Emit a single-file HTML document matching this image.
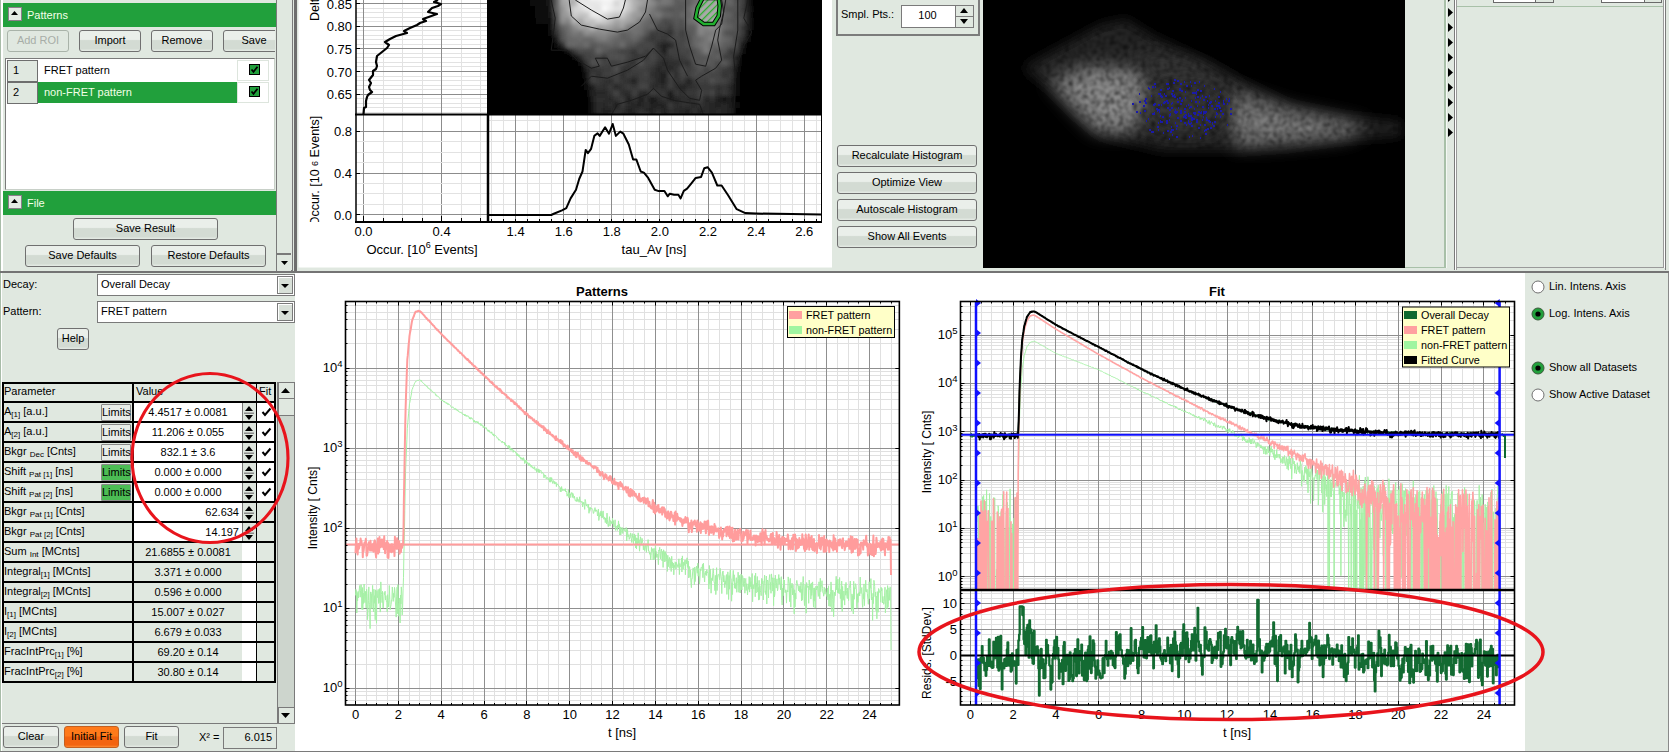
<!DOCTYPE html><html><head><meta charset="utf-8"><style>
*{margin:0;padding:0;box-sizing:content-box}
html,body{width:1669px;height:752px;overflow:hidden;background:#e0e8e0;font-family:"Liberation Sans",sans-serif;font-size:11px;color:#000}
body>div,body>svg{position:absolute}
.t{position:absolute;white-space:nowrap;line-height:13px}
.btn{position:absolute;border:1px solid #707070;border-radius:3px;text-align:center;white-space:nowrap;
 background:linear-gradient(#eaefea 0%,#eaefea 42%,#d3dbd3 48%,#d3dbd3 88%,#e6ece6 100%)}
sub{font-size:8px;vertical-align:0;position:relative;top:2px}
</style></head><body><div style="left:0px;top:0px;width:1px;height:272px;background:#a8bca8"></div><div style="left:1px;top:0px;width:2px;height:272px;background:#fff"></div><div style="left:3px;top:3px;width:274px;height:24px;background:#21a03c"></div><div style="left:8px;top:7px;width:12px;height:12px;background:#e4ebe4;border:1px solid #8a7f8a"></div><svg style="left:11px;top:11px" width="7" height="4"><polygon points="0,4 7,4 3.5,0" fill="#000"/></svg><div class="t" style="left:27px;top:9px;color:#f4ffe8;font-size:11px">Patterns</div><div class="btn" style="left:7px;top:30px;width:60px;height:20px;line-height:19px;color:#a7ada7;border-color:#a9b3a9;background:#e0e8e0">Add ROI</div><div class="btn" style="left:79px;top:30px;width:60px;height:20px;line-height:19px;">Import</div><div class="btn" style="left:151px;top:30px;width:60px;height:20px;line-height:19px;">Remove</div><div style="left:0;top:0;width:275px;height:272px;overflow:hidden"><div class="btn" style="left:223px;top:30px;width:60px;height:20px;line-height:19px">Save</div></div><div style="left:5px;top:58px;width:268px;height:130px;background:#fff;border:1px solid #7a7a7a;border-right-color:#c8d0c8;border-bottom-color:#c8d0c8"></div><div style="left:7px;top:60px;width:29px;height:20px;background:#e0e8e0;border:1px solid #6e6e6e"></div><div class="t" style="left:13px;top:64px;">1</div><div class="t" style="left:44px;top:64px;">FRET pattern</div><div style="left:237px;top:60px;width:32px;height:21px;border:1px solid #dde5dd;box-sizing:border-box"></div><svg style="left:249px;top:64px" width="11" height="11"><rect x="0.5" y="0.5" width="10" height="10" fill="#21a03c" stroke="#000"/><path d="M2.5 5.5 L4.5 7.8 L8.5 2.8" stroke="#000" stroke-width="1.8" fill="none"/></svg><div style="left:7px;top:82px;width:29px;height:20px;background:#e0e8e0;border:1px solid #6e6e6e"></div><div class="t" style="left:13px;top:86px;">2</div><div style="left:38px;top:82px;width:199px;height:21px;background:#21a03c"></div><div class="t" style="left:44px;top:86px;color:#f2ffe6">non-FRET pattern</div><div style="left:237px;top:82px;width:32px;height:21px;border:1px solid #dde5dd;box-sizing:border-box"></div><svg style="left:249px;top:86px" width="11" height="11"><rect x="0.5" y="0.5" width="10" height="10" fill="#21a03c" stroke="#000"/><path d="M2.5 5.5 L4.5 7.8 L8.5 2.8" stroke="#000" stroke-width="1.8" fill="none"/></svg><div style="left:3px;top:191px;width:274px;height:24px;background:#21a03c"></div><div style="left:8px;top:195px;width:12px;height:12px;background:#e4ebe4;border:1px solid #8a7f8a"></div><svg style="left:11px;top:199px" width="7" height="4"><polygon points="0,4 7,4 3.5,0" fill="#000"/></svg><div class="t" style="left:27px;top:197px;color:#f4ffe8">File</div><div class="btn" style="left:73px;top:218px;width:143px;height:20px;line-height:19px;">Save Result</div><div class="btn" style="left:25px;top:245px;width:113px;height:20px;line-height:19px;">Save Defaults</div><div class="btn" style="left:151px;top:245px;width:113px;height:20px;line-height:19px;">Restore Defaults</div><div style="left:276px;top:0px;width:15px;height:270px;background:#e0e8e0;border:1px solid #7a7a7a;border-top:none"></div><div style="left:277px;top:253px;width:14px;height:16px;border-top:2px solid #7a7a7a;background:#e0e8e0"></div><svg style="left:281px;top:261px" width="7" height="4"><polygon points="0,0 7,0 3.5,4" fill="#000"/></svg><div style="left:294px;top:0px;width:3px;height:272px;background:#6e6e6e"></div><div style="left:297px;top:0px;width:2px;height:270px;background:#e0e8e0"></div><svg style="left:297px;top:0px;font-family:Liberation Sans" width="535" height="268" viewBox="0 0 535 268"><rect x="0" y="0" width="535" height="268" fill="#e0e8e0"/><rect x="1.5" y="0" width="533.5" height="267.5" fill="#fff"/><line x1="86.5" y1="0" x2="86.5" y2="114" stroke="#e2e2e2" stroke-width="1"/><line x1="105.5" y1="0" x2="105.5" y2="114" stroke="#e2e2e2" stroke-width="1"/><line x1="125.5" y1="0" x2="125.5" y2="114" stroke="#e2e2e2" stroke-width="1"/><line x1="164.5" y1="0" x2="164.5" y2="114" stroke="#e2e2e2" stroke-width="1"/><line x1="183.5" y1="0" x2="183.5" y2="114" stroke="#e2e2e2" stroke-width="1"/><line x1="59" y1="112.5" x2="190" y2="112.5" stroke="#e2e2e2" stroke-width="1"/><line x1="59" y1="107.5" x2="190" y2="107.5" stroke="#e2e2e2" stroke-width="1"/><line x1="59" y1="103.5" x2="190" y2="103.5" stroke="#e2e2e2" stroke-width="1"/><line x1="59" y1="98.5" x2="190" y2="98.5" stroke="#e2e2e2" stroke-width="1"/><line x1="59" y1="94.5" x2="190" y2="94.5" stroke="#e2e2e2" stroke-width="1"/><line x1="59" y1="89.5" x2="190" y2="89.5" stroke="#e2e2e2" stroke-width="1"/><line x1="59" y1="85.5" x2="190" y2="85.5" stroke="#e2e2e2" stroke-width="1"/><line x1="59" y1="80.5" x2="190" y2="80.5" stroke="#e2e2e2" stroke-width="1"/><line x1="59" y1="76.5" x2="190" y2="76.5" stroke="#e2e2e2" stroke-width="1"/><line x1="59" y1="71.5" x2="190" y2="71.5" stroke="#e2e2e2" stroke-width="1"/><line x1="59" y1="66.5" x2="190" y2="66.5" stroke="#e2e2e2" stroke-width="1"/><line x1="59" y1="62.5" x2="190" y2="62.5" stroke="#e2e2e2" stroke-width="1"/><line x1="59" y1="57.5" x2="190" y2="57.5" stroke="#e2e2e2" stroke-width="1"/><line x1="59" y1="53.5" x2="190" y2="53.5" stroke="#e2e2e2" stroke-width="1"/><line x1="59" y1="48.5" x2="190" y2="48.5" stroke="#e2e2e2" stroke-width="1"/><line x1="59" y1="44.5" x2="190" y2="44.5" stroke="#e2e2e2" stroke-width="1"/><line x1="59" y1="39.5" x2="190" y2="39.5" stroke="#e2e2e2" stroke-width="1"/><line x1="59" y1="35.5" x2="190" y2="35.5" stroke="#e2e2e2" stroke-width="1"/><line x1="59" y1="30.5" x2="190" y2="30.5" stroke="#e2e2e2" stroke-width="1"/><line x1="59" y1="26.5" x2="190" y2="26.5" stroke="#e2e2e2" stroke-width="1"/><line x1="59" y1="21.5" x2="190" y2="21.5" stroke="#e2e2e2" stroke-width="1"/><line x1="59" y1="17.5" x2="190" y2="17.5" stroke="#e2e2e2" stroke-width="1"/><line x1="59" y1="12.5" x2="190" y2="12.5" stroke="#e2e2e2" stroke-width="1"/><line x1="59" y1="8.5" x2="190" y2="8.5" stroke="#e2e2e2" stroke-width="1"/><line x1="59" y1="3.5" x2="190" y2="3.5" stroke="#e2e2e2" stroke-width="1"/><line x1="59" y1="94.5" x2="190" y2="94.5" stroke="#8c8c8c" stroke-width="1"/><text x="55" y="99.19999999999997" text-anchor="end" font-size="13" >0.65</text><line x1="59" y1="94.5" x2="63" y2="94.5" stroke="#000" stroke-width="1"/><line x1="59" y1="71.5" x2="190" y2="71.5" stroke="#8c8c8c" stroke-width="1"/><text x="55" y="76.525" text-anchor="end" font-size="13" >0.70</text><line x1="59" y1="71.5" x2="63" y2="71.5" stroke="#000" stroke-width="1"/><line x1="59" y1="48.5" x2="190" y2="48.5" stroke="#8c8c8c" stroke-width="1"/><text x="55" y="53.84999999999999" text-anchor="end" font-size="13" >0.75</text><line x1="59" y1="48.5" x2="63" y2="48.5" stroke="#000" stroke-width="1"/><line x1="59" y1="26.5" x2="190" y2="26.5" stroke="#8c8c8c" stroke-width="1"/><text x="55" y="31.17499999999997" text-anchor="end" font-size="13" >0.80</text><line x1="59" y1="26.5" x2="63" y2="26.5" stroke="#000" stroke-width="1"/><line x1="59" y1="3.5" x2="190" y2="3.5" stroke="#8c8c8c" stroke-width="1"/><text x="55" y="8.5" text-anchor="end" font-size="13" >0.85</text><line x1="59" y1="3.5" x2="63" y2="3.5" stroke="#000" stroke-width="1"/><line x1="66.5" y1="0" x2="66.5" y2="222" stroke="#8c8c8c" stroke-width="1"/><line x1="144.5" y1="0" x2="144.5" y2="222" stroke="#8c8c8c" stroke-width="1"/><line x1="59" y1="204.5" x2="190" y2="204.5" stroke="#e2e2e2" stroke-width="1"/><line x1="59" y1="193.5" x2="190" y2="193.5" stroke="#e2e2e2" stroke-width="1"/><line x1="59" y1="183.5" x2="190" y2="183.5" stroke="#e2e2e2" stroke-width="1"/><line x1="59" y1="162.5" x2="190" y2="162.5" stroke="#e2e2e2" stroke-width="1"/><line x1="59" y1="152.5" x2="190" y2="152.5" stroke="#e2e2e2" stroke-width="1"/><line x1="59" y1="141.5" x2="190" y2="141.5" stroke="#e2e2e2" stroke-width="1"/><line x1="86.5" y1="115" x2="86.5" y2="222" stroke="#e2e2e2" stroke-width="1"/><line x1="105.5" y1="115" x2="105.5" y2="222" stroke="#e2e2e2" stroke-width="1"/><line x1="125.5" y1="115" x2="125.5" y2="222" stroke="#e2e2e2" stroke-width="1"/><line x1="164.5" y1="115" x2="164.5" y2="222" stroke="#e2e2e2" stroke-width="1"/><line x1="183.5" y1="115" x2="183.5" y2="222" stroke="#e2e2e2" stroke-width="1"/><line x1="59" y1="214.5" x2="190" y2="214.5" stroke="#8c8c8c" stroke-width="1"/><text x="55" y="219.8" text-anchor="end" font-size="13" >0.0</text><line x1="59" y1="214.5" x2="63" y2="214.5" stroke="#000" stroke-width="1"/><line x1="59" y1="173.5" x2="190" y2="173.5" stroke="#8c8c8c" stroke-width="1"/><text x="55" y="178.05" text-anchor="end" font-size="13" >0.4</text><line x1="59" y1="173.5" x2="63" y2="173.5" stroke="#000" stroke-width="1"/><line x1="59" y1="131.5" x2="190" y2="131.5" stroke="#8c8c8c" stroke-width="1"/><text x="55" y="136.3" text-anchor="end" font-size="13" >0.8</text><line x1="59" y1="131.5" x2="63" y2="131.5" stroke="#000" stroke-width="1"/><line x1="194.5" y1="115" x2="194.5" y2="222" stroke="#e2e2e2" stroke-width="1"/><line x1="206.5" y1="115" x2="206.5" y2="222" stroke="#e2e2e2" stroke-width="1"/><line x1="218.5" y1="115" x2="218.5" y2="222" stroke="#e2e2e2" stroke-width="1"/><line x1="230.5" y1="115" x2="230.5" y2="222" stroke="#e2e2e2" stroke-width="1"/><line x1="242.5" y1="115" x2="242.5" y2="222" stroke="#e2e2e2" stroke-width="1"/><line x1="254.5" y1="115" x2="254.5" y2="222" stroke="#e2e2e2" stroke-width="1"/><line x1="266.5" y1="115" x2="266.5" y2="222" stroke="#e2e2e2" stroke-width="1"/><line x1="278.5" y1="115" x2="278.5" y2="222" stroke="#e2e2e2" stroke-width="1"/><line x1="290.5" y1="115" x2="290.5" y2="222" stroke="#e2e2e2" stroke-width="1"/><line x1="302.5" y1="115" x2="302.5" y2="222" stroke="#e2e2e2" stroke-width="1"/><line x1="314.5" y1="115" x2="314.5" y2="222" stroke="#e2e2e2" stroke-width="1"/><line x1="326.5" y1="115" x2="326.5" y2="222" stroke="#e2e2e2" stroke-width="1"/><line x1="338.5" y1="115" x2="338.5" y2="222" stroke="#e2e2e2" stroke-width="1"/><line x1="350.5" y1="115" x2="350.5" y2="222" stroke="#e2e2e2" stroke-width="1"/><line x1="362.5" y1="115" x2="362.5" y2="222" stroke="#e2e2e2" stroke-width="1"/><line x1="374.5" y1="115" x2="374.5" y2="222" stroke="#e2e2e2" stroke-width="1"/><line x1="386.5" y1="115" x2="386.5" y2="222" stroke="#e2e2e2" stroke-width="1"/><line x1="398.5" y1="115" x2="398.5" y2="222" stroke="#e2e2e2" stroke-width="1"/><line x1="411.5" y1="115" x2="411.5" y2="222" stroke="#e2e2e2" stroke-width="1"/><line x1="423.5" y1="115" x2="423.5" y2="222" stroke="#e2e2e2" stroke-width="1"/><line x1="435.5" y1="115" x2="435.5" y2="222" stroke="#e2e2e2" stroke-width="1"/><line x1="447.5" y1="115" x2="447.5" y2="222" stroke="#e2e2e2" stroke-width="1"/><line x1="459.5" y1="115" x2="459.5" y2="222" stroke="#e2e2e2" stroke-width="1"/><line x1="471.5" y1="115" x2="471.5" y2="222" stroke="#e2e2e2" stroke-width="1"/><line x1="483.5" y1="115" x2="483.5" y2="222" stroke="#e2e2e2" stroke-width="1"/><line x1="495.5" y1="115" x2="495.5" y2="222" stroke="#e2e2e2" stroke-width="1"/><line x1="507.5" y1="115" x2="507.5" y2="222" stroke="#e2e2e2" stroke-width="1"/><line x1="519.5" y1="115" x2="519.5" y2="222" stroke="#e2e2e2" stroke-width="1"/><line x1="191" y1="214.5" x2="524" y2="214.5" stroke="#e2e2e2" stroke-width="1"/><line x1="191" y1="204.5" x2="524" y2="204.5" stroke="#e2e2e2" stroke-width="1"/><line x1="191" y1="193.5" x2="524" y2="193.5" stroke="#e2e2e2" stroke-width="1"/><line x1="191" y1="183.5" x2="524" y2="183.5" stroke="#e2e2e2" stroke-width="1"/><line x1="191" y1="173.5" x2="524" y2="173.5" stroke="#e2e2e2" stroke-width="1"/><line x1="191" y1="162.5" x2="524" y2="162.5" stroke="#e2e2e2" stroke-width="1"/><line x1="191" y1="152.5" x2="524" y2="152.5" stroke="#e2e2e2" stroke-width="1"/><line x1="191" y1="141.5" x2="524" y2="141.5" stroke="#e2e2e2" stroke-width="1"/><line x1="191" y1="131.5" x2="524" y2="131.5" stroke="#e2e2e2" stroke-width="1"/><line x1="191" y1="120.5" x2="524" y2="120.5" stroke="#e2e2e2" stroke-width="1"/><line x1="218.5" y1="115" x2="218.5" y2="222" stroke="#8c8c8c" stroke-width="1"/><text x="218.60000000000002" y="236" text-anchor="middle" font-size="13" >1.4</text><line x1="266.5" y1="115" x2="266.5" y2="222" stroke="#8c8c8c" stroke-width="1"/><text x="266.70000000000005" y="236" text-anchor="middle" font-size="13" >1.6</text><line x1="314.5" y1="115" x2="314.5" y2="222" stroke="#8c8c8c" stroke-width="1"/><text x="314.79999999999995" y="236" text-anchor="middle" font-size="13" >1.8</text><line x1="362.5" y1="115" x2="362.5" y2="222" stroke="#8c8c8c" stroke-width="1"/><text x="362.9000000000001" y="236" text-anchor="middle" font-size="13" >2.0</text><line x1="411.5" y1="115" x2="411.5" y2="222" stroke="#8c8c8c" stroke-width="1"/><text x="411.0000000000001" y="236" text-anchor="middle" font-size="13" >2.2</text><line x1="459.5" y1="115" x2="459.5" y2="222" stroke="#8c8c8c" stroke-width="1"/><text x="459.1" y="236" text-anchor="middle" font-size="13" >2.4</text><line x1="507.5" y1="115" x2="507.5" y2="222" stroke="#8c8c8c" stroke-width="1"/><text x="507.20000000000005" y="236" text-anchor="middle" font-size="13" >2.6</text><line x1="191" y1="214.5" x2="524" y2="214.5" stroke="#8c8c8c" stroke-width="1"/><line x1="191" y1="173.5" x2="524" y2="173.5" stroke="#8c8c8c" stroke-width="1"/><line x1="191" y1="131.5" x2="524" y2="131.5" stroke="#8c8c8c" stroke-width="1"/><text x="66.5" y="236" text-anchor="middle" font-size="13" >0.0</text><text x="144.60000000000002" y="236" text-anchor="middle" font-size="13" >0.4</text><line x1="66.5" y1="222" x2="66.5" y2="216" stroke="#000" stroke-width="1"/><line x1="86.5" y1="222" x2="86.5" y2="218" stroke="#000" stroke-width="1"/><line x1="105.5" y1="222" x2="105.5" y2="218" stroke="#000" stroke-width="1"/><line x1="125.5" y1="222" x2="125.5" y2="218" stroke="#000" stroke-width="1"/><line x1="144.5" y1="222" x2="144.5" y2="216" stroke="#000" stroke-width="1"/><line x1="164.5" y1="222" x2="164.5" y2="218" stroke="#000" stroke-width="1"/><line x1="183.5" y1="222" x2="183.5" y2="218" stroke="#000" stroke-width="1"/><line x1="194.5" y1="222" x2="194.5" y2="219" stroke="#000" stroke-width="1"/><line x1="206.5" y1="222" x2="206.5" y2="219" stroke="#000" stroke-width="1"/><line x1="218.5" y1="222" x2="218.5" y2="219" stroke="#000" stroke-width="1"/><line x1="230.5" y1="222" x2="230.5" y2="219" stroke="#000" stroke-width="1"/><line x1="242.5" y1="222" x2="242.5" y2="219" stroke="#000" stroke-width="1"/><line x1="254.5" y1="222" x2="254.5" y2="219" stroke="#000" stroke-width="1"/><line x1="266.5" y1="222" x2="266.5" y2="219" stroke="#000" stroke-width="1"/><line x1="278.5" y1="222" x2="278.5" y2="219" stroke="#000" stroke-width="1"/><line x1="290.5" y1="222" x2="290.5" y2="219" stroke="#000" stroke-width="1"/><line x1="302.5" y1="222" x2="302.5" y2="219" stroke="#000" stroke-width="1"/><line x1="314.5" y1="222" x2="314.5" y2="219" stroke="#000" stroke-width="1"/><line x1="326.5" y1="222" x2="326.5" y2="219" stroke="#000" stroke-width="1"/><line x1="338.5" y1="222" x2="338.5" y2="219" stroke="#000" stroke-width="1"/><line x1="350.5" y1="222" x2="350.5" y2="219" stroke="#000" stroke-width="1"/><line x1="362.5" y1="222" x2="362.5" y2="219" stroke="#000" stroke-width="1"/><line x1="374.5" y1="222" x2="374.5" y2="219" stroke="#000" stroke-width="1"/><line x1="386.5" y1="222" x2="386.5" y2="219" stroke="#000" stroke-width="1"/><line x1="398.5" y1="222" x2="398.5" y2="219" stroke="#000" stroke-width="1"/><line x1="411.5" y1="222" x2="411.5" y2="219" stroke="#000" stroke-width="1"/><line x1="423.5" y1="222" x2="423.5" y2="219" stroke="#000" stroke-width="1"/><line x1="435.5" y1="222" x2="435.5" y2="219" stroke="#000" stroke-width="1"/><line x1="447.5" y1="222" x2="447.5" y2="219" stroke="#000" stroke-width="1"/><line x1="459.5" y1="222" x2="459.5" y2="219" stroke="#000" stroke-width="1"/><line x1="471.5" y1="222" x2="471.5" y2="219" stroke="#000" stroke-width="1"/><line x1="483.5" y1="222" x2="483.5" y2="219" stroke="#000" stroke-width="1"/><line x1="495.5" y1="222" x2="495.5" y2="219" stroke="#000" stroke-width="1"/><line x1="507.5" y1="222" x2="507.5" y2="219" stroke="#000" stroke-width="1"/><line x1="519.5" y1="222" x2="519.5" y2="219" stroke="#000" stroke-width="1"/><defs><clipPath id="c2d"><rect x="190" y="0" width="335" height="114.5"/></clipPath><filter id="bl2" filterUnits="userSpaceOnUse" x="150" y="-30" width="400" height="180"><feGaussianBlur stdDeviation="2.2"/></filter><pattern id="hatch" width="5" height="5" patternUnits="userSpaceOnUse" patternTransform="rotate(45)"><rect width="5" height="5" fill="#a8a8a8"/><rect width="1.3" height="5" fill="#30b030"/></pattern></defs><g clip-path="url(#c2d)"><rect x="190" y="0" width="335" height="114.5" fill="#000"/><g filter="url(#bl2)"><rect x="214.5" y="-12.0" width="6.3" height="6.3" fill="#040404"/><rect x="232.5" y="-12.0" width="6.3" height="6.3" fill="#060606"/><rect x="238.5" y="-12.0" width="6.3" height="6.3" fill="#0c0c0c"/><rect x="244.5" y="-12.0" width="6.3" height="6.3" fill="#141414"/><rect x="250.5" y="-12.0" width="6.3" height="6.3" fill="#1f1f1f"/><rect x="256.5" y="-12.0" width="6.3" height="6.3" fill="#606060"/><rect x="262.5" y="-12.0" width="6.3" height="6.3" fill="#a4a4a4"/><rect x="268.5" y="-12.0" width="6.3" height="6.3" fill="#bababa"/><rect x="274.5" y="-12.0" width="6.3" height="6.3" fill="#c2c2c2"/><rect x="280.5" y="-12.0" width="6.3" height="6.3" fill="#dcdcdc"/><rect x="286.5" y="-12.0" width="6.3" height="6.3" fill="#eeeeee"/><rect x="292.5" y="-12.0" width="6.3" height="6.3" fill="#ffffff"/><rect x="298.5" y="-12.0" width="6.3" height="6.3" fill="#fcfcfc"/><rect x="304.5" y="-12.0" width="6.3" height="6.3" fill="#ffffff"/><rect x="310.5" y="-12.0" width="6.3" height="6.3" fill="#ececec"/><rect x="316.5" y="-12.0" width="6.3" height="6.3" fill="#f5f5f5"/><rect x="322.5" y="-12.0" width="6.3" height="6.3" fill="#dfdfdf"/><rect x="328.5" y="-12.0" width="6.3" height="6.3" fill="#c6c6c6"/><rect x="334.5" y="-12.0" width="6.3" height="6.3" fill="#b8b8b8"/><rect x="340.5" y="-12.0" width="6.3" height="6.3" fill="#aeaeae"/><rect x="346.5" y="-12.0" width="6.3" height="6.3" fill="#909090"/><rect x="352.5" y="-12.0" width="6.3" height="6.3" fill="#8e8e8e"/><rect x="358.5" y="-12.0" width="6.3" height="6.3" fill="#868686"/><rect x="364.5" y="-12.0" width="6.3" height="6.3" fill="#7d7d7d"/><rect x="370.5" y="-12.0" width="6.3" height="6.3" fill="#767676"/><rect x="376.5" y="-12.0" width="6.3" height="6.3" fill="#545454"/><rect x="382.5" y="-12.0" width="6.3" height="6.3" fill="#666666"/><rect x="388.5" y="-12.0" width="6.3" height="6.3" fill="#616161"/><rect x="394.5" y="-12.0" width="6.3" height="6.3" fill="#7c7c7c"/><rect x="400.5" y="-12.0" width="6.3" height="6.3" fill="#7e7e7e"/><rect x="406.5" y="-12.0" width="6.3" height="6.3" fill="#868686"/><rect x="412.5" y="-12.0" width="6.3" height="6.3" fill="#868686"/><rect x="418.5" y="-12.0" width="6.3" height="6.3" fill="#707070"/><rect x="424.5" y="-12.0" width="6.3" height="6.3" fill="#6a6a6a"/><rect x="430.5" y="-12.0" width="6.3" height="6.3" fill="#565656"/><rect x="436.5" y="-12.0" width="6.3" height="6.3" fill="#6e6e6e"/><rect x="442.5" y="-12.0" width="6.3" height="6.3" fill="#404040"/><rect x="448.5" y="-12.0" width="6.3" height="6.3" fill="#191919"/><rect x="232.5" y="-6.0" width="6.3" height="6.3" fill="#060606"/><rect x="238.5" y="-6.0" width="6.3" height="6.3" fill="#0c0c0c"/><rect x="244.5" y="-6.0" width="6.3" height="6.3" fill="#141414"/><rect x="250.5" y="-6.0" width="6.3" height="6.3" fill="#1c1c1c"/><rect x="256.5" y="-6.0" width="6.3" height="6.3" fill="#5f5f5f"/><rect x="262.5" y="-6.0" width="6.3" height="6.3" fill="#a8a8a8"/><rect x="268.5" y="-6.0" width="6.3" height="6.3" fill="#bdbdbd"/><rect x="274.5" y="-6.0" width="6.3" height="6.3" fill="#bcbcbc"/><rect x="280.5" y="-6.0" width="6.3" height="6.3" fill="#efefef"/><rect x="286.5" y="-6.0" width="6.3" height="6.3" fill="#e2e2e2"/><rect x="292.5" y="-6.0" width="6.3" height="6.3" fill="#ffffff"/><rect x="298.5" y="-6.0" width="6.3" height="6.3" fill="#fafafa"/><rect x="304.5" y="-6.0" width="6.3" height="6.3" fill="#ffffff"/><rect x="310.5" y="-6.0" width="6.3" height="6.3" fill="#ffffff"/><rect x="316.5" y="-6.0" width="6.3" height="6.3" fill="#f4f4f4"/><rect x="322.5" y="-6.0" width="6.3" height="6.3" fill="#dfdfdf"/><rect x="328.5" y="-6.0" width="6.3" height="6.3" fill="#c1c1c1"/><rect x="334.5" y="-6.0" width="6.3" height="6.3" fill="#b1b1b1"/><rect x="340.5" y="-6.0" width="6.3" height="6.3" fill="#969696"/><rect x="346.5" y="-6.0" width="6.3" height="6.3" fill="#a8a8a8"/><rect x="352.5" y="-6.0" width="6.3" height="6.3" fill="#737373"/><rect x="358.5" y="-6.0" width="6.3" height="6.3" fill="#5b5b5b"/><rect x="364.5" y="-6.0" width="6.3" height="6.3" fill="#7e7e7e"/><rect x="370.5" y="-6.0" width="6.3" height="6.3" fill="#737373"/><rect x="376.5" y="-6.0" width="6.3" height="6.3" fill="#5e5e5e"/><rect x="382.5" y="-6.0" width="6.3" height="6.3" fill="#6b6b6b"/><rect x="388.5" y="-6.0" width="6.3" height="6.3" fill="#5f5f5f"/><rect x="394.5" y="-6.0" width="6.3" height="6.3" fill="#6c6c6c"/><rect x="400.5" y="-6.0" width="6.3" height="6.3" fill="#838383"/><rect x="406.5" y="-6.0" width="6.3" height="6.3" fill="#888888"/><rect x="412.5" y="-6.0" width="6.3" height="6.3" fill="#7c7c7c"/><rect x="418.5" y="-6.0" width="6.3" height="6.3" fill="#878787"/><rect x="424.5" y="-6.0" width="6.3" height="6.3" fill="#707070"/><rect x="430.5" y="-6.0" width="6.3" height="6.3" fill="#606060"/><rect x="436.5" y="-6.0" width="6.3" height="6.3" fill="#4b4b4b"/><rect x="442.5" y="-6.0" width="6.3" height="6.3" fill="#454545"/><rect x="448.5" y="-6.0" width="6.3" height="6.3" fill="#171717"/><rect x="490.5" y="-6.0" width="6.3" height="6.3" fill="#040404"/><rect x="520.5" y="-6.0" width="6.3" height="6.3" fill="#040404"/><rect x="226.5" y="0.0" width="6.3" height="6.3" fill="#050505"/><rect x="232.5" y="0.0" width="6.3" height="6.3" fill="#080808"/><rect x="238.5" y="0.0" width="6.3" height="6.3" fill="#0a0a0a"/><rect x="244.5" y="0.0" width="6.3" height="6.3" fill="#101010"/><rect x="250.5" y="0.0" width="6.3" height="6.3" fill="#1d1d1d"/><rect x="256.5" y="0.0" width="6.3" height="6.3" fill="#616161"/><rect x="262.5" y="0.0" width="6.3" height="6.3" fill="#a5a5a5"/><rect x="268.5" y="0.0" width="6.3" height="6.3" fill="#aeaeae"/><rect x="274.5" y="0.0" width="6.3" height="6.3" fill="#b2b2b2"/><rect x="280.5" y="0.0" width="6.3" height="6.3" fill="#eaeaea"/><rect x="286.5" y="0.0" width="6.3" height="6.3" fill="#ededed"/><rect x="292.5" y="0.0" width="6.3" height="6.3" fill="#e9e9e9"/><rect x="298.5" y="0.0" width="6.3" height="6.3" fill="#ececec"/><rect x="304.5" y="0.0" width="6.3" height="6.3" fill="#f5f5f5"/><rect x="310.5" y="0.0" width="6.3" height="6.3" fill="#f3f3f3"/><rect x="316.5" y="0.0" width="6.3" height="6.3" fill="#d6d6d6"/><rect x="322.5" y="0.0" width="6.3" height="6.3" fill="#ececec"/><rect x="328.5" y="0.0" width="6.3" height="6.3" fill="#d0d0d0"/><rect x="334.5" y="0.0" width="6.3" height="6.3" fill="#b4b4b4"/><rect x="340.5" y="0.0" width="6.3" height="6.3" fill="#a8a8a8"/><rect x="346.5" y="0.0" width="6.3" height="6.3" fill="#959595"/><rect x="352.5" y="0.0" width="6.3" height="6.3" fill="#8e8e8e"/><rect x="358.5" y="0.0" width="6.3" height="6.3" fill="#777777"/><rect x="364.5" y="0.0" width="6.3" height="6.3" fill="#787878"/><rect x="370.5" y="0.0" width="6.3" height="6.3" fill="#747474"/><rect x="376.5" y="0.0" width="6.3" height="6.3" fill="#5d5d5d"/><rect x="382.5" y="0.0" width="6.3" height="6.3" fill="#5c5c5c"/><rect x="388.5" y="0.0" width="6.3" height="6.3" fill="#5e5e5e"/><rect x="394.5" y="0.0" width="6.3" height="6.3" fill="#717171"/><rect x="400.5" y="0.0" width="6.3" height="6.3" fill="#787878"/><rect x="406.5" y="0.0" width="6.3" height="6.3" fill="#878787"/><rect x="412.5" y="0.0" width="6.3" height="6.3" fill="#868686"/><rect x="418.5" y="0.0" width="6.3" height="6.3" fill="#7d7d7d"/><rect x="424.5" y="0.0" width="6.3" height="6.3" fill="#5d5d5d"/><rect x="430.5" y="0.0" width="6.3" height="6.3" fill="#696969"/><rect x="436.5" y="0.0" width="6.3" height="6.3" fill="#545454"/><rect x="442.5" y="0.0" width="6.3" height="6.3" fill="#424242"/><rect x="448.5" y="0.0" width="6.3" height="6.3" fill="#171717"/><rect x="232.5" y="6.0" width="6.3" height="6.3" fill="#050505"/><rect x="238.5" y="6.0" width="6.3" height="6.3" fill="#0a0a0a"/><rect x="244.5" y="6.0" width="6.3" height="6.3" fill="#0b0b0b"/><rect x="250.5" y="6.0" width="6.3" height="6.3" fill="#181818"/><rect x="256.5" y="6.0" width="6.3" height="6.3" fill="#656565"/><rect x="262.5" y="6.0" width="6.3" height="6.3" fill="#959595"/><rect x="268.5" y="6.0" width="6.3" height="6.3" fill="#b1b1b1"/><rect x="274.5" y="6.0" width="6.3" height="6.3" fill="#d7d7d7"/><rect x="280.5" y="6.0" width="6.3" height="6.3" fill="#dddddd"/><rect x="286.5" y="6.0" width="6.3" height="6.3" fill="#ededed"/><rect x="292.5" y="6.0" width="6.3" height="6.3" fill="#ececec"/><rect x="298.5" y="6.0" width="6.3" height="6.3" fill="#e5e5e5"/><rect x="304.5" y="6.0" width="6.3" height="6.3" fill="#ffffff"/><rect x="310.5" y="6.0" width="6.3" height="6.3" fill="#f1f1f1"/><rect x="316.5" y="6.0" width="6.3" height="6.3" fill="#e6e6e6"/><rect x="322.5" y="6.0" width="6.3" height="6.3" fill="#e7e7e7"/><rect x="328.5" y="6.0" width="6.3" height="6.3" fill="#cdcdcd"/><rect x="334.5" y="6.0" width="6.3" height="6.3" fill="#b2b2b2"/><rect x="340.5" y="6.0" width="6.3" height="6.3" fill="#939393"/><rect x="346.5" y="6.0" width="6.3" height="6.3" fill="#8b8b8b"/><rect x="352.5" y="6.0" width="6.3" height="6.3" fill="#7c7c7c"/><rect x="358.5" y="6.0" width="6.3" height="6.3" fill="#686868"/><rect x="364.5" y="6.0" width="6.3" height="6.3" fill="#5c5c5c"/><rect x="370.5" y="6.0" width="6.3" height="6.3" fill="#545454"/><rect x="376.5" y="6.0" width="6.3" height="6.3" fill="#5b5b5b"/><rect x="382.5" y="6.0" width="6.3" height="6.3" fill="#585858"/><rect x="388.5" y="6.0" width="6.3" height="6.3" fill="#6b6b6b"/><rect x="394.5" y="6.0" width="6.3" height="6.3" fill="#7f7f7f"/><rect x="400.5" y="6.0" width="6.3" height="6.3" fill="#868686"/><rect x="406.5" y="6.0" width="6.3" height="6.3" fill="#8b8b8b"/><rect x="412.5" y="6.0" width="6.3" height="6.3" fill="#989898"/><rect x="418.5" y="6.0" width="6.3" height="6.3" fill="#818181"/><rect x="424.5" y="6.0" width="6.3" height="6.3" fill="#5a5a5a"/><rect x="430.5" y="6.0" width="6.3" height="6.3" fill="#555555"/><rect x="436.5" y="6.0" width="6.3" height="6.3" fill="#575757"/><rect x="442.5" y="6.0" width="6.3" height="6.3" fill="#3b3b3b"/><rect x="448.5" y="6.0" width="6.3" height="6.3" fill="#1d1d1d"/><rect x="190.5" y="12.0" width="6.3" height="6.3" fill="#040404"/><rect x="232.5" y="12.0" width="6.3" height="6.3" fill="#050505"/><rect x="238.5" y="12.0" width="6.3" height="6.3" fill="#0a0a0a"/><rect x="244.5" y="12.0" width="6.3" height="6.3" fill="#0c0c0c"/><rect x="250.5" y="12.0" width="6.3" height="6.3" fill="#141414"/><rect x="256.5" y="12.0" width="6.3" height="6.3" fill="#515151"/><rect x="262.5" y="12.0" width="6.3" height="6.3" fill="#989898"/><rect x="268.5" y="12.0" width="6.3" height="6.3" fill="#a0a0a0"/><rect x="274.5" y="12.0" width="6.3" height="6.3" fill="#d0d0d0"/><rect x="280.5" y="12.0" width="6.3" height="6.3" fill="#c5c5c5"/><rect x="286.5" y="12.0" width="6.3" height="6.3" fill="#c6c6c6"/><rect x="292.5" y="12.0" width="6.3" height="6.3" fill="#f0f0f0"/><rect x="298.5" y="12.0" width="6.3" height="6.3" fill="#f0f0f0"/><rect x="304.5" y="12.0" width="6.3" height="6.3" fill="#dddddd"/><rect x="310.5" y="12.0" width="6.3" height="6.3" fill="#d3d3d3"/><rect x="316.5" y="12.0" width="6.3" height="6.3" fill="#c9c9c9"/><rect x="322.5" y="12.0" width="6.3" height="6.3" fill="#d2d2d2"/><rect x="328.5" y="12.0" width="6.3" height="6.3" fill="#b2b2b2"/><rect x="334.5" y="12.0" width="6.3" height="6.3" fill="#9d9d9d"/><rect x="340.5" y="12.0" width="6.3" height="6.3" fill="#9d9d9d"/><rect x="346.5" y="12.0" width="6.3" height="6.3" fill="#808080"/><rect x="352.5" y="12.0" width="6.3" height="6.3" fill="#737373"/><rect x="358.5" y="12.0" width="6.3" height="6.3" fill="#7c7c7c"/><rect x="364.5" y="12.0" width="6.3" height="6.3" fill="#676767"/><rect x="370.5" y="12.0" width="6.3" height="6.3" fill="#656565"/><rect x="376.5" y="12.0" width="6.3" height="6.3" fill="#5b5b5b"/><rect x="382.5" y="12.0" width="6.3" height="6.3" fill="#696969"/><rect x="388.5" y="12.0" width="6.3" height="6.3" fill="#636363"/><rect x="394.5" y="12.0" width="6.3" height="6.3" fill="#7f7f7f"/><rect x="400.5" y="12.0" width="6.3" height="6.3" fill="#909090"/><rect x="406.5" y="12.0" width="6.3" height="6.3" fill="#8a8a8a"/><rect x="412.5" y="12.0" width="6.3" height="6.3" fill="#7c7c7c"/><rect x="418.5" y="12.0" width="6.3" height="6.3" fill="#818181"/><rect x="424.5" y="12.0" width="6.3" height="6.3" fill="#686868"/><rect x="430.5" y="12.0" width="6.3" height="6.3" fill="#626262"/><rect x="436.5" y="12.0" width="6.3" height="6.3" fill="#4d4d4d"/><rect x="442.5" y="12.0" width="6.3" height="6.3" fill="#474747"/><rect x="448.5" y="12.0" width="6.3" height="6.3" fill="#1f1f1f"/><rect x="454.5" y="12.0" width="6.3" height="6.3" fill="#040404"/><rect x="232.5" y="18.0" width="6.3" height="6.3" fill="#040404"/><rect x="238.5" y="18.0" width="6.3" height="6.3" fill="#070707"/><rect x="244.5" y="18.0" width="6.3" height="6.3" fill="#0c0c0c"/><rect x="250.5" y="18.0" width="6.3" height="6.3" fill="#0e0e0e"/><rect x="256.5" y="18.0" width="6.3" height="6.3" fill="#484848"/><rect x="262.5" y="18.0" width="6.3" height="6.3" fill="#929292"/><rect x="268.5" y="18.0" width="6.3" height="6.3" fill="#868686"/><rect x="274.5" y="18.0" width="6.3" height="6.3" fill="#b9b9b9"/><rect x="280.5" y="18.0" width="6.3" height="6.3" fill="#a7a7a7"/><rect x="286.5" y="18.0" width="6.3" height="6.3" fill="#c9c9c9"/><rect x="292.5" y="18.0" width="6.3" height="6.3" fill="#c3c3c3"/><rect x="298.5" y="18.0" width="6.3" height="6.3" fill="#d9d9d9"/><rect x="304.5" y="18.0" width="6.3" height="6.3" fill="#d0d0d0"/><rect x="310.5" y="18.0" width="6.3" height="6.3" fill="#c0c0c0"/><rect x="316.5" y="18.0" width="6.3" height="6.3" fill="#a7a7a7"/><rect x="322.5" y="18.0" width="6.3" height="6.3" fill="#b0b0b0"/><rect x="328.5" y="18.0" width="6.3" height="6.3" fill="#a5a5a5"/><rect x="334.5" y="18.0" width="6.3" height="6.3" fill="#9a9a9a"/><rect x="340.5" y="18.0" width="6.3" height="6.3" fill="#787878"/><rect x="346.5" y="18.0" width="6.3" height="6.3" fill="#6d6d6d"/><rect x="352.5" y="18.0" width="6.3" height="6.3" fill="#606060"/><rect x="358.5" y="18.0" width="6.3" height="6.3" fill="#5f5f5f"/><rect x="364.5" y="18.0" width="6.3" height="6.3" fill="#4a4a4a"/><rect x="370.5" y="18.0" width="6.3" height="6.3" fill="#4e4e4e"/><rect x="376.5" y="18.0" width="6.3" height="6.3" fill="#5a5a5a"/><rect x="382.5" y="18.0" width="6.3" height="6.3" fill="#515151"/><rect x="388.5" y="18.0" width="6.3" height="6.3" fill="#707070"/><rect x="394.5" y="18.0" width="6.3" height="6.3" fill="#777777"/><rect x="400.5" y="18.0" width="6.3" height="6.3" fill="#828282"/><rect x="406.5" y="18.0" width="6.3" height="6.3" fill="#9a9a9a"/><rect x="412.5" y="18.0" width="6.3" height="6.3" fill="#909090"/><rect x="418.5" y="18.0" width="6.3" height="6.3" fill="#787878"/><rect x="424.5" y="18.0" width="6.3" height="6.3" fill="#626262"/><rect x="430.5" y="18.0" width="6.3" height="6.3" fill="#595959"/><rect x="436.5" y="18.0" width="6.3" height="6.3" fill="#555555"/><rect x="442.5" y="18.0" width="6.3" height="6.3" fill="#4d4d4d"/><rect x="448.5" y="18.0" width="6.3" height="6.3" fill="#1c1c1c"/><rect x="226.5" y="24.0" width="6.3" height="6.3" fill="#040404"/><rect x="232.5" y="24.0" width="6.3" height="6.3" fill="#040404"/><rect x="244.5" y="24.0" width="6.3" height="6.3" fill="#060606"/><rect x="250.5" y="24.0" width="6.3" height="6.3" fill="#090909"/><rect x="256.5" y="24.0" width="6.3" height="6.3" fill="#414141"/><rect x="262.5" y="24.0" width="6.3" height="6.3" fill="#656565"/><rect x="268.5" y="24.0" width="6.3" height="6.3" fill="#717171"/><rect x="274.5" y="24.0" width="6.3" height="6.3" fill="#8d8d8d"/><rect x="280.5" y="24.0" width="6.3" height="6.3" fill="#a4a4a4"/><rect x="286.5" y="24.0" width="6.3" height="6.3" fill="#9f9f9f"/><rect x="292.5" y="24.0" width="6.3" height="6.3" fill="#bebebe"/><rect x="298.5" y="24.0" width="6.3" height="6.3" fill="#9f9f9f"/><rect x="304.5" y="24.0" width="6.3" height="6.3" fill="#a8a8a8"/><rect x="310.5" y="24.0" width="6.3" height="6.3" fill="#a3a3a3"/><rect x="316.5" y="24.0" width="6.3" height="6.3" fill="#969696"/><rect x="322.5" y="24.0" width="6.3" height="6.3" fill="#a2a2a2"/><rect x="328.5" y="24.0" width="6.3" height="6.3" fill="#7f7f7f"/><rect x="334.5" y="24.0" width="6.3" height="6.3" fill="#767676"/><rect x="340.5" y="24.0" width="6.3" height="6.3" fill="#717171"/><rect x="346.5" y="24.0" width="6.3" height="6.3" fill="#636363"/><rect x="352.5" y="24.0" width="6.3" height="6.3" fill="#676767"/><rect x="358.5" y="24.0" width="6.3" height="6.3" fill="#4a4a4a"/><rect x="364.5" y="24.0" width="6.3" height="6.3" fill="#4d4d4d"/><rect x="370.5" y="24.0" width="6.3" height="6.3" fill="#404040"/><rect x="376.5" y="24.0" width="6.3" height="6.3" fill="#565656"/><rect x="382.5" y="24.0" width="6.3" height="6.3" fill="#505050"/><rect x="388.5" y="24.0" width="6.3" height="6.3" fill="#616161"/><rect x="394.5" y="24.0" width="6.3" height="6.3" fill="#5f5f5f"/><rect x="400.5" y="24.0" width="6.3" height="6.3" fill="#8a8a8a"/><rect x="406.5" y="24.0" width="6.3" height="6.3" fill="#868686"/><rect x="412.5" y="24.0" width="6.3" height="6.3" fill="#929292"/><rect x="418.5" y="24.0" width="6.3" height="6.3" fill="#7f7f7f"/><rect x="424.5" y="24.0" width="6.3" height="6.3" fill="#6c6c6c"/><rect x="430.5" y="24.0" width="6.3" height="6.3" fill="#646464"/><rect x="436.5" y="24.0" width="6.3" height="6.3" fill="#535353"/><rect x="442.5" y="24.0" width="6.3" height="6.3" fill="#393939"/><rect x="448.5" y="24.0" width="6.3" height="6.3" fill="#1c1c1c"/><rect x="244.5" y="30.0" width="6.3" height="6.3" fill="#040404"/><rect x="250.5" y="30.0" width="6.3" height="6.3" fill="#090909"/><rect x="256.5" y="30.0" width="6.3" height="6.3" fill="#303030"/><rect x="262.5" y="30.0" width="6.3" height="6.3" fill="#565656"/><rect x="268.5" y="30.0" width="6.3" height="6.3" fill="#6e6e6e"/><rect x="274.5" y="30.0" width="6.3" height="6.3" fill="#7d7d7d"/><rect x="280.5" y="30.0" width="6.3" height="6.3" fill="#737373"/><rect x="286.5" y="30.0" width="6.3" height="6.3" fill="#939393"/><rect x="292.5" y="30.0" width="6.3" height="6.3" fill="#8c8c8c"/><rect x="298.5" y="30.0" width="6.3" height="6.3" fill="#8d8d8d"/><rect x="304.5" y="30.0" width="6.3" height="6.3" fill="#8e8e8e"/><rect x="310.5" y="30.0" width="6.3" height="6.3" fill="#838383"/><rect x="316.5" y="30.0" width="6.3" height="6.3" fill="#7a7a7a"/><rect x="322.5" y="30.0" width="6.3" height="6.3" fill="#5f5f5f"/><rect x="328.5" y="30.0" width="6.3" height="6.3" fill="#686868"/><rect x="334.5" y="30.0" width="6.3" height="6.3" fill="#737373"/><rect x="340.5" y="30.0" width="6.3" height="6.3" fill="#6e6e6e"/><rect x="346.5" y="30.0" width="6.3" height="6.3" fill="#595959"/><rect x="352.5" y="30.0" width="6.3" height="6.3" fill="#3b3b3b"/><rect x="358.5" y="30.0" width="6.3" height="6.3" fill="#414141"/><rect x="364.5" y="30.0" width="6.3" height="6.3" fill="#3e3e3e"/><rect x="370.5" y="30.0" width="6.3" height="6.3" fill="#2f2f2f"/><rect x="376.5" y="30.0" width="6.3" height="6.3" fill="#505050"/><rect x="382.5" y="30.0" width="6.3" height="6.3" fill="#3e3e3e"/><rect x="388.5" y="30.0" width="6.3" height="6.3" fill="#595959"/><rect x="394.5" y="30.0" width="6.3" height="6.3" fill="#606060"/><rect x="400.5" y="30.0" width="6.3" height="6.3" fill="#888888"/><rect x="406.5" y="30.0" width="6.3" height="6.3" fill="#7a7a7a"/><rect x="412.5" y="30.0" width="6.3" height="6.3" fill="#7b7b7b"/><rect x="418.5" y="30.0" width="6.3" height="6.3" fill="#818181"/><rect x="424.5" y="30.0" width="6.3" height="6.3" fill="#565656"/><rect x="430.5" y="30.0" width="6.3" height="6.3" fill="#4f4f4f"/><rect x="436.5" y="30.0" width="6.3" height="6.3" fill="#525252"/><rect x="442.5" y="30.0" width="6.3" height="6.3" fill="#3c3c3c"/><rect x="448.5" y="30.0" width="6.3" height="6.3" fill="#0d0d0d"/><rect x="256.5" y="36.0" width="6.3" height="6.3" fill="#1d1d1d"/><rect x="262.5" y="36.0" width="6.3" height="6.3" fill="#545454"/><rect x="268.5" y="36.0" width="6.3" height="6.3" fill="#676767"/><rect x="274.5" y="36.0" width="6.3" height="6.3" fill="#6b6b6b"/><rect x="280.5" y="36.0" width="6.3" height="6.3" fill="#6e6e6e"/><rect x="286.5" y="36.0" width="6.3" height="6.3" fill="#666666"/><rect x="292.5" y="36.0" width="6.3" height="6.3" fill="#6a6a6a"/><rect x="298.5" y="36.0" width="6.3" height="6.3" fill="#7b7b7b"/><rect x="304.5" y="36.0" width="6.3" height="6.3" fill="#808080"/><rect x="310.5" y="36.0" width="6.3" height="6.3" fill="#727272"/><rect x="316.5" y="36.0" width="6.3" height="6.3" fill="#676767"/><rect x="322.5" y="36.0" width="6.3" height="6.3" fill="#626262"/><rect x="328.5" y="36.0" width="6.3" height="6.3" fill="#616161"/><rect x="334.5" y="36.0" width="6.3" height="6.3" fill="#696969"/><rect x="340.5" y="36.0" width="6.3" height="6.3" fill="#5a5a5a"/><rect x="346.5" y="36.0" width="6.3" height="6.3" fill="#404040"/><rect x="352.5" y="36.0" width="6.3" height="6.3" fill="#393939"/><rect x="358.5" y="36.0" width="6.3" height="6.3" fill="#3f3f3f"/><rect x="364.5" y="36.0" width="6.3" height="6.3" fill="#393939"/><rect x="370.5" y="36.0" width="6.3" height="6.3" fill="#494949"/><rect x="376.5" y="36.0" width="6.3" height="6.3" fill="#4b4b4b"/><rect x="382.5" y="36.0" width="6.3" height="6.3" fill="#474747"/><rect x="388.5" y="36.0" width="6.3" height="6.3" fill="#4d4d4d"/><rect x="394.5" y="36.0" width="6.3" height="6.3" fill="#686868"/><rect x="400.5" y="36.0" width="6.3" height="6.3" fill="#6b6b6b"/><rect x="406.5" y="36.0" width="6.3" height="6.3" fill="#797979"/><rect x="412.5" y="36.0" width="6.3" height="6.3" fill="#888888"/><rect x="418.5" y="36.0" width="6.3" height="6.3" fill="#767676"/><rect x="424.5" y="36.0" width="6.3" height="6.3" fill="#696969"/><rect x="430.5" y="36.0" width="6.3" height="6.3" fill="#626262"/><rect x="436.5" y="36.0" width="6.3" height="6.3" fill="#454545"/><rect x="442.5" y="36.0" width="6.3" height="6.3" fill="#303030"/><rect x="448.5" y="36.0" width="6.3" height="6.3" fill="#070707"/><rect x="256.5" y="42.0" width="6.3" height="6.3" fill="#0a0a0a"/><rect x="262.5" y="42.0" width="6.3" height="6.3" fill="#2a2a2a"/><rect x="268.5" y="42.0" width="6.3" height="6.3" fill="#6a6a6a"/><rect x="274.5" y="42.0" width="6.3" height="6.3" fill="#6b6b6b"/><rect x="280.5" y="42.0" width="6.3" height="6.3" fill="#646464"/><rect x="286.5" y="42.0" width="6.3" height="6.3" fill="#717171"/><rect x="292.5" y="42.0" width="6.3" height="6.3" fill="#595959"/><rect x="298.5" y="42.0" width="6.3" height="6.3" fill="#5f5f5f"/><rect x="304.5" y="42.0" width="6.3" height="6.3" fill="#616161"/><rect x="310.5" y="42.0" width="6.3" height="6.3" fill="#676767"/><rect x="316.5" y="42.0" width="6.3" height="6.3" fill="#5f5f5f"/><rect x="322.5" y="42.0" width="6.3" height="6.3" fill="#707070"/><rect x="328.5" y="42.0" width="6.3" height="6.3" fill="#565656"/><rect x="334.5" y="42.0" width="6.3" height="6.3" fill="#535353"/><rect x="340.5" y="42.0" width="6.3" height="6.3" fill="#424242"/><rect x="346.5" y="42.0" width="6.3" height="6.3" fill="#4c4c4c"/><rect x="352.5" y="42.0" width="6.3" height="6.3" fill="#474747"/><rect x="358.5" y="42.0" width="6.3" height="6.3" fill="#2e2e2e"/><rect x="364.5" y="42.0" width="6.3" height="6.3" fill="#242424"/><rect x="370.5" y="42.0" width="6.3" height="6.3" fill="#242424"/><rect x="376.5" y="42.0" width="6.3" height="6.3" fill="#444444"/><rect x="382.5" y="42.0" width="6.3" height="6.3" fill="#4a4a4a"/><rect x="388.5" y="42.0" width="6.3" height="6.3" fill="#525252"/><rect x="394.5" y="42.0" width="6.3" height="6.3" fill="#686868"/><rect x="400.5" y="42.0" width="6.3" height="6.3" fill="#747474"/><rect x="406.5" y="42.0" width="6.3" height="6.3" fill="#7c7c7c"/><rect x="412.5" y="42.0" width="6.3" height="6.3" fill="#646464"/><rect x="418.5" y="42.0" width="6.3" height="6.3" fill="#6e6e6e"/><rect x="424.5" y="42.0" width="6.3" height="6.3" fill="#616161"/><rect x="430.5" y="42.0" width="6.3" height="6.3" fill="#5a5a5a"/><rect x="436.5" y="42.0" width="6.3" height="6.3" fill="#4b4b4b"/><rect x="442.5" y="42.0" width="6.3" height="6.3" fill="#191919"/><rect x="268.5" y="48.0" width="6.3" height="6.3" fill="#131313"/><rect x="274.5" y="48.0" width="6.3" height="6.3" fill="#3a3a3a"/><rect x="280.5" y="48.0" width="6.3" height="6.3" fill="#505050"/><rect x="286.5" y="48.0" width="6.3" height="6.3" fill="#4a4a4a"/><rect x="292.5" y="48.0" width="6.3" height="6.3" fill="#4c4c4c"/><rect x="298.5" y="48.0" width="6.3" height="6.3" fill="#6b6b6b"/><rect x="304.5" y="48.0" width="6.3" height="6.3" fill="#5a5a5a"/><rect x="310.5" y="48.0" width="6.3" height="6.3" fill="#515151"/><rect x="316.5" y="48.0" width="6.3" height="6.3" fill="#4c4c4c"/><rect x="322.5" y="48.0" width="6.3" height="6.3" fill="#424242"/><rect x="328.5" y="48.0" width="6.3" height="6.3" fill="#434343"/><rect x="334.5" y="48.0" width="6.3" height="6.3" fill="#343434"/><rect x="340.5" y="48.0" width="6.3" height="6.3" fill="#4e4e4e"/><rect x="346.5" y="48.0" width="6.3" height="6.3" fill="#3c3c3c"/><rect x="352.5" y="48.0" width="6.3" height="6.3" fill="#444444"/><rect x="358.5" y="48.0" width="6.3" height="6.3" fill="#343434"/><rect x="364.5" y="48.0" width="6.3" height="6.3" fill="#1b1b1b"/><rect x="370.5" y="48.0" width="6.3" height="6.3" fill="#464646"/><rect x="376.5" y="48.0" width="6.3" height="6.3" fill="#3c3c3c"/><rect x="382.5" y="48.0" width="6.3" height="6.3" fill="#484848"/><rect x="388.5" y="48.0" width="6.3" height="6.3" fill="#454545"/><rect x="394.5" y="48.0" width="6.3" height="6.3" fill="#535353"/><rect x="400.5" y="48.0" width="6.3" height="6.3" fill="#646464"/><rect x="406.5" y="48.0" width="6.3" height="6.3" fill="#818181"/><rect x="412.5" y="48.0" width="6.3" height="6.3" fill="#5e5e5e"/><rect x="418.5" y="48.0" width="6.3" height="6.3" fill="#555555"/><rect x="424.5" y="48.0" width="6.3" height="6.3" fill="#595959"/><rect x="430.5" y="48.0" width="6.3" height="6.3" fill="#353535"/><rect x="436.5" y="48.0" width="6.3" height="6.3" fill="#3f3f3f"/><rect x="442.5" y="48.0" width="6.3" height="6.3" fill="#0b0b0b"/><rect x="274.5" y="54.0" width="6.3" height="6.3" fill="#080808"/><rect x="280.5" y="54.0" width="6.3" height="6.3" fill="#2b2b2b"/><rect x="286.5" y="54.0" width="6.3" height="6.3" fill="#454545"/><rect x="292.5" y="54.0" width="6.3" height="6.3" fill="#464646"/><rect x="298.5" y="54.0" width="6.3" height="6.3" fill="#464646"/><rect x="304.5" y="54.0" width="6.3" height="6.3" fill="#383838"/><rect x="310.5" y="54.0" width="6.3" height="6.3" fill="#525252"/><rect x="316.5" y="54.0" width="6.3" height="6.3" fill="#525252"/><rect x="322.5" y="54.0" width="6.3" height="6.3" fill="#535353"/><rect x="328.5" y="54.0" width="6.3" height="6.3" fill="#444444"/><rect x="334.5" y="54.0" width="6.3" height="6.3" fill="#383838"/><rect x="340.5" y="54.0" width="6.3" height="6.3" fill="#343434"/><rect x="346.5" y="54.0" width="6.3" height="6.3" fill="#3a3a3a"/><rect x="352.5" y="54.0" width="6.3" height="6.3" fill="#4b4b4b"/><rect x="358.5" y="54.0" width="6.3" height="6.3" fill="#3e3e3e"/><rect x="364.5" y="54.0" width="6.3" height="6.3" fill="#323232"/><rect x="370.5" y="54.0" width="6.3" height="6.3" fill="#373737"/><rect x="376.5" y="54.0" width="6.3" height="6.3" fill="#3f3f3f"/><rect x="382.5" y="54.0" width="6.3" height="6.3" fill="#3e3e3e"/><rect x="388.5" y="54.0" width="6.3" height="6.3" fill="#494949"/><rect x="394.5" y="54.0" width="6.3" height="6.3" fill="#545454"/><rect x="400.5" y="54.0" width="6.3" height="6.3" fill="#575757"/><rect x="406.5" y="54.0" width="6.3" height="6.3" fill="#575757"/><rect x="412.5" y="54.0" width="6.3" height="6.3" fill="#5b5b5b"/><rect x="418.5" y="54.0" width="6.3" height="6.3" fill="#656565"/><rect x="424.5" y="54.0" width="6.3" height="6.3" fill="#3d3d3d"/><rect x="430.5" y="54.0" width="6.3" height="6.3" fill="#414141"/><rect x="436.5" y="54.0" width="6.3" height="6.3" fill="#222222"/><rect x="442.5" y="54.0" width="6.3" height="6.3" fill="#040404"/><rect x="280.5" y="60.0" width="6.3" height="6.3" fill="#0d0d0d"/><rect x="286.5" y="60.0" width="6.3" height="6.3" fill="#353535"/><rect x="292.5" y="60.0" width="6.3" height="6.3" fill="#525252"/><rect x="298.5" y="60.0" width="6.3" height="6.3" fill="#525252"/><rect x="304.5" y="60.0" width="6.3" height="6.3" fill="#444444"/><rect x="310.5" y="60.0" width="6.3" height="6.3" fill="#414141"/><rect x="316.5" y="60.0" width="6.3" height="6.3" fill="#414141"/><rect x="322.5" y="60.0" width="6.3" height="6.3" fill="#484848"/><rect x="328.5" y="60.0" width="6.3" height="6.3" fill="#383838"/><rect x="334.5" y="60.0" width="6.3" height="6.3" fill="#353535"/><rect x="340.5" y="60.0" width="6.3" height="6.3" fill="#565656"/><rect x="346.5" y="60.0" width="6.3" height="6.3" fill="#454545"/><rect x="352.5" y="60.0" width="6.3" height="6.3" fill="#434343"/><rect x="358.5" y="60.0" width="6.3" height="6.3" fill="#323232"/><rect x="364.5" y="60.0" width="6.3" height="6.3" fill="#2a2a2a"/><rect x="370.5" y="60.0" width="6.3" height="6.3" fill="#2f2f2f"/><rect x="376.5" y="60.0" width="6.3" height="6.3" fill="#2e2e2e"/><rect x="382.5" y="60.0" width="6.3" height="6.3" fill="#353535"/><rect x="388.5" y="60.0" width="6.3" height="6.3" fill="#323232"/><rect x="394.5" y="60.0" width="6.3" height="6.3" fill="#525252"/><rect x="400.5" y="60.0" width="6.3" height="6.3" fill="#585858"/><rect x="406.5" y="60.0" width="6.3" height="6.3" fill="#616161"/><rect x="412.5" y="60.0" width="6.3" height="6.3" fill="#585858"/><rect x="418.5" y="60.0" width="6.3" height="6.3" fill="#494949"/><rect x="424.5" y="60.0" width="6.3" height="6.3" fill="#5e5e5e"/><rect x="430.5" y="60.0" width="6.3" height="6.3" fill="#484848"/><rect x="436.5" y="60.0" width="6.3" height="6.3" fill="#202020"/><rect x="286.5" y="66.0" width="6.3" height="6.3" fill="#232323"/><rect x="292.5" y="66.0" width="6.3" height="6.3" fill="#333333"/><rect x="298.5" y="66.0" width="6.3" height="6.3" fill="#373737"/><rect x="304.5" y="66.0" width="6.3" height="6.3" fill="#3d3d3d"/><rect x="310.5" y="66.0" width="6.3" height="6.3" fill="#3d3d3d"/><rect x="316.5" y="66.0" width="6.3" height="6.3" fill="#535353"/><rect x="322.5" y="66.0" width="6.3" height="6.3" fill="#343434"/><rect x="328.5" y="66.0" width="6.3" height="6.3" fill="#313131"/><rect x="334.5" y="66.0" width="6.3" height="6.3" fill="#434343"/><rect x="340.5" y="66.0" width="6.3" height="6.3" fill="#414141"/><rect x="346.5" y="66.0" width="6.3" height="6.3" fill="#404040"/><rect x="352.5" y="66.0" width="6.3" height="6.3" fill="#363636"/><rect x="358.5" y="66.0" width="6.3" height="6.3" fill="#252525"/><rect x="364.5" y="66.0" width="6.3" height="6.3" fill="#303030"/><rect x="370.5" y="66.0" width="6.3" height="6.3" fill="#272727"/><rect x="376.5" y="66.0" width="6.3" height="6.3" fill="#363636"/><rect x="382.5" y="66.0" width="6.3" height="6.3" fill="#4c4c4c"/><rect x="388.5" y="66.0" width="6.3" height="6.3" fill="#3c3c3c"/><rect x="394.5" y="66.0" width="6.3" height="6.3" fill="#474747"/><rect x="400.5" y="66.0" width="6.3" height="6.3" fill="#575757"/><rect x="406.5" y="66.0" width="6.3" height="6.3" fill="#414141"/><rect x="412.5" y="66.0" width="6.3" height="6.3" fill="#565656"/><rect x="418.5" y="66.0" width="6.3" height="6.3" fill="#464646"/><rect x="424.5" y="66.0" width="6.3" height="6.3" fill="#3c3c3c"/><rect x="430.5" y="66.0" width="6.3" height="6.3" fill="#353535"/><rect x="436.5" y="66.0" width="6.3" height="6.3" fill="#131313"/><rect x="286.5" y="72.0" width="6.3" height="6.3" fill="#151515"/><rect x="292.5" y="72.0" width="6.3" height="6.3" fill="#414141"/><rect x="298.5" y="72.0" width="6.3" height="6.3" fill="#2f2f2f"/><rect x="304.5" y="72.0" width="6.3" height="6.3" fill="#3f3f3f"/><rect x="310.5" y="72.0" width="6.3" height="6.3" fill="#434343"/><rect x="316.5" y="72.0" width="6.3" height="6.3" fill="#3f3f3f"/><rect x="322.5" y="72.0" width="6.3" height="6.3" fill="#2f2f2f"/><rect x="328.5" y="72.0" width="6.3" height="6.3" fill="#404040"/><rect x="334.5" y="72.0" width="6.3" height="6.3" fill="#3b3b3b"/><rect x="340.5" y="72.0" width="6.3" height="6.3" fill="#3e3e3e"/><rect x="346.5" y="72.0" width="6.3" height="6.3" fill="#444444"/><rect x="352.5" y="72.0" width="6.3" height="6.3" fill="#2f2f2f"/><rect x="358.5" y="72.0" width="6.3" height="6.3" fill="#2c2c2c"/><rect x="364.5" y="72.0" width="6.3" height="6.3" fill="#1e1e1e"/><rect x="370.5" y="72.0" width="6.3" height="6.3" fill="#444444"/><rect x="376.5" y="72.0" width="6.3" height="6.3" fill="#2d2d2d"/><rect x="382.5" y="72.0" width="6.3" height="6.3" fill="#464646"/><rect x="388.5" y="72.0" width="6.3" height="6.3" fill="#3f3f3f"/><rect x="394.5" y="72.0" width="6.3" height="6.3" fill="#4d4d4d"/><rect x="400.5" y="72.0" width="6.3" height="6.3" fill="#474747"/><rect x="406.5" y="72.0" width="6.3" height="6.3" fill="#4c4c4c"/><rect x="412.5" y="72.0" width="6.3" height="6.3" fill="#444444"/><rect x="418.5" y="72.0" width="6.3" height="6.3" fill="#474747"/><rect x="424.5" y="72.0" width="6.3" height="6.3" fill="#333333"/><rect x="430.5" y="72.0" width="6.3" height="6.3" fill="#3d3d3d"/><rect x="436.5" y="72.0" width="6.3" height="6.3" fill="#0d0d0d"/><rect x="286.5" y="78.0" width="6.3" height="6.3" fill="#0d0d0d"/><rect x="292.5" y="78.0" width="6.3" height="6.3" fill="#424242"/><rect x="298.5" y="78.0" width="6.3" height="6.3" fill="#3c3c3c"/><rect x="304.5" y="78.0" width="6.3" height="6.3" fill="#333333"/><rect x="310.5" y="78.0" width="6.3" height="6.3" fill="#2a2a2a"/><rect x="316.5" y="78.0" width="6.3" height="6.3" fill="#454545"/><rect x="322.5" y="78.0" width="6.3" height="6.3" fill="#373737"/><rect x="328.5" y="78.0" width="6.3" height="6.3" fill="#2d2d2d"/><rect x="334.5" y="78.0" width="6.3" height="6.3" fill="#1c1c1c"/><rect x="340.5" y="78.0" width="6.3" height="6.3" fill="#3f3f3f"/><rect x="346.5" y="78.0" width="6.3" height="6.3" fill="#3c3c3c"/><rect x="352.5" y="78.0" width="6.3" height="6.3" fill="#393939"/><rect x="358.5" y="78.0" width="6.3" height="6.3" fill="#282828"/><rect x="364.5" y="78.0" width="6.3" height="6.3" fill="#202020"/><rect x="370.5" y="78.0" width="6.3" height="6.3" fill="#3f3f3f"/><rect x="376.5" y="78.0" width="6.3" height="6.3" fill="#313131"/><rect x="382.5" y="78.0" width="6.3" height="6.3" fill="#3d3d3d"/><rect x="388.5" y="78.0" width="6.3" height="6.3" fill="#1d1d1d"/><rect x="394.5" y="78.0" width="6.3" height="6.3" fill="#383838"/><rect x="400.5" y="78.0" width="6.3" height="6.3" fill="#454545"/><rect x="406.5" y="78.0" width="6.3" height="6.3" fill="#3f3f3f"/><rect x="412.5" y="78.0" width="6.3" height="6.3" fill="#525252"/><rect x="418.5" y="78.0" width="6.3" height="6.3" fill="#464646"/><rect x="424.5" y="78.0" width="6.3" height="6.3" fill="#444444"/><rect x="430.5" y="78.0" width="6.3" height="6.3" fill="#343434"/><rect x="436.5" y="78.0" width="6.3" height="6.3" fill="#111111"/><rect x="502.5" y="78.0" width="6.3" height="6.3" fill="#040404"/><rect x="262.5" y="84.0" width="6.3" height="6.3" fill="#050505"/><rect x="286.5" y="84.0" width="6.3" height="6.3" fill="#0a0a0a"/><rect x="292.5" y="84.0" width="6.3" height="6.3" fill="#1e1e1e"/><rect x="298.5" y="84.0" width="6.3" height="6.3" fill="#353535"/><rect x="304.5" y="84.0" width="6.3" height="6.3" fill="#2e2e2e"/><rect x="310.5" y="84.0" width="6.3" height="6.3" fill="#3c3c3c"/><rect x="316.5" y="84.0" width="6.3" height="6.3" fill="#242424"/><rect x="322.5" y="84.0" width="6.3" height="6.3" fill="#363636"/><rect x="328.5" y="84.0" width="6.3" height="6.3" fill="#414141"/><rect x="334.5" y="84.0" width="6.3" height="6.3" fill="#353535"/><rect x="340.5" y="84.0" width="6.3" height="6.3" fill="#474747"/><rect x="346.5" y="84.0" width="6.3" height="6.3" fill="#474747"/><rect x="352.5" y="84.0" width="6.3" height="6.3" fill="#252525"/><rect x="358.5" y="84.0" width="6.3" height="6.3" fill="#2e2e2e"/><rect x="364.5" y="84.0" width="6.3" height="6.3" fill="#2c2c2c"/><rect x="370.5" y="84.0" width="6.3" height="6.3" fill="#424242"/><rect x="376.5" y="84.0" width="6.3" height="6.3" fill="#2d2d2d"/><rect x="382.5" y="84.0" width="6.3" height="6.3" fill="#1d1d1d"/><rect x="388.5" y="84.0" width="6.3" height="6.3" fill="#2e2e2e"/><rect x="394.5" y="84.0" width="6.3" height="6.3" fill="#333333"/><rect x="400.5" y="84.0" width="6.3" height="6.3" fill="#373737"/><rect x="406.5" y="84.0" width="6.3" height="6.3" fill="#383838"/><rect x="412.5" y="84.0" width="6.3" height="6.3" fill="#3a3a3a"/><rect x="418.5" y="84.0" width="6.3" height="6.3" fill="#2f2f2f"/><rect x="424.5" y="84.0" width="6.3" height="6.3" fill="#353535"/><rect x="430.5" y="84.0" width="6.3" height="6.3" fill="#252525"/><rect x="436.5" y="84.0" width="6.3" height="6.3" fill="#0d0d0d"/><rect x="286.5" y="90.0" width="6.3" height="6.3" fill="#060606"/><rect x="292.5" y="90.0" width="6.3" height="6.3" fill="#212121"/><rect x="298.5" y="90.0" width="6.3" height="6.3" fill="#272727"/><rect x="304.5" y="90.0" width="6.3" height="6.3" fill="#252525"/><rect x="310.5" y="90.0" width="6.3" height="6.3" fill="#353535"/><rect x="316.5" y="90.0" width="6.3" height="6.3" fill="#494949"/><rect x="322.5" y="90.0" width="6.3" height="6.3" fill="#2c2c2c"/><rect x="328.5" y="90.0" width="6.3" height="6.3" fill="#2b2b2b"/><rect x="334.5" y="90.0" width="6.3" height="6.3" fill="#444444"/><rect x="340.5" y="90.0" width="6.3" height="6.3" fill="#292929"/><rect x="346.5" y="90.0" width="6.3" height="6.3" fill="#282828"/><rect x="352.5" y="90.0" width="6.3" height="6.3" fill="#444444"/><rect x="358.5" y="90.0" width="6.3" height="6.3" fill="#373737"/><rect x="364.5" y="90.0" width="6.3" height="6.3" fill="#383838"/><rect x="370.5" y="90.0" width="6.3" height="6.3" fill="#191919"/><rect x="376.5" y="90.0" width="6.3" height="6.3" fill="#3e3e3e"/><rect x="382.5" y="90.0" width="6.3" height="6.3" fill="#2e2e2e"/><rect x="388.5" y="90.0" width="6.3" height="6.3" fill="#3c3c3c"/><rect x="394.5" y="90.0" width="6.3" height="6.3" fill="#393939"/><rect x="400.5" y="90.0" width="6.3" height="6.3" fill="#484848"/><rect x="406.5" y="90.0" width="6.3" height="6.3" fill="#3e3e3e"/><rect x="412.5" y="90.0" width="6.3" height="6.3" fill="#484848"/><rect x="418.5" y="90.0" width="6.3" height="6.3" fill="#2d2d2d"/><rect x="424.5" y="90.0" width="6.3" height="6.3" fill="#3e3e3e"/><rect x="430.5" y="90.0" width="6.3" height="6.3" fill="#2b2b2b"/><rect x="436.5" y="90.0" width="6.3" height="6.3" fill="#0a0a0a"/><rect x="232.5" y="96.0" width="6.3" height="6.3" fill="#040404"/><rect x="292.5" y="96.0" width="6.3" height="6.3" fill="#1d1d1d"/><rect x="298.5" y="96.0" width="6.3" height="6.3" fill="#323232"/><rect x="304.5" y="96.0" width="6.3" height="6.3" fill="#2d2d2d"/><rect x="310.5" y="96.0" width="6.3" height="6.3" fill="#252525"/><rect x="316.5" y="96.0" width="6.3" height="6.3" fill="#363636"/><rect x="322.5" y="96.0" width="6.3" height="6.3" fill="#3e3e3e"/><rect x="328.5" y="96.0" width="6.3" height="6.3" fill="#1f1f1f"/><rect x="334.5" y="96.0" width="6.3" height="6.3" fill="#353535"/><rect x="340.5" y="96.0" width="6.3" height="6.3" fill="#1b1b1b"/><rect x="346.5" y="96.0" width="6.3" height="6.3" fill="#303030"/><rect x="352.5" y="96.0" width="6.3" height="6.3" fill="#111111"/><rect x="358.5" y="96.0" width="6.3" height="6.3" fill="#2c2c2c"/><rect x="364.5" y="96.0" width="6.3" height="6.3" fill="#353535"/><rect x="370.5" y="96.0" width="6.3" height="6.3" fill="#1f1f1f"/><rect x="376.5" y="96.0" width="6.3" height="6.3" fill="#202020"/><rect x="382.5" y="96.0" width="6.3" height="6.3" fill="#303030"/><rect x="388.5" y="96.0" width="6.3" height="6.3" fill="#2c2c2c"/><rect x="394.5" y="96.0" width="6.3" height="6.3" fill="#333333"/><rect x="400.5" y="96.0" width="6.3" height="6.3" fill="#3f3f3f"/><rect x="406.5" y="96.0" width="6.3" height="6.3" fill="#242424"/><rect x="412.5" y="96.0" width="6.3" height="6.3" fill="#333333"/><rect x="418.5" y="96.0" width="6.3" height="6.3" fill="#1b1b1b"/><rect x="424.5" y="96.0" width="6.3" height="6.3" fill="#0f0f0f"/><rect x="430.5" y="96.0" width="6.3" height="6.3" fill="#1a1a1a"/><rect x="292.5" y="102.0" width="6.3" height="6.3" fill="#171717"/><rect x="298.5" y="102.0" width="6.3" height="6.3" fill="#2d2d2d"/><rect x="304.5" y="102.0" width="6.3" height="6.3" fill="#282828"/><rect x="310.5" y="102.0" width="6.3" height="6.3" fill="#303030"/><rect x="316.5" y="102.0" width="6.3" height="6.3" fill="#181818"/><rect x="322.5" y="102.0" width="6.3" height="6.3" fill="#3a3a3a"/><rect x="328.5" y="102.0" width="6.3" height="6.3" fill="#2b2b2b"/><rect x="334.5" y="102.0" width="6.3" height="6.3" fill="#262626"/><rect x="340.5" y="102.0" width="6.3" height="6.3" fill="#242424"/><rect x="346.5" y="102.0" width="6.3" height="6.3" fill="#2e2e2e"/><rect x="352.5" y="102.0" width="6.3" height="6.3" fill="#232323"/><rect x="358.5" y="102.0" width="6.3" height="6.3" fill="#212121"/><rect x="364.5" y="102.0" width="6.3" height="6.3" fill="#222222"/><rect x="370.5" y="102.0" width="6.3" height="6.3" fill="#3f3f3f"/><rect x="376.5" y="102.0" width="6.3" height="6.3" fill="#2b2b2b"/><rect x="382.5" y="102.0" width="6.3" height="6.3" fill="#323232"/><rect x="388.5" y="102.0" width="6.3" height="6.3" fill="#303030"/><rect x="394.5" y="102.0" width="6.3" height="6.3" fill="#262626"/><rect x="400.5" y="102.0" width="6.3" height="6.3" fill="#363636"/><rect x="406.5" y="102.0" width="6.3" height="6.3" fill="#2c2c2c"/><rect x="412.5" y="102.0" width="6.3" height="6.3" fill="#262626"/><rect x="418.5" y="102.0" width="6.3" height="6.3" fill="#222222"/><rect x="424.5" y="102.0" width="6.3" height="6.3" fill="#292929"/><rect x="430.5" y="102.0" width="6.3" height="6.3" fill="#1b1b1b"/><rect x="436.5" y="102.0" width="6.3" height="6.3" fill="#0d0d0d"/><rect x="292.5" y="108.0" width="6.3" height="6.3" fill="#121212"/><rect x="298.5" y="108.0" width="6.3" height="6.3" fill="#2f2f2f"/><rect x="304.5" y="108.0" width="6.3" height="6.3" fill="#202020"/><rect x="310.5" y="108.0" width="6.3" height="6.3" fill="#232323"/><rect x="316.5" y="108.0" width="6.3" height="6.3" fill="#323232"/><rect x="322.5" y="108.0" width="6.3" height="6.3" fill="#323232"/><rect x="328.5" y="108.0" width="6.3" height="6.3" fill="#242424"/><rect x="334.5" y="108.0" width="6.3" height="6.3" fill="#272727"/><rect x="340.5" y="108.0" width="6.3" height="6.3" fill="#343434"/><rect x="346.5" y="108.0" width="6.3" height="6.3" fill="#282828"/><rect x="352.5" y="108.0" width="6.3" height="6.3" fill="#222222"/><rect x="358.5" y="108.0" width="6.3" height="6.3" fill="#2d2d2d"/><rect x="364.5" y="108.0" width="6.3" height="6.3" fill="#242424"/><rect x="370.5" y="108.0" width="6.3" height="6.3" fill="#303030"/><rect x="376.5" y="108.0" width="6.3" height="6.3" fill="#2c2c2c"/><rect x="382.5" y="108.0" width="6.3" height="6.3" fill="#272727"/><rect x="388.5" y="108.0" width="6.3" height="6.3" fill="#212121"/><rect x="394.5" y="108.0" width="6.3" height="6.3" fill="#353535"/><rect x="400.5" y="108.0" width="6.3" height="6.3" fill="#212121"/><rect x="406.5" y="108.0" width="6.3" height="6.3" fill="#2c2c2c"/><rect x="412.5" y="108.0" width="6.3" height="6.3" fill="#272727"/><rect x="418.5" y="108.0" width="6.3" height="6.3" fill="#2b2b2b"/><rect x="424.5" y="108.0" width="6.3" height="6.3" fill="#262626"/><rect x="430.5" y="108.0" width="6.3" height="6.3" fill="#232323"/><rect x="436.5" y="108.0" width="6.3" height="6.3" fill="#060606"/><rect x="292.5" y="114.0" width="6.3" height="6.3" fill="#070707"/><rect x="298.5" y="114.0" width="6.3" height="6.3" fill="#202020"/><rect x="304.5" y="114.0" width="6.3" height="6.3" fill="#252525"/><rect x="310.5" y="114.0" width="6.3" height="6.3" fill="#2c2c2c"/><rect x="316.5" y="114.0" width="6.3" height="6.3" fill="#3a3a3a"/><rect x="322.5" y="114.0" width="6.3" height="6.3" fill="#1f1f1f"/><rect x="328.5" y="114.0" width="6.3" height="6.3" fill="#202020"/><rect x="334.5" y="114.0" width="6.3" height="6.3" fill="#1e1e1e"/><rect x="340.5" y="114.0" width="6.3" height="6.3" fill="#333333"/><rect x="346.5" y="114.0" width="6.3" height="6.3" fill="#404040"/><rect x="352.5" y="114.0" width="6.3" height="6.3" fill="#1f1f1f"/><rect x="358.5" y="114.0" width="6.3" height="6.3" fill="#414141"/><rect x="364.5" y="114.0" width="6.3" height="6.3" fill="#191919"/><rect x="370.5" y="114.0" width="6.3" height="6.3" fill="#292929"/><rect x="376.5" y="114.0" width="6.3" height="6.3" fill="#292929"/><rect x="382.5" y="114.0" width="6.3" height="6.3" fill="#2b2b2b"/><rect x="388.5" y="114.0" width="6.3" height="6.3" fill="#212121"/><rect x="394.5" y="114.0" width="6.3" height="6.3" fill="#1c1c1c"/><rect x="400.5" y="114.0" width="6.3" height="6.3" fill="#262626"/><rect x="406.5" y="114.0" width="6.3" height="6.3" fill="#343434"/><rect x="412.5" y="114.0" width="6.3" height="6.3" fill="#262626"/><rect x="418.5" y="114.0" width="6.3" height="6.3" fill="#2d2d2d"/><rect x="424.5" y="114.0" width="6.3" height="6.3" fill="#2d2d2d"/><rect x="430.5" y="114.0" width="6.3" height="6.3" fill="#242424"/><rect x="292.5" y="120.0" width="6.3" height="6.3" fill="#090909"/><rect x="298.5" y="120.0" width="6.3" height="6.3" fill="#1f1f1f"/><rect x="304.5" y="120.0" width="6.3" height="6.3" fill="#2c2c2c"/><rect x="310.5" y="120.0" width="6.3" height="6.3" fill="#202020"/><rect x="316.5" y="120.0" width="6.3" height="6.3" fill="#1d1d1d"/><rect x="322.5" y="120.0" width="6.3" height="6.3" fill="#161616"/><rect x="328.5" y="120.0" width="6.3" height="6.3" fill="#282828"/><rect x="334.5" y="120.0" width="6.3" height="6.3" fill="#252525"/><rect x="340.5" y="120.0" width="6.3" height="6.3" fill="#272727"/><rect x="346.5" y="120.0" width="6.3" height="6.3" fill="#0d0d0d"/><rect x="352.5" y="120.0" width="6.3" height="6.3" fill="#212121"/><rect x="358.5" y="120.0" width="6.3" height="6.3" fill="#1a1a1a"/><rect x="364.5" y="120.0" width="6.3" height="6.3" fill="#303030"/><rect x="370.5" y="120.0" width="6.3" height="6.3" fill="#2d2d2d"/><rect x="376.5" y="120.0" width="6.3" height="6.3" fill="#2d2d2d"/><rect x="382.5" y="120.0" width="6.3" height="6.3" fill="#2b2b2b"/><rect x="388.5" y="120.0" width="6.3" height="6.3" fill="#323232"/><rect x="394.5" y="120.0" width="6.3" height="6.3" fill="#282828"/><rect x="400.5" y="120.0" width="6.3" height="6.3" fill="#1d1d1d"/><rect x="406.5" y="120.0" width="6.3" height="6.3" fill="#272727"/><rect x="412.5" y="120.0" width="6.3" height="6.3" fill="#262626"/><rect x="418.5" y="120.0" width="6.3" height="6.3" fill="#292929"/><rect x="424.5" y="120.0" width="6.3" height="6.3" fill="#2b2b2b"/><rect x="430.5" y="120.0" width="6.3" height="6.3" fill="#181818"/><rect x="436.5" y="120.0" width="6.3" height="6.3" fill="#050505"/><rect x="292.5" y="126.0" width="6.3" height="6.3" fill="#050505"/><rect x="304.5" y="126.0" width="6.3" height="6.3" fill="#1b1b1b"/><rect x="310.5" y="126.0" width="6.3" height="6.3" fill="#3a3a3a"/><rect x="316.5" y="126.0" width="6.3" height="6.3" fill="#343434"/><rect x="322.5" y="126.0" width="6.3" height="6.3" fill="#2e2e2e"/><rect x="328.5" y="126.0" width="6.3" height="6.3" fill="#212121"/><rect x="334.5" y="126.0" width="6.3" height="6.3" fill="#2e2e2e"/><rect x="340.5" y="126.0" width="6.3" height="6.3" fill="#292929"/><rect x="346.5" y="126.0" width="6.3" height="6.3" fill="#232323"/><rect x="352.5" y="126.0" width="6.3" height="6.3" fill="#232323"/><rect x="358.5" y="126.0" width="6.3" height="6.3" fill="#232323"/><rect x="364.5" y="126.0" width="6.3" height="6.3" fill="#101010"/><rect x="370.5" y="126.0" width="6.3" height="6.3" fill="#2e2e2e"/><rect x="376.5" y="126.0" width="6.3" height="6.3" fill="#2d2d2d"/><rect x="382.5" y="126.0" width="6.3" height="6.3" fill="#262626"/><rect x="388.5" y="126.0" width="6.3" height="6.3" fill="#272727"/><rect x="394.5" y="126.0" width="6.3" height="6.3" fill="#1a1a1a"/><rect x="400.5" y="126.0" width="6.3" height="6.3" fill="#222222"/><rect x="406.5" y="126.0" width="6.3" height="6.3" fill="#1c1c1c"/><rect x="412.5" y="126.0" width="6.3" height="6.3" fill="#181818"/><rect x="418.5" y="126.0" width="6.3" height="6.3" fill="#262626"/><rect x="424.5" y="126.0" width="6.3" height="6.3" fill="#3b3b3b"/><rect x="430.5" y="126.0" width="6.3" height="6.3" fill="#232323"/><rect x="436.5" y="126.0" width="6.3" height="6.3" fill="#040404"/></g><polyline points="272.2,0.0 274.3,16.0 284.3,25.1 302.3,29.1 320.4,32.1 330.4,30.1 342.5,22.1 348.5,12.0 350.5,0.0" fill="none" stroke="#1c1c1c" stroke-width="1"/><polyline points="278.3,0.0 294.3,10.0 310.4,19.1 322.4,17.1 326.4,8.0 328.4,0.0" fill="none" stroke="#1c1c1c" stroke-width="1"/><polyline points="254.2,0.0 258.2,18.1 256.2,36.1 254.2,50.2 270.2,50.2 280.3,60.2 294.3,68.2 302.3,66.2 298.3,58.2 310.4,58.2 314.4,66.2 330.4,62.2 348.5,56.2 356.5,48.1 366.5,58.2 370.5,70.2 382.6,88.3 392.6,98.3 402.6,100.3 404.6,90.3 398.6,80.2 404.6,76.2 418.7,68.2 424.7,60.2 420.7,40.1 422.7,28.1 426.7,12.0 424.7,0.0" fill="none" stroke="#1c1c1c" stroke-width="1"/><polyline points="440.8,0.0 440.8,30.1 436.7,56.2 438.7,80.2 436.7,114.9" fill="none" stroke="#1c1c1c" stroke-width="1"/><polyline points="450.8,0.0 446.8,18.1 454.8,32.1 446.8,46.1 438.7,70.2" fill="none" stroke="#1c1c1c" stroke-width="1"/><polyline points="388.6,0.0 388.6,30.1 392.6,46.1 398.6,64.2 408.7,66.2 414.7,46.1 418.7,30.1 424.7,24.1 428.7,0.0" fill="none" stroke="#1c1c1c" stroke-width="1"/><polyline points="352.5,14.0 360.5,30.1 370.5,34.1 378.6,40.1 382.6,60.2 390.6,76.2" fill="none" stroke="#1c1c1c" stroke-width="1"/><polyline points="284.3,86.3 294.3,76.2 310.4,78.2 330.4,70.2 346.5,60.2 356.5,48.1" fill="none" stroke="#1c1c1c" stroke-width="1"/><polyline points="314.4,114.9 320.4,104.3 334.4,100.3 350.5,94.3 356.5,88.3 364.5,96.3 376.6,100.3 388.6,102.3 402.6,104.3 406.6,114.9" fill="none" stroke="#1c1c1c" stroke-width="1"/><polygon points="405.6,-2.0 400.6,8.0 398.6,18.0 406.7,24.0 416.7,24.0 421.7,16.0 422.7,6.0 421.7,-2.0" fill="url(#hatch)" stroke="#000" stroke-width="4.5"/><polygon points="405.6,-2.0 400.6,8.0 398.6,18.0 406.7,24.0 416.7,24.0 421.7,16.0 422.7,6.0 421.7,-2.0" fill="none" stroke="#22b030" stroke-width="2.5"/></g><polyline points="66.5,114.0 67.0,108.0 69.0,107.0 69.0,101.0 70.0,97.0 71.0,95.0 75.0,92.0 73.0,90.0 72.0,87.0 74.0,83.0 72.0,80.0 76.0,75.0 76.0,71.0 79.0,69.0 80.0,66.0 79.0,62.0 80.0,56.0 85.0,52.0 90.0,48.0 92.0,45.0 88.0,42.0 93.0,39.0 99.0,36.0 110.0,33.0 107.0,31.0 113.0,28.0 120.0,25.0 123.0,23.0 129.0,21.0 126.0,19.0 140.0,14.0 131.0,12.0 135.0,8.0 141.0,6.0 144.0,4.0 137.0,2.0 141.0,0.0" fill="none" stroke="#000" stroke-width="2.2" stroke-linejoin="round"/><polyline points="191.0,215.0 254.2,215.0 257.4,213.5 265.0,210.3 269.3,208.1 273.6,198.4 279.0,189.8 282.2,179.0 285.5,171.5 288.7,149.9 290.9,153.1 294.1,148.8 297.3,135.9 300.6,133.3 302.7,135.9 308.1,127.3 312.0,133.7 315.7,124.0 318.9,135.9 323.2,131.6 326.4,133.7 331.8,144.5 336.1,159.6 339.4,159.6 343.7,171.5 346.9,172.6 351.2,177.9 357.7,189.8 361.0,190.9 367.4,190.9 370.7,196.3 372.8,193.7 377.1,194.8 381.4,194.8 383.6,198.4 386.8,190.9 390.1,188.7 394.4,183.3 398.7,177.9 404.1,176.9 407.3,168.2 410.6,167.2 414.9,172.6 420.3,185.5 424.6,185.5 431.1,195.2 439.7,209.2 448.3,213.1 459.1,213.5 524.5,214.6" fill="none" stroke="#000" stroke-width="2" stroke-linejoin="round"/><line x1="59" y1="0" x2="59" y2="223" stroke="#000" stroke-width="1.5"/><line x1="58" y1="114.5" x2="525" y2="114.5" stroke="#000" stroke-width="2"/><line x1="191" y1="114" x2="191" y2="223" stroke="#000" stroke-width="2.5"/><line x1="58" y1="222" x2="525" y2="222" stroke="#000" stroke-width="2"/><line x1="524.5" y1="115" x2="524.5" y2="222" stroke="#000" stroke-width="1"/><text x="125" y="254" text-anchor="middle" font-size="13" >Occur. [10<tspan font-size="9" dy="-6">6</tspan><tspan dy="6"> Events]</tspan></text><text x="357" y="254" text-anchor="middle" font-size="13" >tau_Av [ns]</text><clipPath id="occl"><rect x="0" y="114" width="60" height="108"/></clipPath><g clip-path="url(#occl)"><text transform="translate(22,171) rotate(-90)" text-anchor="middle" font-size="12.5">Occur. [10 <tspan font-size="9" dy="-1">6</tspan><tspan dy="1"> Events]</tspan></text></g><text transform="translate(22,21) rotate(-90)" text-anchor="start" font-size="12.5">Delta</text></svg><div style="left:832px;top:0px;width:151px;height:268px;background:#e0e8e0"></div><div style="left:836px;top:-2px;width:140px;height:34px;border:2px solid #7c7c7c"></div><div class="t" style="left:841px;top:8px;">Smpl. Pts.:</div><div style="left:901px;top:5px;width:53px;height:21px;background:#fff;border:1px solid #7a7a7a"></div><div class="t" style="left:901px;top:9px;width:53px;text-align:center;font-size:11px">100</div><div style="left:955px;top:5px;width:17px;height:10px;background:#e0e8e0;border:1px solid #7a7a7a"></div><div style="left:955px;top:16px;width:17px;height:10px;background:#e0e8e0;border:1px solid #7a7a7a"></div><svg style="left:960px;top:8px" width="8" height="5"><polygon points="0,5 8,5 4.0,0" fill="#000"/></svg><svg style="left:960px;top:19px" width="8" height="5"><polygon points="0,0 8,0 4.0,5" fill="#000"/></svg><div class="btn" style="left:837px;top:145px;width:138px;height:20px;line-height:19px;">Recalculate Histogram</div><div class="btn" style="left:837px;top:172px;width:138px;height:20px;line-height:19px;">Optimize View</div><div class="btn" style="left:837px;top:199px;width:138px;height:20px;line-height:19px;">Autoscale Histogram</div><div class="btn" style="left:837px;top:226px;width:138px;height:20px;line-height:19px;">Show All Events</div><svg style="left:983px;top:0px" width="422" height="268"><rect width="422" height="268" fill="#000"/><defs><filter id="cb" x="-30%" y="-30%" width="160%" height="160%"><feGaussianBlur stdDeviation="6"/></filter><filter id="cb3" x="-30%" y="-30%" width="160%" height="160%"><feGaussianBlur stdDeviation="9"/></filter><filter id="tex" x="0" y="0" width="100%" height="100%" filterUnits="userSpaceOnUse"><feTurbulence type="fractalNoise" baseFrequency="0.22" numOctaves="2" seed="4" result="n"/><feColorMatrix in="n" type="matrix" values="0 0 0 0 0  0 0 0 0 0  0 0 0 0 0  1.3 0 0 0 -0.52" result="a"/><feGaussianBlur in="SourceGraphic" stdDeviation="2" result="m"/><feComposite in="a" in2="m" operator="in" result="c"/><feGaussianBlur in="c" stdDeviation="1.1"/></filter><filter id="tex2" x="0" y="0" width="100%" height="100%" filterUnits="userSpaceOnUse"><feTurbulence type="fractalNoise" baseFrequency="0.2" numOctaves="2" seed="9" result="n"/><feColorMatrix in="n" type="matrix" values="0 0 0 0 1  0 0 0 0 1  0 0 0 0 1  1.6 0 0 0 -0.75" result="a"/><feGaussianBlur in="SourceGraphic" stdDeviation="6" result="m"/><feComposite in="a" in2="m" operator="in" result="c"/><feGaussianBlur in="c" stdDeviation="1.1"/></filter></defs><polygon filter="url(#cb)" points="40.9,67.7 70.2,51.2 117.7,25.6 143.3,20.1 168.9,36.6 216.5,58.5 253.0,78.6 307.9,106.1 362.8,117.0 417.6,122.5 417.6,135.3 362.8,139.0 307.9,146.3 253.0,150.0 179.9,150.0 117.7,135.3 95.8,117.0 70.2,91.4" fill="#262626"/><polygon filter="url(#cb3)" points="66.5,80.5 106.7,65.8 157.9,69.5 168.9,98.8 150.6,131.7 114.0,131.7 92.1,109.7" fill="#858585"/><polygon filter="url(#cb3)" points="150.6,51.2 216.5,65.8 253.0,87.8 260.4,109.7 231.1,84.1 172.6,76.8" fill="#3c3c3c"/><polygon filter="url(#cb3)" points="253.0,91.4 307.9,109.7 362.8,120.7 384.7,126.2 362.8,137.2 307.9,142.6 253.0,146.3 245.7,117.0" fill="#747474"/><ellipse filter="url(#cb3)" cx="201.82809070958297" cy="109.72933430870519" rx="42" ry="25" fill="#383838"/><g filter="url(#tex)"><polygon points="40.9,67.7 70.2,51.2 117.7,25.6 143.3,20.1 168.9,36.6 216.5,58.5 253.0,78.6 307.9,106.1 362.8,117.0 417.6,122.5 417.6,135.3 362.8,139.0 307.9,146.3 253.0,150.0 179.9,150.0 117.7,135.3 95.8,117.0 70.2,91.4" fill="#fff"/></g><g filter="url(#tex2)" opacity="0.25"><polygon points="66.5,80.5 106.7,65.8 157.9,69.5 168.9,98.8 150.6,131.7 114.0,131.7 92.1,109.7" fill="#fff"/><polygon points="253.0,91.4 307.9,109.7 362.8,120.7 384.7,126.2 362.8,137.2 307.9,142.6 253.0,146.3 245.7,117.0" fill="#fff"/></g><rect x="165" y="87" width="1" height="2" fill="#1a1aa8"/><rect x="246" y="98" width="1" height="2" fill="#1a1aa8"/><rect x="233" y="112" width="1" height="2" fill="#1a1aa8"/><rect x="226" y="121" width="2" height="2" fill="#1a1aa8"/><rect x="162" y="102" width="2" height="2" fill="#1a1aa8"/><rect x="205" y="122" width="1" height="2" fill="#1a1aa8"/><rect x="202" y="97" width="1" height="2" fill="#1a1aa8"/><rect x="227" y="127" width="2" height="2" fill="#1a1aa8"/><rect x="205" y="120" width="1" height="2" fill="#1a1aa8"/><rect x="217" y="97" width="1" height="2" fill="#1a1aa8"/><rect x="156" y="101" width="2" height="2" fill="#1a1aa8"/><rect x="243" y="98" width="1" height="2" fill="#1a1aa8"/><rect x="220" y="99" width="2" height="2" fill="#1a1aa8"/><rect x="208" y="117" width="2" height="2" fill="#1a1aa8"/><rect x="187" y="131" width="2" height="2" fill="#1a1aa8"/><rect x="188" y="93" width="2" height="2" fill="#1a1aa8"/><rect x="214" y="89" width="2" height="2" fill="#1a1aa8"/><rect x="153" y="111" width="2" height="2" fill="#1a1aa8"/><rect x="206" y="107" width="1" height="2" fill="#1a1aa8"/><rect x="203" y="105" width="1" height="2" fill="#1a1aa8"/><rect x="174" y="126" width="2" height="2" fill="#1a1aa8"/><rect x="218" y="111" width="1" height="2" fill="#1a1aa8"/><rect x="217" y="137" width="1" height="2" fill="#1a1aa8"/><rect x="226" y="102" width="2" height="2" fill="#1a1aa8"/><rect x="149" y="103" width="2" height="2" fill="#1a1aa8"/><rect x="205" y="104" width="1" height="2" fill="#1a1aa8"/><rect x="223" y="117" width="1" height="2" fill="#1a1aa8"/><rect x="224" y="100" width="1" height="2" fill="#1a1aa8"/><rect x="175" y="104" width="2" height="2" fill="#1a1aa8"/><rect x="205" y="115" width="2" height="2" fill="#1a1aa8"/><rect x="205" y="113" width="1" height="2" fill="#1a1aa8"/><rect x="170" y="104" width="2" height="2" fill="#1a1aa8"/><rect x="170" y="113" width="2" height="2" fill="#1a1aa8"/><rect x="207" y="106" width="2" height="2" fill="#1a1aa8"/><rect x="208" y="100" width="1" height="2" fill="#1a1aa8"/><rect x="240" y="100" width="1" height="2" fill="#1a1aa8"/><rect x="225" y="120" width="2" height="2" fill="#1a1aa8"/><rect x="214" y="96" width="2" height="2" fill="#1a1aa8"/><rect x="233" y="105" width="2" height="2" fill="#1a1aa8"/><rect x="196" y="88" width="2" height="2" fill="#1a1aa8"/><rect x="186" y="114" width="2" height="2" fill="#1a1aa8"/><rect x="175" y="93" width="2" height="2" fill="#1a1aa8"/><rect x="220" y="116" width="1" height="2" fill="#1a1aa8"/><rect x="219" y="95" width="1" height="2" fill="#1a1aa8"/><rect x="207" y="81" width="1" height="2" fill="#1a1aa8"/><rect x="202" y="91" width="1" height="2" fill="#1a1aa8"/><rect x="193" y="128" width="1" height="2" fill="#1a1aa8"/><rect x="191" y="94" width="1" height="2" fill="#1a1aa8"/><rect x="177" y="89" width="2" height="2" fill="#1a1aa8"/><rect x="178" y="104" width="1" height="2" fill="#1a1aa8"/><rect x="175" y="129" width="1" height="2" fill="#1a1aa8"/><rect x="213" y="93" width="1" height="2" fill="#1a1aa8"/><rect x="231" y="88" width="1" height="2" fill="#1a1aa8"/><rect x="235" y="102" width="2" height="2" fill="#1a1aa8"/><rect x="232" y="100" width="1" height="2" fill="#1a1aa8"/><rect x="191" y="79" width="2" height="2" fill="#1a1aa8"/><rect x="208" y="85" width="1" height="2" fill="#1a1aa8"/><rect x="163" y="120" width="1" height="2" fill="#1a1aa8"/><rect x="169" y="86" width="2" height="2" fill="#1a1aa8"/><rect x="217" y="124" width="1" height="2" fill="#1a1aa8"/><rect x="209" y="135" width="1" height="2" fill="#1a1aa8"/><rect x="233" y="113" width="2" height="2" fill="#1a1aa8"/><rect x="215" y="111" width="2" height="2" fill="#1a1aa8"/><rect x="208" y="119" width="2" height="2" fill="#1a1aa8"/><rect x="171" y="112" width="1" height="2" fill="#1a1aa8"/><rect x="181" y="101" width="1" height="2" fill="#1a1aa8"/><rect x="231" y="108" width="2" height="2" fill="#1a1aa8"/><rect x="187" y="113" width="1" height="2" fill="#1a1aa8"/><rect x="194" y="111" width="1" height="2" fill="#1a1aa8"/><rect x="231" y="121" width="2" height="2" fill="#1a1aa8"/><rect x="213" y="91" width="1" height="2" fill="#1a1aa8"/><rect x="182" y="95" width="2" height="2" fill="#1a1aa8"/><rect x="168" y="95" width="1" height="2" fill="#1a1aa8"/><rect x="240" y="103" width="2" height="2" fill="#1a1aa8"/><rect x="201" y="108" width="2" height="2" fill="#1a1aa8"/><rect x="162" y="98" width="2" height="2" fill="#1a1aa8"/><rect x="177" y="121" width="2" height="2" fill="#1a1aa8"/><rect x="235" y="96" width="2" height="2" fill="#1a1aa8"/><rect x="235" y="105" width="2" height="2" fill="#1a1aa8"/><rect x="175" y="109" width="2" height="2" fill="#1a1aa8"/><rect x="230" y="125" width="2" height="2" fill="#1a1aa8"/><rect x="186" y="138" width="1" height="2" fill="#1a1aa8"/><rect x="237" y="110" width="2" height="2" fill="#1a1aa8"/><rect x="201" y="122" width="2" height="2" fill="#1a1aa8"/><rect x="225" y="107" width="1" height="2" fill="#1a1aa8"/><rect x="157" y="112" width="1" height="2" fill="#1a1aa8"/><rect x="199" y="99" width="1" height="2" fill="#1a1aa8"/><rect x="188" y="129" width="2" height="2" fill="#1a1aa8"/><rect x="189" y="129" width="2" height="2" fill="#1a1aa8"/><rect x="168" y="131" width="2" height="2" fill="#1a1aa8"/><rect x="222" y="111" width="2" height="2" fill="#1a1aa8"/><rect x="195" y="107" width="1" height="2" fill="#1a1aa8"/><rect x="165" y="118" width="1" height="2" fill="#1a1aa8"/><rect x="177" y="93" width="1" height="2" fill="#1a1aa8"/><rect x="177" y="120" width="1" height="2" fill="#1a1aa8"/><rect x="208" y="122" width="1" height="2" fill="#1a1aa8"/><rect x="189" y="90" width="2" height="2" fill="#1a1aa8"/><rect x="221" y="124" width="2" height="2" fill="#1a1aa8"/><rect x="173" y="108" width="2" height="2" fill="#1a1aa8"/><rect x="220" y="113" width="1" height="2" fill="#1a1aa8"/><rect x="211" y="82" width="2" height="2" fill="#1a1aa8"/><rect x="247" y="108" width="2" height="2" fill="#1a1aa8"/><rect x="212" y="97" width="1" height="2" fill="#1a1aa8"/><rect x="245" y="100" width="2" height="2" fill="#1a1aa8"/><rect x="224" y="128" width="2" height="2" fill="#1a1aa8"/><rect x="222" y="129" width="2" height="2" fill="#1a1aa8"/><rect x="223" y="119" width="2" height="2" fill="#1a1aa8"/><rect x="237" y="116" width="1" height="2" fill="#1a1aa8"/><rect x="212" y="101" width="2" height="2" fill="#1a1aa8"/><rect x="184" y="130" width="2" height="2" fill="#1a1aa8"/><rect x="227" y="101" width="2" height="2" fill="#1a1aa8"/><rect x="194" y="98" width="1" height="2" fill="#1a1aa8"/><rect x="161" y="100" width="2" height="2" fill="#1a1aa8"/><rect x="178" y="104" width="1" height="2" fill="#1a1aa8"/><rect x="184" y="107" width="2" height="2" fill="#1a1aa8"/><rect x="166" y="129" width="2" height="2" fill="#1a1aa8"/><rect x="190" y="82" width="2" height="2" fill="#1a1aa8"/><rect x="194" y="101" width="2" height="2" fill="#1a1aa8"/><rect x="182" y="101" width="1" height="2" fill="#1a1aa8"/><rect x="174" y="110" width="1" height="2" fill="#1a1aa8"/><rect x="247" y="113" width="2" height="2" fill="#1a1aa8"/><rect x="191" y="96" width="2" height="2" fill="#1a1aa8"/><rect x="244" y="103" width="1" height="2" fill="#1a1aa8"/><rect x="227" y="127" width="2" height="2" fill="#1a1aa8"/><rect x="203" y="124" width="1" height="2" fill="#1a1aa8"/><rect x="183" y="122" width="2" height="2" fill="#1a1aa8"/><rect x="221" y="85" width="1" height="2" fill="#1a1aa8"/><rect x="160" y="105" width="2" height="2" fill="#1a1aa8"/><rect x="198" y="90" width="2" height="2" fill="#1a1aa8"/><rect x="220" y="111" width="2" height="2" fill="#1a1aa8"/><rect x="226" y="95" width="1" height="2" fill="#1a1aa8"/><rect x="234" y="108" width="1" height="2" fill="#1a1aa8"/><rect x="177" y="95" width="2" height="2" fill="#1a1aa8"/><rect x="214" y="114" width="2" height="2" fill="#1a1aa8"/><rect x="179" y="121" width="1" height="2" fill="#1a1aa8"/><rect x="213" y="119" width="2" height="2" fill="#1a1aa8"/><rect x="213" y="121" width="2" height="2" fill="#1a1aa8"/><rect x="192" y="109" width="1" height="2" fill="#1a1aa8"/><rect x="183" y="83" width="2" height="2" fill="#1a1aa8"/><rect x="214" y="105" width="1" height="2" fill="#1a1aa8"/><rect x="189" y="134" width="1" height="2" fill="#1a1aa8"/><rect x="210" y="118" width="2" height="2" fill="#1a1aa8"/><rect x="201" y="115" width="2" height="2" fill="#1a1aa8"/><rect x="228" y="105" width="2" height="2" fill="#1a1aa8"/><rect x="176" y="111" width="1" height="2" fill="#1a1aa8"/><rect x="196" y="97" width="2" height="2" fill="#1a1aa8"/><rect x="181" y="93" width="1" height="2" fill="#1a1aa8"/><rect x="211" y="108" width="1" height="2" fill="#1a1aa8"/><rect x="192" y="111" width="2" height="2" fill="#1a1aa8"/><rect x="236" y="107" width="2" height="2" fill="#1a1aa8"/><rect x="210" y="112" width="1" height="2" fill="#1a1aa8"/><rect x="221" y="112" width="2" height="2" fill="#1a1aa8"/><rect x="192" y="112" width="2" height="2" fill="#1a1aa8"/><rect x="179" y="116" width="2" height="2" fill="#1a1aa8"/><rect x="215" y="127" width="2" height="2" fill="#1a1aa8"/><rect x="188" y="107" width="2" height="2" fill="#1a1aa8"/><rect x="229" y="122" width="1" height="2" fill="#1a1aa8"/><rect x="201" y="111" width="2" height="2" fill="#1a1aa8"/><rect x="161" y="110" width="2" height="2" fill="#1a1aa8"/><rect x="166" y="88" width="1" height="2" fill="#1a1aa8"/><rect x="188" y="126" width="1" height="2" fill="#1a1aa8"/><rect x="202" y="117" width="2" height="2" fill="#1a1aa8"/><rect x="244" y="124" width="1" height="2" fill="#1a1aa8"/><rect x="194" y="117" width="2" height="2" fill="#1a1aa8"/><rect x="200" y="116" width="2" height="2" fill="#1a1aa8"/><rect x="180" y="102" width="2" height="2" fill="#1a1aa8"/><rect x="197" y="103" width="2" height="2" fill="#1a1aa8"/><rect x="193" y="125" width="2" height="2" fill="#1a1aa8"/><rect x="177" y="115" width="1" height="2" fill="#1a1aa8"/><rect x="171" y="83" width="2" height="2" fill="#1a1aa8"/><rect x="194" y="80" width="2" height="2" fill="#1a1aa8"/><rect x="211" y="92" width="2" height="2" fill="#1a1aa8"/><rect x="217" y="112" width="2" height="2" fill="#1a1aa8"/><rect x="189" y="95" width="2" height="2" fill="#1a1aa8"/><rect x="203" y="85" width="2" height="2" fill="#1a1aa8"/><rect x="215" y="111" width="2" height="2" fill="#1a1aa8"/><rect x="183" y="100" width="2" height="2" fill="#1a1aa8"/><rect x="183" y="120" width="2" height="2" fill="#1a1aa8"/><rect x="198" y="100" width="2" height="2" fill="#1a1aa8"/><rect x="222" y="133" width="2" height="2" fill="#1a1aa8"/><rect x="219" y="119" width="1" height="2" fill="#1a1aa8"/><rect x="169" y="113" width="2" height="2" fill="#1a1aa8"/><rect x="188" y="103" width="1" height="2" fill="#1a1aa8"/><rect x="191" y="111" width="1" height="2" fill="#1a1aa8"/><rect x="239" y="113" width="2" height="2" fill="#1a1aa8"/><rect x="222" y="96" width="2" height="2" fill="#1a1aa8"/><rect x="197" y="120" width="2" height="2" fill="#1a1aa8"/><rect x="169" y="131" width="2" height="2" fill="#1a1aa8"/><rect x="186" y="119" width="1" height="2" fill="#1a1aa8"/><rect x="178" y="96" width="2" height="2" fill="#1a1aa8"/><rect x="217" y="90" width="2" height="2" fill="#1a1aa8"/><rect x="207" y="115" width="1" height="2" fill="#1a1aa8"/><rect x="216" y="101" width="1" height="2" fill="#1a1aa8"/><rect x="180" y="132" width="1" height="2" fill="#1a1aa8"/><rect x="197" y="110" width="2" height="2" fill="#1a1aa8"/><rect x="184" y="102" width="2" height="2" fill="#1a1aa8"/><rect x="197" y="112" width="2" height="2" fill="#1a1aa8"/><rect x="175" y="122" width="1" height="2" fill="#1a1aa8"/><rect x="184" y="83" width="2" height="2" fill="#1a1aa8"/><rect x="209" y="92" width="2" height="2" fill="#1a1aa8"/><rect x="184" y="88" width="2" height="2" fill="#1a1aa8"/><rect x="211" y="112" width="2" height="2" fill="#1a1aa8"/><rect x="156" y="93" width="1" height="2" fill="#1a1aa8"/><rect x="193" y="136" width="2" height="2" fill="#1a1aa8"/><rect x="201" y="81" width="1" height="2" fill="#1a1aa8"/><rect x="237" y="91" width="1" height="2" fill="#1a1aa8"/><rect x="197" y="83" width="2" height="2" fill="#1a1aa8"/><rect x="171" y="103" width="2" height="2" fill="#1a1aa8"/><rect x="186" y="115" width="1" height="2" fill="#1a1aa8"/><rect x="178" y="96" width="2" height="2" fill="#1a1aa8"/><rect x="186" y="87" width="1" height="2" fill="#1a1aa8"/><rect x="206" y="123" width="2" height="2" fill="#1a1aa8"/><rect x="221" y="130" width="1" height="2" fill="#1a1aa8"/><rect x="202" y="114" width="2" height="2" fill="#1a1aa8"/><rect x="196" y="89" width="2" height="2" fill="#1a1aa8"/><rect x="192" y="122" width="1" height="2" fill="#1a1aa8"/><rect x="219" y="106" width="2" height="2" fill="#1a1aa8"/><rect x="229" y="123" width="1" height="2" fill="#1a1aa8"/><rect x="208" y="119" width="2" height="2" fill="#1a1aa8"/><rect x="172" y="86" width="1" height="2" fill="#1a1aa8"/><rect x="232" y="116" width="1" height="2" fill="#1a1aa8"/><rect x="225" y="104" width="1" height="2" fill="#1a1aa8"/><rect x="206" y="136" width="1" height="2" fill="#1a1aa8"/><rect x="186" y="109" width="2" height="2" fill="#1a1aa8"/><rect x="207" y="115" width="2" height="2" fill="#1a1aa8"/><rect x="189" y="102" width="1" height="2" fill="#1a1aa8"/><rect x="216" y="81" width="1" height="2" fill="#1a1aa8"/><rect x="240" y="101" width="1" height="2" fill="#1a1aa8"/><rect x="211" y="113" width="2" height="2" fill="#1a1aa8"/><rect x="208" y="125" width="2" height="2" fill="#1a1aa8"/></svg><div style="left:1405px;top:0px;width:40px;height:268px;background:#e0e8e0"></div><div style="left:1444px;top:0px;width:2px;height:268px;background:#a8c0a8"></div><div style="left:1405px;top:267px;width:40px;height:1px;background:#a8c0a8"></div><div style="left:1446px;top:0px;width:1px;height:268px;background:#f4f8f4"></div><svg style="left:1447.5px;top:-7px" width="5" height="9"><polygon points="0,0 5,4.5 0,9" fill="#000"/></svg><svg style="left:1447.5px;top:8px" width="5" height="9"><polygon points="0,0 5,4.5 0,9" fill="#000"/></svg><svg style="left:1447.5px;top:23px" width="5" height="9"><polygon points="0,0 5,4.5 0,9" fill="#000"/></svg><svg style="left:1447.5px;top:38px" width="5" height="9"><polygon points="0,0 5,4.5 0,9" fill="#000"/></svg><svg style="left:1447.5px;top:53px" width="5" height="9"><polygon points="0,0 5,4.5 0,9" fill="#000"/></svg><svg style="left:1447.5px;top:68px" width="5" height="9"><polygon points="0,0 5,4.5 0,9" fill="#000"/></svg><svg style="left:1447.5px;top:83px" width="5" height="9"><polygon points="0,0 5,4.5 0,9" fill="#000"/></svg><svg style="left:1447.5px;top:98px" width="5" height="9"><polygon points="0,0 5,4.5 0,9" fill="#000"/></svg><svg style="left:1447.5px;top:113px" width="5" height="9"><polygon points="0,0 5,4.5 0,9" fill="#000"/></svg><svg style="left:1447.5px;top:128px" width="5" height="9"><polygon points="0,0 5,4.5 0,9" fill="#000"/></svg><div style="left:1454px;top:0px;width:1px;height:270px;background:#7a7a7a"></div><div style="left:1455px;top:0px;width:1px;height:270px;background:#fff"></div><div style="left:1456px;top:0px;width:1px;height:270px;background:#9a9a9a"></div><div style="left:1457px;top:6px;width:206px;height:1px;background:#a8c0a8"></div><div style="left:1493px;top:-4px;width:41px;height:5px;background:#fff;border:1px solid #6a6a6a"></div><div style="left:1535px;top:-4px;width:17px;height:5px;background:#e0e8e0;border:1px solid #6a6a6a"></div><div style="left:1601px;top:-4px;width:42px;height:5px;background:#fff;border:1px solid #6a6a6a"></div><div style="left:1644px;top:-4px;width:16px;height:5px;background:#e0e8e0;border:1px solid #6a6a6a"></div><div style="left:1663px;top:0px;width:1px;height:268px;background:#9a9a9a"></div><div style="left:1664px;top:0px;width:1px;height:268px;background:#fff"></div><div style="left:1665px;top:0px;width:1px;height:270px;background:#7a7a7a"></div><div style="left:1457px;top:267px;width:206px;height:1px;background:#9a9a9a"></div><div style="left:0px;top:271px;width:1669px;height:2px;background:#747474"></div><div style="left:0px;top:273px;width:1px;height:479px;background:#a8bca8"></div><div style="left:1px;top:273px;width:1px;height:479px;background:#fff"></div><div class="t" style="left:3px;top:278px;">Decay:</div><div class="t" style="left:3px;top:305px;">Pattern:</div><div style="left:97px;top:274px;width:196px;height:20px;background:#fff;border:1px solid #7a7a7a"></div><div class="t" style="left:101px;top:278px;">Overall Decay</div><div style="left:277px;top:276px;width:14px;height:16px;background:#d8e0d8;border:1px solid #7a7a7a;box-shadow:inset 1px 1px 0 #fff"></div><svg style="left:281px;top:284px" width="8" height="4"><polygon points="0,0 8,0 4.0,4" fill="#000"/></svg><div style="left:97px;top:301px;width:196px;height:20px;background:#fff;border:1px solid #7a7a7a"></div><div class="t" style="left:101px;top:305px;">FRET pattern</div><div style="left:277px;top:303px;width:14px;height:16px;background:#d8e0d8;border:1px solid #7a7a7a;box-shadow:inset 1px 1px 0 #fff"></div><svg style="left:281px;top:311px" width="8" height="4"><polygon points="0,0 8,0 4.0,4" fill="#000"/></svg><div class="btn" style="left:57px;top:328px;width:30px;height:20px;line-height:19px;">Help</div><div style="left:2px;top:382px;width:274px;height:300px;background:#e0e8e0"></div><div class="t" style="left:4px;top:385px;">Parameter</div><div class="t" style="left:136px;top:385px;">Value</div><div class="t" style="left:259px;top:385px;">Fit</div><div style="left:134px;top:402px;width:108px;height:20px;background:#fff"></div><div style="left:242px;top:403px;width:13px;height:19px;background:#dde5dd;border-left:1px solid #777"></div><svg style="left:244px;top:405px" width="10" height="16"><polygon points="1,6 9,6 5,1" fill="#000"/><rect x="0" y="7.5" width="10" height="1.5" fill="#8a8a8a"/><polygon points="1,10 9,10 5,15" fill="#000"/></svg><div style="left:257px;top:402px;width:18px;height:20px;background:#fff"></div><svg style="left:261px;top:407px" width="11" height="10"><path d="M1.5 5 L4 8 L9.5 1.5" stroke="#000" stroke-width="2" fill="none"/></svg><div class="t" style="left:4px;top:405px;">A<sub>[1]</sub> [a.u.]</div><div class="btn" style="left:101px;top:404px;width:28px;height:15px;line-height:14px;border-radius:1px;border-color:#8a8a8a;background:#e8ece8;line-height:15px">Limits</div><div class="t" style="left:134px;top:406px;width:108px;text-align:center;">4.4517 ± 0.0081</div><div style="left:134px;top:422px;width:108px;height:20px;background:#fff"></div><div style="left:242px;top:423px;width:13px;height:19px;background:#dde5dd;border-left:1px solid #777"></div><svg style="left:244px;top:425px" width="10" height="16"><polygon points="1,6 9,6 5,1" fill="#000"/><rect x="0" y="7.5" width="10" height="1.5" fill="#8a8a8a"/><polygon points="1,10 9,10 5,15" fill="#000"/></svg><div style="left:257px;top:422px;width:18px;height:20px;background:#fff"></div><svg style="left:261px;top:427px" width="11" height="10"><path d="M1.5 5 L4 8 L9.5 1.5" stroke="#000" stroke-width="2" fill="none"/></svg><div class="t" style="left:4px;top:425px;">A<sub>[2]</sub> [a.u.]</div><div class="btn" style="left:101px;top:424px;width:28px;height:15px;line-height:14px;border-radius:1px;border-color:#8a8a8a;background:#e8ece8;line-height:15px">Limits</div><div class="t" style="left:134px;top:426px;width:108px;text-align:center;">11.206 ± 0.055</div><div style="left:134px;top:442px;width:108px;height:20px;background:#fff"></div><div style="left:242px;top:443px;width:13px;height:19px;background:#dde5dd;border-left:1px solid #777"></div><svg style="left:244px;top:445px" width="10" height="16"><polygon points="1,6 9,6 5,1" fill="#000"/><rect x="0" y="7.5" width="10" height="1.5" fill="#8a8a8a"/><polygon points="1,10 9,10 5,15" fill="#000"/></svg><div style="left:257px;top:442px;width:18px;height:20px;background:#fff"></div><svg style="left:261px;top:447px" width="11" height="10"><path d="M1.5 5 L4 8 L9.5 1.5" stroke="#000" stroke-width="2" fill="none"/></svg><div class="t" style="left:4px;top:445px;">Bkgr <sub>Dec</sub> [Cnts]</div><div class="btn" style="left:101px;top:444px;width:28px;height:15px;line-height:14px;border-radius:1px;border-color:#8a8a8a;background:#e8ece8;line-height:15px">Limits</div><div class="t" style="left:134px;top:446px;width:108px;text-align:center;">832.1 ± 3.6</div><div style="left:134px;top:462px;width:108px;height:20px;background:#fff"></div><div style="left:242px;top:463px;width:13px;height:19px;background:#dde5dd;border-left:1px solid #777"></div><svg style="left:244px;top:465px" width="10" height="16"><polygon points="1,6 9,6 5,1" fill="#000"/><rect x="0" y="7.5" width="10" height="1.5" fill="#8a8a8a"/><polygon points="1,10 9,10 5,15" fill="#000"/></svg><div style="left:257px;top:462px;width:18px;height:20px;background:#fff"></div><svg style="left:261px;top:467px" width="11" height="10"><path d="M1.5 5 L4 8 L9.5 1.5" stroke="#000" stroke-width="2" fill="none"/></svg><div class="t" style="left:4px;top:465px;">Shift <sub>Pat [1]</sub> [ns]</div><div class="btn" style="left:101px;top:464px;width:28px;height:15px;line-height:14px;border-radius:1px;border-color:#8a8a8a;background:#4cbc54;line-height:15px">Limits</div><div class="t" style="left:134px;top:466px;width:108px;text-align:center;">0.000 ± 0.000</div><div style="left:134px;top:482px;width:108px;height:20px;background:#fff"></div><div style="left:242px;top:483px;width:13px;height:19px;background:#dde5dd;border-left:1px solid #777"></div><svg style="left:244px;top:485px" width="10" height="16"><polygon points="1,6 9,6 5,1" fill="#000"/><rect x="0" y="7.5" width="10" height="1.5" fill="#8a8a8a"/><polygon points="1,10 9,10 5,15" fill="#000"/></svg><div style="left:257px;top:482px;width:18px;height:20px;background:#fff"></div><svg style="left:261px;top:487px" width="11" height="10"><path d="M1.5 5 L4 8 L9.5 1.5" stroke="#000" stroke-width="2" fill="none"/></svg><div class="t" style="left:4px;top:485px;">Shift <sub>Pat [2]</sub> [ns]</div><div class="btn" style="left:101px;top:484px;width:28px;height:15px;line-height:14px;border-radius:1px;border-color:#8a8a8a;background:#4cbc54;line-height:15px">Limits</div><div class="t" style="left:134px;top:486px;width:108px;text-align:center;">0.000 ± 0.000</div><div style="left:134px;top:502px;width:108px;height:20px;background:#fff"></div><div style="left:242px;top:503px;width:13px;height:19px;background:#dde5dd;border-left:1px solid #777"></div><svg style="left:244px;top:505px" width="10" height="16"><polygon points="1,6 9,6 5,1" fill="#000"/><rect x="0" y="7.5" width="10" height="1.5" fill="#8a8a8a"/><polygon points="1,10 9,10 5,15" fill="#000"/></svg><div class="t" style="left:4px;top:505px;">Bkgr <sub>Pat [1]</sub> [Cnts]</div><div class="t" style="left:134px;top:506px;width:105px;text-align:right;">62.634</div><div style="left:134px;top:522px;width:108px;height:20px;background:#fff"></div><div style="left:242px;top:523px;width:13px;height:19px;background:#dde5dd;border-left:1px solid #777"></div><svg style="left:244px;top:525px" width="10" height="16"><polygon points="1,6 9,6 5,1" fill="#000"/><rect x="0" y="7.5" width="10" height="1.5" fill="#8a8a8a"/><polygon points="1,10 9,10 5,15" fill="#000"/></svg><div class="t" style="left:4px;top:525px;">Bkgr <sub>Pat [2]</sub> [Cnts]</div><div class="t" style="left:134px;top:526px;width:105px;text-align:right;">14.197</div><div style="left:242px;top:542px;width:14px;height:20px;background:#fff"></div><div class="t" style="left:4px;top:545px;">Sum <sub>Int</sub> [MCnts]</div><div class="t" style="left:134px;top:546px;width:108px;text-align:center;">21.6855 ± 0.0081</div><div style="left:242px;top:562px;width:14px;height:20px;background:#fff"></div><div class="t" style="left:4px;top:565px;">Integral<sub>[1]</sub> [MCnts]</div><div class="t" style="left:134px;top:566px;width:108px;text-align:center;">3.371 ± 0.000</div><div style="left:242px;top:582px;width:14px;height:20px;background:#fff"></div><div class="t" style="left:4px;top:585px;">Integral<sub>[2]</sub> [MCnts]</div><div class="t" style="left:134px;top:586px;width:108px;text-align:center;">0.596 ± 0.000</div><div style="left:242px;top:602px;width:14px;height:20px;background:#fff"></div><div class="t" style="left:4px;top:605px;">I<sub>[1]</sub> [MCnts]</div><div class="t" style="left:134px;top:606px;width:108px;text-align:center;">15.007 ± 0.027</div><div style="left:242px;top:622px;width:14px;height:20px;background:#fff"></div><div class="t" style="left:4px;top:625px;">I<sub>[2]</sub> [MCnts]</div><div class="t" style="left:134px;top:626px;width:108px;text-align:center;">6.679 ± 0.033</div><div style="left:242px;top:642px;width:14px;height:20px;background:#fff"></div><div class="t" style="left:4px;top:645px;">FracIntPrc<sub>[1]</sub> [%]</div><div class="t" style="left:134px;top:646px;width:108px;text-align:center;">69.20 ± 0.14</div><div style="left:242px;top:662px;width:14px;height:20px;background:#fff"></div><div class="t" style="left:4px;top:665px;">FracIntPrc<sub>[2]</sub> [%]</div><div class="t" style="left:134px;top:666px;width:108px;text-align:center;">30.80 ± 0.14</div><div style="left:2px;top:382px;width:274px;height:2px;background:#000"></div><div style="left:2px;top:401px;width:274px;height:2px;background:#000"></div><div style="left:2px;top:421px;width:274px;height:2px;background:#000"></div><div style="left:2px;top:441px;width:274px;height:2px;background:#000"></div><div style="left:2px;top:461px;width:274px;height:2px;background:#000"></div><div style="left:2px;top:481px;width:274px;height:2px;background:#000"></div><div style="left:2px;top:501px;width:274px;height:2px;background:#000"></div><div style="left:2px;top:521px;width:274px;height:2px;background:#000"></div><div style="left:2px;top:541px;width:274px;height:2px;background:#000"></div><div style="left:2px;top:561px;width:274px;height:2px;background:#000"></div><div style="left:2px;top:581px;width:274px;height:2px;background:#000"></div><div style="left:2px;top:601px;width:274px;height:2px;background:#000"></div><div style="left:2px;top:621px;width:274px;height:2px;background:#000"></div><div style="left:2px;top:641px;width:274px;height:2px;background:#000"></div><div style="left:2px;top:661px;width:274px;height:2px;background:#000"></div><div style="left:2px;top:681px;width:274px;height:2px;background:#000"></div><div style="left:2px;top:382px;width:1.5px;height:300px;background:#000"></div><div style="left:132px;top:382px;width:2px;height:300px;background:#000"></div><div style="left:255.5px;top:382px;width:1.5px;height:300px;background:#000"></div><div style="left:274px;top:382px;width:2px;height:300px;background:#000"></div><div style="left:277px;top:382px;width:16px;height:341px;background:#cdd5cd;border:1px solid #7a7a7a;border-top:none;border-bottom:none"></div><div style="left:278px;top:382px;width:15px;height:15px;background:#e0e8e0;border:1px solid #7a7a7a"></div><svg style="left:281px;top:388px" width="9" height="5"><polygon points="0,5 9,5 4.5,0" fill="#000"/></svg><div style="left:278px;top:398px;width:15px;height:16px;background:#e0e8e0;border:1px solid #7a7a7a"></div><div style="left:278px;top:707px;width:15px;height:15px;background:#e0e8e0;border:1px solid #7a7a7a"></div><svg style="left:281px;top:713px" width="9" height="5"><polygon points="0,0 9,0 4.5,5" fill="#000"/></svg><div style="left:2px;top:723px;width:293px;height:1px;background:#7a7a7a"></div><div class="btn" style="left:3px;top:726px;width:54px;height:20px;line-height:19px;">Clear</div><div class="btn" style="left:64px;top:726px;width:53px;height:20px;line-height:19px;background:linear-gradient(#ff7a1a 0%,#ff7a1a 45%,#f36410 50%,#f36410 90%,#ff8a30 100%);border-color:#c46020">Initial Fit</div><div class="btn" style="left:124px;top:726px;width:53px;height:20px;line-height:19px;">Fit</div><div class="t" style="left:199px;top:731px;">X² =</div><div style="left:223px;top:727px;width:52px;height:20px;background:#e0e8e0;border:1px solid #7a7a7a"></div><div class="t" style="left:223px;top:731px;width:49px;text-align:right;">6.015</div><div style="left:0px;top:751px;width:1669px;height:1px;background:#7a7a7a"></div><svg style="left:295px;top:273px;font-family:Liberation Sans" width="615" height="478"><rect width="615" height="478" fill="#fff"/><line x1="71.50" y1="28.50" x2="71.50" y2="432.00" stroke="#e0e0e0" stroke-width="1" /><line x1="81.50" y1="28.50" x2="81.50" y2="432.00" stroke="#e0e0e0" stroke-width="1" /><line x1="92.50" y1="28.50" x2="92.50" y2="432.00" stroke="#e0e0e0" stroke-width="1" /><line x1="114.50" y1="28.50" x2="114.50" y2="432.00" stroke="#e0e0e0" stroke-width="1" /><line x1="124.50" y1="28.50" x2="124.50" y2="432.00" stroke="#e0e0e0" stroke-width="1" /><line x1="135.50" y1="28.50" x2="135.50" y2="432.00" stroke="#e0e0e0" stroke-width="1" /><line x1="156.50" y1="28.50" x2="156.50" y2="432.00" stroke="#e0e0e0" stroke-width="1" /><line x1="167.50" y1="28.50" x2="167.50" y2="432.00" stroke="#e0e0e0" stroke-width="1" /><line x1="178.50" y1="28.50" x2="178.50" y2="432.00" stroke="#e0e0e0" stroke-width="1" /><line x1="199.50" y1="28.50" x2="199.50" y2="432.00" stroke="#e0e0e0" stroke-width="1" /><line x1="210.50" y1="28.50" x2="210.50" y2="432.00" stroke="#e0e0e0" stroke-width="1" /><line x1="221.50" y1="28.50" x2="221.50" y2="432.00" stroke="#e0e0e0" stroke-width="1" /><line x1="242.50" y1="28.50" x2="242.50" y2="432.00" stroke="#e0e0e0" stroke-width="1" /><line x1="253.50" y1="28.50" x2="253.50" y2="432.00" stroke="#e0e0e0" stroke-width="1" /><line x1="263.50" y1="28.50" x2="263.50" y2="432.00" stroke="#e0e0e0" stroke-width="1" /><line x1="285.50" y1="28.50" x2="285.50" y2="432.00" stroke="#e0e0e0" stroke-width="1" /><line x1="296.50" y1="28.50" x2="296.50" y2="432.00" stroke="#e0e0e0" stroke-width="1" /><line x1="306.50" y1="28.50" x2="306.50" y2="432.00" stroke="#e0e0e0" stroke-width="1" /><line x1="328.50" y1="28.50" x2="328.50" y2="432.00" stroke="#e0e0e0" stroke-width="1" /><line x1="338.50" y1="28.50" x2="338.50" y2="432.00" stroke="#e0e0e0" stroke-width="1" /><line x1="349.50" y1="28.50" x2="349.50" y2="432.00" stroke="#e0e0e0" stroke-width="1" /><line x1="371.50" y1="28.50" x2="371.50" y2="432.00" stroke="#e0e0e0" stroke-width="1" /><line x1="381.50" y1="28.50" x2="381.50" y2="432.00" stroke="#e0e0e0" stroke-width="1" /><line x1="392.50" y1="28.50" x2="392.50" y2="432.00" stroke="#e0e0e0" stroke-width="1" /><line x1="413.50" y1="28.50" x2="413.50" y2="432.00" stroke="#e0e0e0" stroke-width="1" /><line x1="424.50" y1="28.50" x2="424.50" y2="432.00" stroke="#e0e0e0" stroke-width="1" /><line x1="435.50" y1="28.50" x2="435.50" y2="432.00" stroke="#e0e0e0" stroke-width="1" /><line x1="456.50" y1="28.50" x2="456.50" y2="432.00" stroke="#e0e0e0" stroke-width="1" /><line x1="467.50" y1="28.50" x2="467.50" y2="432.00" stroke="#e0e0e0" stroke-width="1" /><line x1="478.50" y1="28.50" x2="478.50" y2="432.00" stroke="#e0e0e0" stroke-width="1" /><line x1="499.50" y1="28.50" x2="499.50" y2="432.00" stroke="#e0e0e0" stroke-width="1" /><line x1="510.50" y1="28.50" x2="510.50" y2="432.00" stroke="#e0e0e0" stroke-width="1" /><line x1="521.50" y1="28.50" x2="521.50" y2="432.00" stroke="#e0e0e0" stroke-width="1" /><line x1="542.50" y1="28.50" x2="542.50" y2="432.00" stroke="#e0e0e0" stroke-width="1" /><line x1="553.50" y1="28.50" x2="553.50" y2="432.00" stroke="#e0e0e0" stroke-width="1" /><line x1="563.50" y1="28.50" x2="563.50" y2="432.00" stroke="#e0e0e0" stroke-width="1" /><line x1="585.50" y1="28.50" x2="585.50" y2="432.00" stroke="#e0e0e0" stroke-width="1" /><line x1="596.50" y1="28.50" x2="596.50" y2="432.00" stroke="#e0e0e0" stroke-width="1" /><line x1="50.50" y1="427.50" x2="604.35" y2="427.50" stroke="#e0e0e0" stroke-width="1" /><line x1="50.50" y1="422.50" x2="604.35" y2="422.50" stroke="#e0e0e0" stroke-width="1" /><line x1="50.50" y1="418.50" x2="604.35" y2="418.50" stroke="#e0e0e0" stroke-width="1" /><line x1="50.50" y1="391.50" x2="604.35" y2="391.50" stroke="#e0e0e0" stroke-width="1" /><line x1="50.50" y1="377.50" x2="604.35" y2="377.50" stroke="#e0e0e0" stroke-width="1" /><line x1="50.50" y1="367.50" x2="604.35" y2="367.50" stroke="#e0e0e0" stroke-width="1" /><line x1="50.50" y1="359.50" x2="604.35" y2="359.50" stroke="#e0e0e0" stroke-width="1" /><line x1="50.50" y1="352.50" x2="604.35" y2="352.50" stroke="#e0e0e0" stroke-width="1" /><line x1="50.50" y1="347.50" x2="604.35" y2="347.50" stroke="#e0e0e0" stroke-width="1" /><line x1="50.50" y1="342.50" x2="604.35" y2="342.50" stroke="#e0e0e0" stroke-width="1" /><line x1="50.50" y1="338.50" x2="604.35" y2="338.50" stroke="#e0e0e0" stroke-width="1" /><line x1="50.50" y1="311.50" x2="604.35" y2="311.50" stroke="#e0e0e0" stroke-width="1" /><line x1="50.50" y1="296.50" x2="604.35" y2="296.50" stroke="#e0e0e0" stroke-width="1" /><line x1="50.50" y1="286.50" x2="604.35" y2="286.50" stroke="#e0e0e0" stroke-width="1" /><line x1="50.50" y1="279.50" x2="604.35" y2="279.50" stroke="#e0e0e0" stroke-width="1" /><line x1="50.50" y1="272.50" x2="604.35" y2="272.50" stroke="#e0e0e0" stroke-width="1" /><line x1="50.50" y1="267.50" x2="604.35" y2="267.50" stroke="#e0e0e0" stroke-width="1" /><line x1="50.50" y1="262.50" x2="604.35" y2="262.50" stroke="#e0e0e0" stroke-width="1" /><line x1="50.50" y1="258.50" x2="604.35" y2="258.50" stroke="#e0e0e0" stroke-width="1" /><line x1="50.50" y1="231.50" x2="604.35" y2="231.50" stroke="#e0e0e0" stroke-width="1" /><line x1="50.50" y1="216.50" x2="604.35" y2="216.50" stroke="#e0e0e0" stroke-width="1" /><line x1="50.50" y1="206.50" x2="604.35" y2="206.50" stroke="#e0e0e0" stroke-width="1" /><line x1="50.50" y1="199.50" x2="604.35" y2="199.50" stroke="#e0e0e0" stroke-width="1" /><line x1="50.50" y1="192.50" x2="604.35" y2="192.50" stroke="#e0e0e0" stroke-width="1" /><line x1="50.50" y1="187.50" x2="604.35" y2="187.50" stroke="#e0e0e0" stroke-width="1" /><line x1="50.50" y1="182.50" x2="604.35" y2="182.50" stroke="#e0e0e0" stroke-width="1" /><line x1="50.50" y1="178.50" x2="604.35" y2="178.50" stroke="#e0e0e0" stroke-width="1" /><line x1="50.50" y1="150.50" x2="604.35" y2="150.50" stroke="#e0e0e0" stroke-width="1" /><line x1="50.50" y1="136.50" x2="604.35" y2="136.50" stroke="#e0e0e0" stroke-width="1" /><line x1="50.50" y1="126.50" x2="604.35" y2="126.50" stroke="#e0e0e0" stroke-width="1" /><line x1="50.50" y1="119.50" x2="604.35" y2="119.50" stroke="#e0e0e0" stroke-width="1" /><line x1="50.50" y1="112.50" x2="604.35" y2="112.50" stroke="#e0e0e0" stroke-width="1" /><line x1="50.50" y1="107.50" x2="604.35" y2="107.50" stroke="#e0e0e0" stroke-width="1" /><line x1="50.50" y1="102.50" x2="604.35" y2="102.50" stroke="#e0e0e0" stroke-width="1" /><line x1="50.50" y1="98.50" x2="604.35" y2="98.50" stroke="#e0e0e0" stroke-width="1" /><line x1="50.50" y1="70.50" x2="604.35" y2="70.50" stroke="#e0e0e0" stroke-width="1" /><line x1="50.50" y1="56.50" x2="604.35" y2="56.50" stroke="#e0e0e0" stroke-width="1" /><line x1="50.50" y1="46.50" x2="604.35" y2="46.50" stroke="#e0e0e0" stroke-width="1" /><line x1="50.50" y1="39.50" x2="604.35" y2="39.50" stroke="#e0e0e0" stroke-width="1" /><line x1="50.50" y1="32.50" x2="604.35" y2="32.50" stroke="#e0e0e0" stroke-width="1" /><line x1="60.50" y1="28.50" x2="60.50" y2="432.00" stroke="#8f8f8f" stroke-width="1" /><line x1="103.50" y1="28.50" x2="103.50" y2="432.00" stroke="#8f8f8f" stroke-width="1" /><line x1="146.50" y1="28.50" x2="146.50" y2="432.00" stroke="#8f8f8f" stroke-width="1" /><line x1="189.50" y1="28.50" x2="189.50" y2="432.00" stroke="#8f8f8f" stroke-width="1" /><line x1="231.50" y1="28.50" x2="231.50" y2="432.00" stroke="#8f8f8f" stroke-width="1" /><line x1="274.50" y1="28.50" x2="274.50" y2="432.00" stroke="#8f8f8f" stroke-width="1" /><line x1="317.50" y1="28.50" x2="317.50" y2="432.00" stroke="#8f8f8f" stroke-width="1" /><line x1="360.50" y1="28.50" x2="360.50" y2="432.00" stroke="#8f8f8f" stroke-width="1" /><line x1="403.50" y1="28.50" x2="403.50" y2="432.00" stroke="#8f8f8f" stroke-width="1" /><line x1="446.50" y1="28.50" x2="446.50" y2="432.00" stroke="#8f8f8f" stroke-width="1" /><line x1="488.50" y1="28.50" x2="488.50" y2="432.00" stroke="#8f8f8f" stroke-width="1" /><line x1="531.50" y1="28.50" x2="531.50" y2="432.00" stroke="#8f8f8f" stroke-width="1" /><line x1="574.50" y1="28.50" x2="574.50" y2="432.00" stroke="#8f8f8f" stroke-width="1" /><line x1="50.50" y1="415.50" x2="604.35" y2="415.50" stroke="#8f8f8f" stroke-width="1" /><line x1="50.50" y1="335.50" x2="604.35" y2="335.50" stroke="#8f8f8f" stroke-width="1" /><line x1="50.50" y1="255.50" x2="604.35" y2="255.50" stroke="#8f8f8f" stroke-width="1" /><line x1="50.50" y1="175.50" x2="604.35" y2="175.50" stroke="#8f8f8f" stroke-width="1" /><line x1="50.50" y1="95.50" x2="604.35" y2="95.50" stroke="#8f8f8f" stroke-width="1" /><clipPath id="pc"><rect x="50.5" y="28.5" width="554.0" height="403.5"/></clipPath><g clip-path="url(#pc)"><polyline points="60.5,322.4 60.9,316.4 61.4,317.3 61.8,340.0 62.2,319.6 62.6,327.8 63.1,318.4 63.5,325.0 63.9,319.7 64.4,315.1 64.8,312.4 65.2,324.2 65.6,317.3 66.1,311.6 66.5,318.1 66.9,336.4 67.4,314.5 67.8,336.7 68.2,320.0 68.6,330.5 69.1,311.0 69.5,323.1 69.9,329.6 70.4,318.3 70.8,327.9 71.2,335.0 71.6,316.2 72.1,320.5 72.5,346.6 72.9,340.8 73.4,327.4 73.8,313.9 74.2,330.0 74.6,331.2 75.1,355.7 75.5,319.0 75.9,319.0 76.4,320.4 76.8,335.6 77.2,324.9 77.6,312.4 78.1,333.3 78.5,338.9 78.9,316.2 79.3,330.3 79.8,322.6 80.2,346.8 80.6,316.8 81.1,338.0 81.5,350.2 81.9,317.7 82.3,324.7 82.8,322.6 83.2,316.4 83.6,330.4 84.1,330.0 84.5,315.6 84.9,328.0 85.3,339.1 85.8,308.9 86.2,318.2 86.6,321.6 87.1,329.7 87.5,318.3 87.9,334.4 88.3,335.1 88.8,327.1 89.2,319.5 89.6,321.7 90.1,318.2 90.5,327.0 90.9,322.6 91.3,328.5 91.8,328.1 92.2,338.8 92.6,321.7 93.1,327.9 93.5,334.0 93.9,327.2 94.3,312.5 94.8,326.7 95.2,336.6 95.6,333.9 96.1,331.6 96.5,326.5 96.9,326.2 97.3,314.0 97.8,320.0 98.2,328.4 98.6,320.3 99.1,324.4 99.5,314.4 99.9,317.4 100.3,328.0 100.8,335.0 101.2,344.1 101.6,323.9 102.1,314.2 102.5,340.7 102.9,311.6 103.3,329.6 103.8,343.2 104.2,326.7 104.6,325.2 105.1,350.0 105.5,322.0 105.9,330.9 106.3,313.9 106.8,320.9 107.2,341.9 107.6,335.3 108.1,315.8 108.5,304.3 108.9,280.7 109.3,266.1 109.8,237.8 110.2,216.8 110.6,197.1 111.1,185.7 111.5,175.8 111.9,166.8 112.3,155.6 112.8,149.7 113.2,145.0 113.6,140.2 114.1,135.3 114.5,130.4 114.9,129.2 115.3,126.6 115.8,124.0 116.2,122.2 116.6,119.4 117.0,116.3 117.5,116.0 117.9,114.2 118.3,113.8 118.8,112.5 119.2,111.2 119.6,110.2 120.0,109.6 120.5,108.4 120.9,108.4 121.3,108.2 121.8,107.8 122.2,107.5 122.6,107.4 123.0,107.9 123.5,107.1 123.9,107.3 124.3,106.9 124.8,106.9 125.2,107.1 125.6,107.3 126.0,108.3 126.5,107.5 126.9,108.9 127.3,109.4 127.8,109.7 128.2,110.2 128.6,110.3 129.0,111.0 129.5,111.3 129.9,112.0 130.3,111.8 130.8,112.8 131.2,112.6 131.6,113.6 132.0,113.6 132.5,113.6 132.9,115.2 133.3,115.2 133.8,115.2 134.2,116.2 134.6,115.8 135.0,116.4 135.5,117.2 135.9,116.6 136.3,118.1 136.8,118.2 137.2,118.3 137.6,118.3 138.0,119.4 138.5,119.7 138.9,119.8 139.3,119.4 139.8,120.1 140.2,120.7 140.6,122.3 141.0,122.3 141.5,121.9 141.9,123.4 142.3,123.2 142.8,123.2 143.2,123.7 143.6,123.8 144.0,124.2 144.5,125.0 144.9,125.7 145.3,126.3 145.8,126.4 146.2,126.6 146.6,127.0 147.0,128.0 147.5,127.0 147.9,127.7 148.3,128.3 148.8,129.1 149.2,128.0 149.6,129.3 150.0,128.8 150.5,129.6 150.9,130.0 151.3,130.6 151.7,129.5 152.2,130.2 152.6,131.4 153.0,130.3 153.5,131.7 153.9,131.2 154.3,131.3 154.7,131.7 155.2,132.2 155.6,133.2 156.0,133.7 156.5,134.5 156.9,134.3 157.3,134.4 157.7,133.7 158.2,134.9 158.6,134.7 159.0,135.2 159.5,136.3 159.9,135.5 160.3,135.4 160.7,136.0 161.2,137.2 161.6,135.9 162.0,137.5 162.5,137.5 162.9,137.0 163.3,138.6 163.7,138.5 164.2,138.5 164.6,139.3 165.0,139.0 165.5,139.4 165.9,138.9 166.3,140.0 166.7,140.3 167.2,139.8 167.6,140.4 168.0,141.6 168.5,141.1 168.9,142.0 169.3,141.4 169.7,142.9 170.2,141.4 170.6,142.8 171.0,143.3 171.5,142.4 171.9,143.4 172.3,142.6 172.7,143.3 173.2,143.2 173.6,143.2 174.0,144.6 174.5,145.9 174.9,144.1 175.3,145.0 175.7,146.2 176.2,145.9 176.6,144.6 177.0,145.1 177.5,145.9 177.9,146.6 178.3,147.0 178.7,149.1 179.2,147.1 179.6,149.2 180.0,148.0 180.5,148.7 180.9,149.8 181.3,148.9 181.7,148.2 182.2,149.0 182.6,150.0 183.0,148.6 183.5,150.8 183.9,150.4 184.3,151.4 184.7,150.6 185.2,150.9 185.6,150.2 186.0,152.8 186.4,151.5 186.9,152.3 187.3,152.1 187.7,152.1 188.2,154.9 188.6,154.3 189.0,153.0 189.4,154.1 189.9,154.5 190.3,155.4 190.7,154.7 191.2,154.5 191.6,156.0 192.0,155.9 192.4,157.9 192.9,157.8 193.3,158.4 193.7,156.9 194.2,158.8 194.6,157.7 195.0,159.8 195.4,159.7 195.9,159.7 196.3,160.3 196.7,158.8 197.2,160.3 197.6,161.7 198.0,161.1 198.4,162.7 198.9,160.8 199.3,163.4 199.7,163.2 200.2,162.8 200.6,162.4 201.0,163.0 201.4,163.4 201.9,164.7 202.3,165.3 202.7,164.7 203.2,165.6 203.6,167.2 204.0,166.2 204.4,167.1 204.9,167.4 205.3,167.5 205.7,168.0 206.2,168.3 206.6,169.5 207.0,168.7 207.4,168.0 207.9,169.9 208.3,169.5 208.7,170.0 209.2,169.0 209.6,171.6 210.0,171.6 210.4,170.3 210.9,173.1 211.3,172.2 211.7,172.9 212.2,172.8 212.6,173.3 213.0,174.8 213.4,172.6 213.9,172.2 214.3,175.8 214.7,172.9 215.2,177.3 215.6,175.0 216.0,176.7 216.4,177.3 216.9,175.5 217.3,176.6 217.7,176.2 218.2,179.3 218.6,177.6 219.0,177.6 219.4,178.5 219.9,178.1 220.3,178.9 220.7,179.8 221.1,179.5 221.6,182.6 222.0,180.2 222.4,182.0 222.9,183.0 223.3,181.6 223.7,183.5 224.1,181.8 224.6,183.3 225.0,184.7 225.4,184.1 225.9,186.4 226.3,186.2 226.7,184.7 227.1,186.3 227.6,185.2 228.0,187.4 228.4,184.6 228.9,185.9 229.3,187.1 229.7,190.6 230.1,187.0 230.6,188.7 231.0,189.8 231.4,187.0 231.9,190.8 232.3,189.5 232.7,189.4 233.1,191.4 233.6,192.5 234.0,189.9 234.4,191.6 234.9,192.7 235.3,191.5 235.7,192.6 236.1,194.2 236.6,192.4 237.0,193.7 237.4,195.1 237.9,193.8 238.3,195.7 238.7,195.5 239.1,195.8 239.6,193.7 240.0,197.3 240.4,197.0 240.9,196.8 241.3,195.5 241.7,199.3 242.1,197.7 242.6,197.6 243.0,195.8 243.4,199.3 243.9,196.1 244.3,199.9 244.7,197.2 245.1,198.2 245.6,197.6 246.0,197.4 246.4,199.9 246.9,200.5 247.3,199.3 247.7,199.7 248.1,199.9 248.6,200.5 249.0,204.9 249.4,201.8 249.9,203.2 250.3,203.0 250.7,202.2 251.1,205.5 251.6,206.0 252.0,204.2 252.4,204.9 252.9,205.0 253.3,207.0 253.7,205.7 254.1,205.9 254.6,209.1 255.0,204.4 255.4,209.2 255.9,204.5 256.3,208.4 256.7,204.7 257.1,207.4 257.6,210.4 258.0,210.1 258.4,207.6 258.8,207.9 259.3,211.1 259.7,208.5 260.1,209.4 260.6,210.7 261.0,209.2 261.4,213.6 261.8,210.7 262.3,211.6 262.7,211.2 263.1,211.5 263.6,213.0 264.0,213.0 264.4,213.9 264.8,214.2 265.3,218.8 265.7,214.7 266.1,218.8 266.6,213.5 267.0,216.7 267.4,215.9 267.8,217.9 268.3,217.4 268.7,216.3 269.1,215.9 269.6,216.5 270.0,218.0 270.4,215.7 270.8,219.0 271.3,218.2 271.7,219.5 272.1,223.2 272.6,221.2 273.0,222.6 273.4,216.4 273.8,224.6 274.3,220.1 274.7,219.7 275.1,224.7 275.6,220.9 276.0,221.4 276.4,219.9 276.8,219.4 277.3,224.5 277.7,220.2 278.1,220.9 278.6,223.7 279.0,225.3 279.4,223.2 279.8,225.6 280.3,227.7 280.7,228.2 281.1,226.9 281.6,228.5 282.0,224.3 282.4,225.6 282.8,228.4 283.3,227.0 283.7,226.5 284.1,229.3 284.6,223.8 285.0,226.5 285.4,228.6 285.8,228.0 286.3,229.4 286.7,228.5 287.1,228.5 287.6,233.9 288.0,229.3 288.4,230.7 288.8,229.4 289.3,233.2 289.7,236.4 290.1,226.4 290.6,228.3 291.0,231.7 291.4,233.1 291.8,231.4 292.3,231.4 292.7,232.2 293.1,234.7 293.5,231.2 294.0,240.3 294.4,234.6 294.8,238.4 295.3,234.3 295.7,236.3 296.1,235.3 296.5,235.4 297.0,235.3 297.4,236.4 297.8,236.6 298.3,240.5 298.7,240.2 299.1,238.3 299.5,236.9 300.0,234.6 300.4,238.4 300.8,236.6 301.3,238.3 301.7,237.2 302.1,237.9 302.5,243.0 303.0,241.9 303.4,236.1 303.8,247.5 304.3,244.5 304.7,242.0 305.1,239.5 305.5,243.0 306.0,237.9 306.4,244.5 306.8,238.9 307.3,244.7 307.7,242.9 308.1,237.9 308.5,244.5 309.0,246.3 309.4,244.2 309.8,244.4 310.3,249.6 310.7,245.0 311.1,246.6 311.5,250.8 312.0,240.1 312.4,246.6 312.8,251.0 313.3,253.7 313.7,250.4 314.1,247.8 314.5,243.7 315.0,253.1 315.4,247.6 315.8,248.5 316.3,248.6 316.7,250.6 317.1,251.1 317.5,245.2 318.0,251.0 318.4,247.6 318.8,254.3 319.3,252.5 319.7,251.9 320.1,246.8 320.5,257.4 321.0,253.0 321.4,253.3 321.8,253.3 322.3,257.5 322.7,252.1 323.1,254.7 323.5,247.9 324.0,254.2 324.4,251.3 324.8,262.0 325.3,253.9 325.7,262.0 326.1,260.2 326.5,257.3 327.0,254.3 327.4,255.1 327.8,260.5 328.2,256.2 328.7,256.7 329.1,255.4 329.5,257.5 330.0,257.3 330.4,258.1 330.8,258.6 331.2,254.5 331.7,268.0 332.1,262.8 332.5,256.5 333.0,263.8 333.4,262.7 333.8,261.7 334.2,266.4 334.7,264.7 335.1,263.5 335.5,259.9 336.0,265.2 336.4,265.7 336.8,269.5 337.2,260.5 337.7,264.4 338.1,263.5 338.5,270.6 339.0,261.5 339.4,260.9 339.8,267.9 340.2,261.9 340.7,275.0 341.1,264.7 341.5,275.9 342.0,265.1 342.4,270.8 342.8,268.4 343.2,259.8 343.7,270.4 344.1,266.7 344.5,278.2 345.0,270.8 345.4,263.8 345.8,265.0 346.2,271.3 346.7,268.9 347.1,265.4 347.5,269.4 348.0,270.1 348.4,276.8 348.8,270.8 349.2,273.9 349.7,277.6 350.1,276.0 350.5,272.1 351.0,270.6 351.4,279.3 351.8,274.9 352.2,271.1 352.7,273.1 353.1,266.6 353.5,278.0 354.0,277.7 354.4,280.2 354.8,281.3 355.2,279.6 355.7,286.9 356.1,282.6 356.5,274.5 357.0,278.6 357.4,277.5 357.8,275.7 358.2,286.9 358.7,277.2 359.1,275.4 359.5,285.1 360.0,286.6 360.4,271.0 360.8,277.7 361.2,278.2 361.7,284.4 362.1,280.8 362.5,282.3 363.0,285.4 363.4,291.7 363.8,277.1 364.2,278.0 364.7,274.3 365.1,283.6 365.5,285.8 365.9,278.7 366.4,276.0 366.8,279.7 367.2,288.0 367.7,278.4 368.1,294.4 368.5,276.8 368.9,277.8 369.4,278.7 369.8,289.0 370.2,281.2 370.7,278.6 371.1,288.0 371.5,281.3 371.9,288.4 372.4,298.4 372.8,282.3 373.2,293.8 373.7,286.3 374.1,286.3 374.5,284.4 374.9,295.4 375.4,293.1 375.8,285.7 376.2,298.5 376.7,283.3 377.1,292.7 377.5,289.0 377.9,295.1 378.4,290.2 378.8,301.8 379.2,292.2 379.7,294.5 380.1,288.8 380.5,289.3 380.9,296.3 381.4,289.4 381.8,291.6 382.2,291.4 382.7,293.8 383.1,294.6 383.5,291.9 383.9,285.8 384.4,301.6 384.8,290.5 385.2,292.4 385.7,293.7 386.1,292.9 386.5,285.1 386.9,299.0 387.4,282.9 387.8,293.4 388.2,296.2 388.7,289.2 389.1,292.5 389.5,291.3 389.9,287.1 390.4,301.8 390.8,287.4 391.2,286.9 391.7,290.8 392.1,284.8 392.5,294.3 392.9,288.5 393.4,287.9 393.8,305.0 394.2,293.4 394.7,294.1 395.1,303.9 395.5,297.0 395.9,309.4 396.4,314.7 396.8,305.6 397.2,305.8 397.7,298.1 398.1,294.9 398.5,295.8 398.9,299.0 399.4,311.6 399.8,294.1 400.2,308.6 400.6,302.1 401.1,296.9 401.5,293.1 401.9,295.0 402.4,300.2 402.8,290.2 403.2,303.2 403.6,294.9 404.1,299.2 404.5,310.9 404.9,306.0 405.4,295.9 405.8,297.9 406.2,294.4 406.6,294.9 407.1,295.3 407.5,291.4 407.9,304.7 408.4,290.2 408.8,297.0 409.2,303.9 409.6,309.0 410.1,299.8 410.5,301.5 410.9,298.0 411.4,302.5 411.8,296.7 412.2,299.5 412.6,299.0 413.1,300.5 413.5,305.7 413.9,316.0 414.4,292.5 414.8,310.7 415.2,295.9 415.6,301.8 416.1,320.2 416.5,307.3 416.9,304.9 417.4,307.6 417.8,299.9 418.2,295.5 418.6,300.6 419.1,308.8 419.5,310.3 419.9,317.6 420.4,302.4 420.8,321.6 421.2,313.5 421.6,294.7 422.1,317.5 422.5,304.9 422.9,301.9 423.4,301.2 423.8,301.5 424.2,304.0 424.6,306.7 425.1,295.3 425.5,298.6 425.9,303.2 426.4,307.3 426.8,320.6 427.2,303.6 427.6,299.0 428.1,298.0 428.5,309.0 428.9,302.4 429.4,309.4 429.8,314.7 430.2,307.9 430.6,311.1 431.1,303.0 431.5,301.6 431.9,321.4 432.4,307.0 432.8,298.9 433.2,302.9 433.6,326.5 434.1,302.5 434.5,316.2 434.9,299.6 435.4,296.8 435.8,305.1 436.2,306.0 436.6,328.2 437.1,309.9 437.5,321.5 437.9,303.1 438.3,297.4 438.8,308.3 439.2,301.8 439.6,315.2 440.1,310.3 440.5,315.5 440.9,310.5 441.3,304.7 441.8,319.3 442.2,311.8 442.6,310.5 443.1,299.2 443.5,305.5 443.9,319.3 444.3,302.3 444.8,314.6 445.2,320.0 445.6,305.1 446.1,301.1 446.5,313.1 446.9,317.0 447.3,302.5 447.8,303.7 448.2,313.6 448.6,310.1 449.1,305.0 449.5,310.4 449.9,320.2 450.3,306.5 450.8,305.5 451.2,317.5 451.6,310.7 452.1,314.0 452.5,322.0 452.9,316.6 453.3,310.8 453.8,316.4 454.2,303.6 454.6,319.1 455.1,304.4 455.5,313.5 455.9,308.8 456.3,316.0 456.8,307.5 457.2,300.5 457.6,328.8 458.1,311.9 458.5,315.3 458.9,315.9 459.3,312.2 459.8,302.6 460.2,323.8 460.6,300.1 461.1,320.0 461.5,310.1 461.9,313.4 462.3,303.5 462.8,319.1 463.2,314.3 463.6,327.1 464.1,307.3 464.5,326.5 464.9,312.6 465.3,317.3 465.8,319.4 466.2,322.7 466.6,305.4 467.1,305.9 467.5,310.9 467.9,307.9 468.3,327.0 468.8,311.2 469.2,309.0 469.6,302.1 470.1,319.4 470.5,317.9 470.9,321.6 471.3,303.0 471.8,331.0 472.2,308.0 472.6,307.0 473.0,308.7 473.5,325.0 473.9,309.3 474.3,305.1 474.8,301.5 475.2,316.6 475.6,309.4 476.0,320.3 476.5,300.9 476.9,306.0 477.3,304.8 477.8,318.1 478.2,310.1 478.6,332.7 479.0,304.9 479.5,323.8 479.9,320.6 480.3,302.1 480.8,310.8 481.2,315.1 481.6,309.2 482.0,305.8 482.5,317.8 482.9,316.0 483.3,307.9 483.8,301.5 484.2,311.2 484.6,304.9 485.0,308.6 485.5,316.8 485.9,309.5 486.3,303.7 486.8,327.7 487.2,332.0 487.6,315.2 488.0,322.8 488.5,306.2 488.9,312.3 489.3,307.0 489.8,317.4 490.2,319.7 490.6,317.0 491.0,316.7 491.5,330.1 491.9,318.1 492.3,317.4 492.8,319.0 493.2,303.9 493.6,308.6 494.0,310.2 494.5,328.6 494.9,309.5 495.3,305.4 495.8,334.1 496.2,312.3 496.6,314.9 497.0,310.1 497.5,322.0 497.9,311.7 498.3,314.6 498.8,325.2 499.2,340.9 499.6,316.8 500.0,333.9 500.5,320.2 500.9,326.1 501.3,310.7 501.8,307.4 502.2,309.9 502.6,312.8 503.0,313.4 503.5,317.8 503.9,312.4 504.3,314.0 504.8,319.2 505.2,313.2 505.6,319.4 506.0,309.3 506.5,328.0 506.9,316.3 507.3,327.2 507.7,310.8 508.2,303.5 508.6,309.4 509.0,323.9 509.5,332.6 509.9,313.9 510.3,311.4 510.7,323.9 511.2,340.2 511.6,309.5 512.0,312.2 512.5,312.8 512.9,314.6 513.3,313.1 513.7,330.3 514.2,307.0 514.6,313.1 515.0,316.9 515.5,311.4 515.9,326.1 516.3,309.9 516.7,322.4 517.2,317.2 517.6,308.9 518.0,320.6 518.5,334.1 518.9,315.0 519.3,328.1 519.7,314.8 520.2,335.1 520.6,315.6 521.0,313.1 521.5,316.9 521.9,314.8 522.3,312.8 522.7,315.9 523.2,323.4 523.6,322.9 524.0,308.8 524.5,323.9 524.9,325.9 525.3,305.3 525.7,318.7 526.2,314.1 526.6,311.4 527.0,307.7 527.5,315.4 527.9,319.8 528.3,320.0 528.7,323.2 529.2,314.2 529.6,316.5 530.0,321.3 530.5,315.7 530.9,319.3 531.3,319.6 531.7,320.4 532.2,323.7 532.6,315.0 533.0,326.9 533.5,312.8 533.9,333.1 534.3,321.2 534.7,326.1 535.2,333.7 535.6,318.7 536.0,308.9 536.5,316.9 536.9,338.6 537.3,326.3 537.7,317.1 538.2,318.4 538.6,343.7 539.0,330.8 539.5,319.3 539.9,320.9 540.3,322.7 540.7,312.9 541.2,303.3 541.6,316.8 542.0,307.1 542.5,319.6 542.9,306.1 543.3,319.8 543.7,315.6 544.2,320.9 544.6,304.5 545.0,318.4 545.4,325.6 545.9,316.3 546.3,334.5 546.7,308.1 547.2,338.5 547.6,313.4 548.0,327.4 548.4,326.8 548.9,318.0 549.3,325.2 549.7,332.1 550.2,311.4 550.6,322.2 551.0,309.4 551.4,317.6 551.9,323.2 552.3,325.6 552.7,315.0 553.2,321.0 553.6,327.6 554.0,317.6 554.4,312.9 554.9,313.0 555.3,308.0 555.7,315.4 556.2,332.2 556.6,337.9 557.0,320.9 557.4,336.1 557.9,322.7 558.3,341.0 558.7,308.3 559.2,326.3 559.6,314.6 560.0,315.9 560.4,310.7 560.9,311.9 561.3,315.8 561.7,333.9 562.2,335.3 562.6,320.8 563.0,329.4 563.4,320.1 563.9,323.1 564.3,318.9 564.7,322.8 565.2,304.1 565.6,315.4 566.0,320.6 566.4,315.0 566.9,314.5 567.3,331.0 567.7,334.4 568.2,320.7 568.6,326.1 569.0,310.9 569.4,332.7 569.9,319.2 570.3,318.7 570.7,307.2 571.2,318.3 571.6,319.1 572.0,316.3 572.4,320.8 572.9,326.5 573.3,331.3 573.7,325.8 574.2,308.8 574.6,325.6 575.0,315.8 575.4,315.4 575.9,305.6 576.3,316.3 576.7,327.0 577.2,324.0 577.6,347.4 578.0,320.3 578.4,330.6 578.9,307.3 579.3,309.4 579.7,313.5 580.1,323.6 580.6,319.1 581.0,337.7 581.4,323.0 581.9,345.8 582.3,318.6 582.7,325.2 583.1,339.3 583.6,315.5 584.0,316.6 584.4,318.6 584.9,319.6 585.3,317.8 585.7,329.2 586.1,314.3 586.6,318.0 587.0,315.5 587.4,330.0 587.9,323.4 588.3,328.6 588.7,331.3 589.1,330.6 589.6,322.1 590.0,314.2 590.4,339.8 590.9,328.3 591.3,319.9 591.7,316.7 592.1,335.8 592.6,312.6 593.0,334.2 593.4,328.5 593.9,314.8 594.3,317.2 594.7,327.3 595.1,313.8 595.6,314.4 596.0,377.0" fill="none" stroke="#a6f0a6" stroke-width="1" stroke-linejoin="round" /><line x1="50.5" y1="271.4" x2="604.5" y2="271.4" stroke="#ff9c9c" stroke-width="2"/><polyline points="60.5,280.2 60.9,270.4 61.4,265.4 61.8,277.4 62.2,271.4 62.6,281.5 63.1,273.1 63.5,270.9 63.9,275.7 64.4,273.5 64.8,270.4 65.2,271.8 65.6,265.5 66.1,268.9 66.5,268.0 66.9,272.2 67.4,272.5 67.8,284.2 68.2,272.8 68.6,278.2 69.1,273.3 69.5,269.5 69.9,269.8 70.4,270.6 70.8,265.8 71.2,271.6 71.6,282.8 72.1,282.4 72.5,279.9 72.9,276.8 73.4,273.3 73.8,269.3 74.2,272.4 74.6,272.1 75.1,277.6 75.5,267.8 75.9,275.3 76.4,273.4 76.8,277.6 77.2,271.7 77.6,276.5 78.1,271.0 78.5,278.7 78.9,272.3 79.3,268.3 79.8,267.4 80.2,268.8 80.6,280.2 81.1,284.4 81.5,274.7 81.9,277.0 82.3,272.8 82.8,265.5 83.2,280.6 83.6,266.9 84.1,279.1 84.5,264.0 84.9,274.3 85.3,267.6 85.8,274.2 86.2,269.0 86.6,266.5 87.1,269.4 87.5,267.9 87.9,274.0 88.3,266.2 88.8,276.1 89.2,263.2 89.6,273.0 90.1,280.3 90.5,270.3 90.9,272.1 91.3,275.7 91.8,270.8 92.2,267.9 92.6,284.5 93.1,269.9 93.5,285.0 93.9,273.9 94.3,278.3 94.8,278.8 95.2,272.5 95.6,277.4 96.1,272.9 96.5,279.3 96.9,271.2 97.3,274.3 97.8,278.5 98.2,274.3 98.6,275.9 99.1,273.1 99.5,283.1 99.9,263.7 100.3,274.8 100.8,274.5 101.2,273.3 101.6,275.8 102.1,265.2 102.5,275.7 102.9,272.8 103.3,267.7 103.8,268.9 104.2,268.4 104.6,280.7 105.1,278.0 105.5,277.8 105.9,279.1 106.3,271.1 106.8,273.5 107.2,274.7 107.6,271.4 108.1,271.9 108.5,258.8 108.9,225.9 109.3,204.7 109.8,175.3 110.2,153.5 110.6,135.7 111.1,120.0 111.5,109.1 111.9,97.7 112.3,86.7 112.8,82.2 113.2,77.0 113.6,72.2 114.1,67.6 114.5,62.8 114.9,60.3 115.3,58.2 115.8,55.8 116.2,53.0 116.6,50.5 117.0,48.2 117.5,46.2 117.9,45.5 118.3,44.2 118.8,43.4 119.2,42.0 119.6,40.9 120.0,40.0 120.5,38.9 120.9,38.6 121.3,38.5 121.8,38.6 122.2,38.5 122.6,38.1 123.0,38.1 123.5,37.7 123.9,37.9 124.3,37.9 124.8,38.6 125.2,38.4 125.6,39.2 126.0,39.4 126.5,39.3 126.9,40.2 127.3,40.3 127.8,41.1 128.2,41.5 128.6,41.8 129.0,42.3 129.5,42.9 129.9,43.4 130.3,44.1 130.8,44.7 131.2,44.8 131.6,45.2 132.0,45.9 132.5,46.2 132.9,46.8 133.3,47.5 133.8,47.5 134.2,47.7 134.6,48.0 135.0,49.1 135.5,49.3 135.9,49.7 136.3,50.3 136.8,50.9 137.2,51.4 137.6,51.5 138.0,52.3 138.5,52.7 138.9,52.9 139.3,53.4 139.8,54.4 140.2,54.7 140.6,55.1 141.0,55.5 141.5,55.9 141.9,56.7 142.3,56.5 142.8,56.8 143.2,57.6 143.6,58.2 144.0,58.5 144.5,59.2 144.9,59.4 145.3,59.9 145.8,60.3 146.2,61.0 146.6,61.1 147.0,61.6 147.5,62.6 147.9,62.6 148.3,62.7 148.8,63.6 149.2,64.4 149.6,64.1 150.0,64.8 150.5,65.2 150.9,65.6 151.3,66.0 151.7,66.5 152.2,66.9 152.6,67.7 153.0,67.6 153.5,68.1 153.9,68.6 154.3,68.7 154.7,69.1 155.2,69.9 155.6,70.4 156.0,70.3 156.5,71.5 156.9,71.7 157.3,71.6 157.7,72.3 158.2,72.7 158.6,73.5 159.0,73.2 159.5,74.1 159.9,74.7 160.3,74.7 160.7,75.0 161.2,75.5 161.6,76.0 162.0,76.5 162.5,77.1 162.9,77.0 163.3,78.3 163.7,78.3 164.2,78.4 164.6,78.8 165.0,79.9 165.5,79.8 165.9,80.0 166.3,80.5 166.7,80.6 167.2,81.6 167.6,82.2 168.0,82.5 168.5,82.4 168.9,83.0 169.3,83.5 169.7,84.5 170.2,84.3 170.6,84.8 171.0,85.7 171.5,85.7 171.9,86.4 172.3,86.1 172.7,87.0 173.2,86.5 173.6,87.7 174.0,87.8 174.5,89.1 174.9,88.3 175.3,89.5 175.7,90.0 176.2,89.9 176.6,90.1 177.0,91.4 177.5,91.4 177.9,91.6 178.3,92.0 178.7,93.2 179.2,92.9 179.6,93.3 180.0,93.3 180.5,93.7 180.9,94.9 181.3,95.6 181.7,95.3 182.2,95.5 182.6,96.1 183.0,97.0 183.5,96.8 183.9,97.9 184.3,98.3 184.7,98.2 185.2,98.3 185.6,99.6 186.0,99.6 186.4,100.3 186.9,100.1 187.3,100.8 187.7,101.0 188.2,101.9 188.6,101.3 189.0,102.0 189.4,102.8 189.9,103.5 190.3,103.6 190.7,104.7 191.2,104.0 191.6,104.7 192.0,105.2 192.4,105.2 192.9,106.1 193.3,106.1 193.7,106.6 194.2,107.0 194.6,108.2 195.0,108.7 195.4,108.8 195.9,108.7 196.3,109.6 196.7,110.0 197.2,109.3 197.6,109.6 198.0,111.4 198.4,111.6 198.9,111.7 199.3,111.7 199.7,113.3 200.2,113.2 200.6,113.8 201.0,113.3 201.4,114.4 201.9,113.7 202.3,115.0 202.7,115.7 203.2,115.4 203.6,115.6 204.0,116.5 204.4,115.9 204.9,117.7 205.3,116.2 205.7,117.8 206.2,117.6 206.6,119.4 207.0,120.0 207.4,119.2 207.9,120.1 208.3,120.2 208.7,120.5 209.2,120.7 209.6,121.2 210.0,121.6 210.4,121.9 210.9,121.5 211.3,122.0 211.7,122.9 212.2,124.7 212.6,124.0 213.0,124.0 213.4,124.7 213.9,124.9 214.3,125.3 214.7,125.9 215.2,126.4 215.6,126.6 216.0,128.1 216.4,126.4 216.9,127.6 217.3,128.3 217.7,127.9 218.2,128.1 218.6,129.5 219.0,129.3 219.4,130.9 219.9,129.4 220.3,131.1 220.7,130.6 221.1,131.5 221.6,130.8 222.0,132.3 222.4,132.6 222.9,132.7 223.3,134.1 223.7,134.0 224.1,133.4 224.6,135.4 225.0,135.6 225.4,134.9 225.9,135.2 226.3,136.8 226.7,136.6 227.1,137.2 227.6,137.8 228.0,137.6 228.4,138.6 228.9,139.0 229.3,139.2 229.7,140.9 230.1,139.2 230.6,141.2 231.0,139.4 231.4,141.2 231.9,140.6 232.3,141.8 232.7,141.2 233.1,142.6 233.6,142.7 234.0,144.5 234.4,143.3 234.9,143.8 235.3,144.4 235.7,144.1 236.1,145.4 236.6,144.7 237.0,145.1 237.4,145.7 237.9,147.1 238.3,146.8 238.7,147.5 239.1,146.5 239.6,148.7 240.0,148.7 240.4,148.9 240.9,149.4 241.3,147.9 241.7,149.7 242.1,150.8 242.6,150.4 243.0,149.3 243.4,150.5 243.9,152.1 244.3,151.1 244.7,152.8 245.1,152.2 245.6,152.7 246.0,152.6 246.4,154.1 246.9,152.9 247.3,154.5 247.7,153.9 248.1,154.5 248.6,153.3 249.0,157.2 249.4,155.5 249.9,155.1 250.3,155.6 250.7,156.3 251.1,158.3 251.6,157.0 252.0,160.0 252.4,159.6 252.9,160.0 253.3,157.2 253.7,160.2 254.1,159.4 254.6,160.9 255.0,159.3 255.4,160.9 255.9,161.6 256.3,161.5 256.7,162.1 257.1,161.9 257.6,163.4 258.0,162.4 258.4,163.1 258.8,163.4 259.3,164.6 259.7,165.2 260.1,164.8 260.6,166.9 261.0,163.2 261.4,167.0 261.8,165.5 262.3,165.9 262.7,165.9 263.1,166.6 263.6,168.5 264.0,167.7 264.4,167.4 264.8,168.0 265.3,169.5 265.7,166.9 266.1,170.0 266.6,169.0 267.0,170.8 267.4,168.2 267.8,171.4 268.3,171.1 268.7,173.5 269.1,172.7 269.6,171.5 270.0,172.1 270.4,172.6 270.8,173.9 271.3,173.2 271.7,175.4 272.1,175.3 272.6,172.4 273.0,173.2 273.4,176.5 273.8,175.7 274.3,175.8 274.7,177.0 275.1,176.2 275.6,178.0 276.0,176.5 276.4,178.1 276.8,179.2 277.3,179.2 277.7,177.2 278.1,180.4 278.6,180.1 279.0,182.1 279.4,179.8 279.8,181.3 280.3,179.0 280.7,183.7 281.1,179.7 281.6,184.2 282.0,180.4 282.4,180.7 282.8,179.7 283.3,182.4 283.7,182.4 284.1,183.4 284.6,186.1 285.0,182.6 285.4,182.6 285.8,187.6 286.3,187.7 286.7,184.8 287.1,187.5 287.6,184.6 288.0,185.4 288.4,187.9 288.8,186.5 289.3,186.7 289.7,187.7 290.1,187.7 290.6,188.3 291.0,190.3 291.4,189.9 291.8,188.0 292.3,190.7 292.7,189.7 293.1,190.2 293.5,191.3 294.0,189.7 294.4,190.3 294.8,190.4 295.3,190.7 295.7,192.1 296.1,192.2 296.5,193.1 297.0,193.4 297.4,194.0 297.8,193.2 298.3,194.2 298.7,195.5 299.1,194.5 299.5,193.4 300.0,193.7 300.4,194.6 300.8,193.8 301.3,194.5 301.7,195.4 302.1,198.9 302.5,194.7 303.0,199.1 303.4,197.3 303.8,197.5 304.3,199.1 304.7,201.8 305.1,199.0 305.5,202.6 306.0,200.4 306.4,200.4 306.8,201.1 307.3,198.9 307.7,200.3 308.1,203.0 308.5,203.0 309.0,206.2 309.4,202.8 309.8,202.9 310.3,201.1 310.7,201.6 311.1,204.5 311.5,202.3 312.0,205.7 312.4,205.3 312.8,205.7 313.3,205.2 313.7,207.5 314.1,203.9 314.5,207.0 315.0,203.0 315.4,205.9 315.8,203.5 316.3,207.8 316.7,208.1 317.1,209.9 317.5,210.4 318.0,208.4 318.4,210.8 318.8,208.7 319.3,205.8 319.7,210.1 320.1,211.6 320.5,210.4 321.0,209.3 321.4,209.5 321.8,209.6 322.3,211.5 322.7,213.1 323.1,210.1 323.5,216.1 324.0,211.3 324.4,210.3 324.8,211.7 325.3,209.0 325.7,211.4 326.1,213.6 326.5,210.5 327.0,211.3 327.4,212.3 327.8,213.4 328.2,216.3 328.7,216.6 329.1,214.7 329.5,214.5 330.0,216.3 330.4,216.4 330.8,213.8 331.2,217.7 331.7,219.6 332.1,218.9 332.5,214.6 333.0,214.2 333.4,220.7 333.8,222.7 334.2,217.0 334.7,222.2 335.1,223.6 335.5,215.9 336.0,219.0 336.4,222.3 336.8,216.7 337.2,222.7 337.7,218.2 338.1,218.0 338.5,221.7 339.0,218.7 339.4,220.5 339.8,222.7 340.2,222.3 340.7,220.8 341.1,222.5 341.5,224.6 342.0,223.4 342.4,225.1 342.8,226.5 343.2,224.5 343.7,227.6 344.1,220.7 344.5,224.8 345.0,225.3 345.4,228.6 345.8,225.7 346.2,228.2 346.7,226.5 347.1,226.7 347.5,224.9 348.0,225.1 348.4,227.5 348.8,229.7 349.2,224.6 349.7,227.7 350.1,229.3 350.5,225.4 351.0,230.6 351.4,228.3 351.8,226.3 352.2,229.2 352.7,225.3 353.1,229.5 353.5,233.2 354.0,233.2 354.4,228.8 354.8,232.3 355.2,234.1 355.7,233.5 356.1,235.2 356.5,235.1 357.0,235.7 357.4,230.8 357.8,226.9 358.2,230.3 358.7,239.1 359.1,229.7 359.5,234.2 360.0,240.5 360.4,232.5 360.8,237.7 361.2,233.9 361.7,238.4 362.1,234.6 362.5,233.2 363.0,232.4 363.4,232.0 363.8,237.7 364.2,239.4 364.7,235.9 365.1,239.6 365.5,237.2 365.9,238.2 366.4,235.7 366.8,234.6 367.2,241.6 367.7,234.2 368.1,234.8 368.5,236.2 368.9,234.5 369.4,239.6 369.8,236.1 370.2,243.7 370.7,238.4 371.1,240.1 371.5,242.5 371.9,245.6 372.4,244.7 372.8,239.6 373.2,238.4 373.7,240.4 374.1,245.4 374.5,247.4 374.9,241.6 375.4,245.5 375.8,238.7 376.2,238.9 376.7,241.0 377.1,242.4 377.5,244.2 377.9,243.2 378.4,247.9 378.8,242.6 379.2,245.8 379.7,239.7 380.1,251.6 380.5,238.4 380.9,243.6 381.4,245.1 381.8,247.7 382.2,240.7 382.7,245.8 383.1,244.0 383.5,246.3 383.9,245.3 384.4,246.3 384.8,244.9 385.2,248.0 385.7,248.7 386.1,245.6 386.5,246.0 386.9,248.3 387.4,252.9 387.8,248.9 388.2,250.6 388.7,246.4 389.1,249.3 389.5,249.8 389.9,247.4 390.4,244.1 390.8,247.2 391.2,249.5 391.7,246.7 392.1,249.0 392.5,244.7 392.9,246.2 393.4,255.0 393.8,259.2 394.2,251.3 394.7,250.5 395.1,250.1 395.5,255.6 395.9,254.5 396.4,247.4 396.8,259.1 397.2,256.7 397.7,249.8 398.1,252.0 398.5,250.8 398.9,248.4 399.4,251.1 399.8,247.6 400.2,251.2 400.6,252.9 401.1,252.0 401.5,249.2 401.9,258.7 402.4,247.5 402.8,248.8 403.2,255.0 403.6,255.3 404.1,257.8 404.5,251.0 404.9,255.6 405.4,249.2 405.8,259.9 406.2,254.5 406.6,250.6 407.1,250.9 407.5,251.4 407.9,256.0 408.4,253.8 408.8,255.4 409.2,251.6 409.6,248.5 410.1,255.4 410.5,256.4 410.9,260.3 411.4,248.6 411.8,255.9 412.2,256.3 412.6,248.9 413.1,247.6 413.5,254.8 413.9,262.0 414.4,255.3 414.8,257.6 415.2,253.6 415.6,259.4 416.1,255.8 416.5,259.8 416.9,253.2 417.4,257.6 417.8,255.1 418.2,254.4 418.6,261.4 419.1,258.7 419.5,251.0 419.9,254.8 420.4,253.2 420.8,257.7 421.2,258.5 421.6,256.0 422.1,255.8 422.5,258.2 422.9,256.8 423.4,255.4 423.8,259.5 424.2,264.9 424.6,262.1 425.1,262.7 425.5,257.9 425.9,254.5 426.4,258.9 426.8,258.3 427.2,266.5 427.6,260.6 428.1,263.5 428.5,258.8 428.9,256.5 429.4,258.8 429.8,255.7 430.2,258.0 430.6,256.4 431.1,254.3 431.5,263.2 431.9,260.1 432.4,253.7 432.8,256.3 433.2,261.2 433.6,257.2 434.1,263.1 434.5,253.5 434.9,264.9 435.4,257.5 435.8,254.8 436.2,263.8 436.6,262.4 437.1,265.6 437.5,254.8 437.9,268.5 438.3,262.2 438.8,263.7 439.2,268.0 439.6,261.6 440.1,256.7 440.5,266.5 440.9,258.8 441.3,261.7 441.8,266.4 442.2,261.6 442.6,256.8 443.1,260.3 443.5,266.4 443.9,258.2 444.3,259.9 444.8,256.6 445.2,255.9 445.6,257.9 446.1,262.6 446.5,268.7 446.9,263.2 447.3,266.8 447.8,267.8 448.2,258.7 448.6,266.0 449.1,261.9 449.5,260.2 449.9,262.5 450.3,259.1 450.8,260.0 451.2,256.9 451.6,261.1 452.1,263.5 452.5,270.7 452.9,257.2 453.3,266.4 453.8,262.9 454.2,265.7 454.6,264.7 455.1,261.3 455.5,257.4 455.9,266.9 456.3,266.3 456.8,264.6 457.2,267.0 457.6,264.2 458.1,266.3 458.5,263.1 458.9,262.5 459.3,266.5 459.8,262.8 460.2,263.0 460.6,272.4 461.1,262.6 461.5,266.1 461.9,268.1 462.3,263.3 462.8,269.1 463.2,268.1 463.6,263.6 464.1,266.5 464.5,267.7 464.9,268.4 465.3,260.2 465.8,267.2 466.2,265.9 466.6,271.9 467.1,260.6 467.5,256.3 467.9,265.4 468.3,267.4 468.8,259.5 469.2,260.3 469.6,271.3 470.1,261.9 470.5,257.1 470.9,265.5 471.3,262.4 471.8,264.1 472.2,266.9 472.6,267.1 473.0,265.8 473.5,265.9 473.9,268.5 474.3,268.1 474.8,266.6 475.2,266.7 475.6,262.3 476.0,261.0 476.5,268.9 476.9,270.7 477.3,263.9 477.8,260.0 478.2,265.8 478.6,270.2 479.0,264.9 479.5,266.5 479.9,268.7 480.3,271.2 480.8,268.1 481.2,269.6 481.6,259.0 482.0,262.8 482.5,264.5 482.9,274.8 483.3,268.0 483.8,265.0 484.2,261.9 484.6,268.5 485.0,265.8 485.5,276.8 485.9,268.7 486.3,265.4 486.8,266.8 487.2,264.1 487.6,270.3 488.0,264.0 488.5,265.0 488.9,270.2 489.3,265.0 489.8,270.6 490.2,265.7 490.6,268.0 491.0,267.9 491.5,265.7 491.9,268.1 492.3,268.0 492.8,261.5 493.2,264.3 493.6,276.2 494.0,267.3 494.5,267.6 494.9,269.2 495.3,270.1 495.8,276.3 496.2,267.6 496.6,268.5 497.0,265.2 497.5,267.0 497.9,276.3 498.3,261.7 498.8,265.6 499.2,263.5 499.6,267.6 500.0,261.5 500.5,264.7 500.9,278.0 501.3,265.7 501.8,266.5 502.2,266.8 502.6,275.6 503.0,274.9 503.5,272.9 503.9,274.5 504.3,265.1 504.8,269.5 505.2,267.0 505.6,272.0 506.0,269.4 506.5,269.9 506.9,270.3 507.3,261.3 507.7,265.7 508.2,265.6 508.6,267.2 509.0,275.7 509.5,276.1 509.9,278.1 510.3,268.3 510.7,261.5 511.2,267.7 511.6,276.2 512.0,274.3 512.5,270.4 512.9,271.0 513.3,264.9 513.7,261.4 514.2,276.8 514.6,267.1 515.0,269.8 515.5,264.6 515.9,273.7 516.3,274.2 516.7,263.1 517.2,276.2 517.6,268.4 518.0,277.2 518.5,269.1 518.9,266.1 519.3,273.5 519.7,278.0 520.2,270.9 520.6,276.0 521.0,276.3 521.5,270.1 521.9,280.0 522.3,270.4 522.7,272.2 523.2,272.4 523.6,272.5 524.0,262.0 524.5,275.0 524.9,264.7 525.3,266.1 525.7,276.4 526.2,271.3 526.6,269.2 527.0,264.5 527.5,266.6 527.9,267.5 528.3,267.8 528.7,278.8 529.2,263.0 529.6,278.7 530.0,274.2 530.5,266.9 530.9,278.6 531.3,277.7 531.7,266.4 532.2,269.1 532.6,268.1 533.0,268.2 533.5,272.9 533.9,270.9 534.3,279.1 534.7,267.4 535.2,268.4 535.6,268.8 536.0,272.0 536.5,274.1 536.9,273.1 537.3,275.4 537.7,269.1 538.2,277.5 538.6,262.2 539.0,276.5 539.5,265.0 539.9,267.1 540.3,265.9 540.7,276.2 541.2,272.0 541.6,274.7 542.0,278.7 542.5,269.2 542.9,271.8 543.3,267.0 543.7,267.1 544.2,272.5 544.6,268.7 545.0,266.2 545.4,270.5 545.9,270.7 546.3,267.7 546.7,273.6 547.2,275.1 547.6,265.7 548.0,265.4 548.4,272.9 548.9,271.9 549.3,271.6 549.7,277.2 550.2,274.2 550.6,269.4 551.0,268.5 551.4,273.3 551.9,268.7 552.3,270.9 552.7,272.4 553.2,273.0 553.6,265.9 554.0,272.3 554.4,275.8 554.9,270.9 555.3,275.7 555.7,263.2 556.2,274.4 556.6,279.7 557.0,277.4 557.4,263.9 557.9,279.0 558.3,274.0 558.7,269.7 559.2,272.4 559.6,266.0 560.0,276.0 560.4,271.2 560.9,269.6 561.3,266.1 561.7,267.4 562.2,275.4 562.6,266.8 563.0,282.5 563.4,275.8 563.9,278.2 564.3,281.8 564.7,280.9 565.2,272.4 565.6,280.2 566.0,269.6 566.4,271.5 566.9,269.9 567.3,271.0 567.7,270.4 568.2,276.6 568.6,267.3 569.0,269.9 569.4,268.6 569.9,268.5 570.3,271.0 570.7,267.9 571.2,262.7 571.6,271.6 572.0,273.7 572.4,270.2 572.9,282.4 573.3,278.3 573.7,273.5 574.2,274.7 574.6,276.8 575.0,270.8 575.4,281.2 575.9,279.8 576.3,272.2 576.7,275.3 577.2,282.1 577.6,273.2 578.0,271.7 578.4,262.6 578.9,283.2 579.3,276.0 579.7,275.1 580.1,273.0 580.6,281.0 581.0,277.4 581.4,264.7 581.9,269.2 582.3,270.8 582.7,274.1 583.1,270.1 583.6,270.7 584.0,271.0 584.4,273.3 584.9,274.5 585.3,268.7 585.7,276.8 586.1,277.5 586.6,266.8 587.0,268.9 587.4,265.6 587.9,276.5 588.3,266.1 588.7,271.5 589.1,274.5 589.6,275.8 590.0,282.2 590.4,270.3 590.9,270.6 591.3,271.2 591.7,272.7 592.1,274.6 592.6,268.4 593.0,276.8 593.4,264.0 593.9,276.5 594.3,273.4 594.7,264.2 595.1,270.5 595.6,266.7 596.0,302.0" fill="none" stroke="#ff9c9c" stroke-width="2" stroke-linejoin="round" /></g><line x1="60.50" y1="28.50" x2="60.50" y2="32.50" stroke="#000" stroke-width="1" /><line x1="60.50" y1="432.00" x2="60.50" y2="428.00" stroke="#000" stroke-width="1" /><line x1="71.50" y1="28.50" x2="71.50" y2="30.50" stroke="#000" stroke-width="1" /><line x1="71.50" y1="432.00" x2="71.50" y2="430.00" stroke="#000" stroke-width="1" /><line x1="81.50" y1="28.50" x2="81.50" y2="30.50" stroke="#000" stroke-width="1" /><line x1="81.50" y1="432.00" x2="81.50" y2="430.00" stroke="#000" stroke-width="1" /><line x1="92.50" y1="28.50" x2="92.50" y2="30.50" stroke="#000" stroke-width="1" /><line x1="92.50" y1="432.00" x2="92.50" y2="430.00" stroke="#000" stroke-width="1" /><line x1="103.50" y1="28.50" x2="103.50" y2="32.50" stroke="#000" stroke-width="1" /><line x1="103.50" y1="432.00" x2="103.50" y2="428.00" stroke="#000" stroke-width="1" /><line x1="114.50" y1="28.50" x2="114.50" y2="30.50" stroke="#000" stroke-width="1" /><line x1="114.50" y1="432.00" x2="114.50" y2="430.00" stroke="#000" stroke-width="1" /><line x1="124.50" y1="28.50" x2="124.50" y2="30.50" stroke="#000" stroke-width="1" /><line x1="124.50" y1="432.00" x2="124.50" y2="430.00" stroke="#000" stroke-width="1" /><line x1="135.50" y1="28.50" x2="135.50" y2="30.50" stroke="#000" stroke-width="1" /><line x1="135.50" y1="432.00" x2="135.50" y2="430.00" stroke="#000" stroke-width="1" /><line x1="146.50" y1="28.50" x2="146.50" y2="32.50" stroke="#000" stroke-width="1" /><line x1="146.50" y1="432.00" x2="146.50" y2="428.00" stroke="#000" stroke-width="1" /><line x1="156.50" y1="28.50" x2="156.50" y2="30.50" stroke="#000" stroke-width="1" /><line x1="156.50" y1="432.00" x2="156.50" y2="430.00" stroke="#000" stroke-width="1" /><line x1="167.50" y1="28.50" x2="167.50" y2="30.50" stroke="#000" stroke-width="1" /><line x1="167.50" y1="432.00" x2="167.50" y2="430.00" stroke="#000" stroke-width="1" /><line x1="178.50" y1="28.50" x2="178.50" y2="30.50" stroke="#000" stroke-width="1" /><line x1="178.50" y1="432.00" x2="178.50" y2="430.00" stroke="#000" stroke-width="1" /><line x1="189.50" y1="28.50" x2="189.50" y2="32.50" stroke="#000" stroke-width="1" /><line x1="189.50" y1="432.00" x2="189.50" y2="428.00" stroke="#000" stroke-width="1" /><line x1="199.50" y1="28.50" x2="199.50" y2="30.50" stroke="#000" stroke-width="1" /><line x1="199.50" y1="432.00" x2="199.50" y2="430.00" stroke="#000" stroke-width="1" /><line x1="210.50" y1="28.50" x2="210.50" y2="30.50" stroke="#000" stroke-width="1" /><line x1="210.50" y1="432.00" x2="210.50" y2="430.00" stroke="#000" stroke-width="1" /><line x1="221.50" y1="28.50" x2="221.50" y2="30.50" stroke="#000" stroke-width="1" /><line x1="221.50" y1="432.00" x2="221.50" y2="430.00" stroke="#000" stroke-width="1" /><line x1="231.50" y1="28.50" x2="231.50" y2="32.50" stroke="#000" stroke-width="1" /><line x1="231.50" y1="432.00" x2="231.50" y2="428.00" stroke="#000" stroke-width="1" /><line x1="242.50" y1="28.50" x2="242.50" y2="30.50" stroke="#000" stroke-width="1" /><line x1="242.50" y1="432.00" x2="242.50" y2="430.00" stroke="#000" stroke-width="1" /><line x1="253.50" y1="28.50" x2="253.50" y2="30.50" stroke="#000" stroke-width="1" /><line x1="253.50" y1="432.00" x2="253.50" y2="430.00" stroke="#000" stroke-width="1" /><line x1="263.50" y1="28.50" x2="263.50" y2="30.50" stroke="#000" stroke-width="1" /><line x1="263.50" y1="432.00" x2="263.50" y2="430.00" stroke="#000" stroke-width="1" /><line x1="274.50" y1="28.50" x2="274.50" y2="32.50" stroke="#000" stroke-width="1" /><line x1="274.50" y1="432.00" x2="274.50" y2="428.00" stroke="#000" stroke-width="1" /><line x1="285.50" y1="28.50" x2="285.50" y2="30.50" stroke="#000" stroke-width="1" /><line x1="285.50" y1="432.00" x2="285.50" y2="430.00" stroke="#000" stroke-width="1" /><line x1="296.50" y1="28.50" x2="296.50" y2="30.50" stroke="#000" stroke-width="1" /><line x1="296.50" y1="432.00" x2="296.50" y2="430.00" stroke="#000" stroke-width="1" /><line x1="306.50" y1="28.50" x2="306.50" y2="30.50" stroke="#000" stroke-width="1" /><line x1="306.50" y1="432.00" x2="306.50" y2="430.00" stroke="#000" stroke-width="1" /><line x1="317.50" y1="28.50" x2="317.50" y2="32.50" stroke="#000" stroke-width="1" /><line x1="317.50" y1="432.00" x2="317.50" y2="428.00" stroke="#000" stroke-width="1" /><line x1="328.50" y1="28.50" x2="328.50" y2="30.50" stroke="#000" stroke-width="1" /><line x1="328.50" y1="432.00" x2="328.50" y2="430.00" stroke="#000" stroke-width="1" /><line x1="338.50" y1="28.50" x2="338.50" y2="30.50" stroke="#000" stroke-width="1" /><line x1="338.50" y1="432.00" x2="338.50" y2="430.00" stroke="#000" stroke-width="1" /><line x1="349.50" y1="28.50" x2="349.50" y2="30.50" stroke="#000" stroke-width="1" /><line x1="349.50" y1="432.00" x2="349.50" y2="430.00" stroke="#000" stroke-width="1" /><line x1="360.50" y1="28.50" x2="360.50" y2="32.50" stroke="#000" stroke-width="1" /><line x1="360.50" y1="432.00" x2="360.50" y2="428.00" stroke="#000" stroke-width="1" /><line x1="371.50" y1="28.50" x2="371.50" y2="30.50" stroke="#000" stroke-width="1" /><line x1="371.50" y1="432.00" x2="371.50" y2="430.00" stroke="#000" stroke-width="1" /><line x1="381.50" y1="28.50" x2="381.50" y2="30.50" stroke="#000" stroke-width="1" /><line x1="381.50" y1="432.00" x2="381.50" y2="430.00" stroke="#000" stroke-width="1" /><line x1="392.50" y1="28.50" x2="392.50" y2="30.50" stroke="#000" stroke-width="1" /><line x1="392.50" y1="432.00" x2="392.50" y2="430.00" stroke="#000" stroke-width="1" /><line x1="403.50" y1="28.50" x2="403.50" y2="32.50" stroke="#000" stroke-width="1" /><line x1="403.50" y1="432.00" x2="403.50" y2="428.00" stroke="#000" stroke-width="1" /><line x1="413.50" y1="28.50" x2="413.50" y2="30.50" stroke="#000" stroke-width="1" /><line x1="413.50" y1="432.00" x2="413.50" y2="430.00" stroke="#000" stroke-width="1" /><line x1="424.50" y1="28.50" x2="424.50" y2="30.50" stroke="#000" stroke-width="1" /><line x1="424.50" y1="432.00" x2="424.50" y2="430.00" stroke="#000" stroke-width="1" /><line x1="435.50" y1="28.50" x2="435.50" y2="30.50" stroke="#000" stroke-width="1" /><line x1="435.50" y1="432.00" x2="435.50" y2="430.00" stroke="#000" stroke-width="1" /><line x1="446.50" y1="28.50" x2="446.50" y2="32.50" stroke="#000" stroke-width="1" /><line x1="446.50" y1="432.00" x2="446.50" y2="428.00" stroke="#000" stroke-width="1" /><line x1="456.50" y1="28.50" x2="456.50" y2="30.50" stroke="#000" stroke-width="1" /><line x1="456.50" y1="432.00" x2="456.50" y2="430.00" stroke="#000" stroke-width="1" /><line x1="467.50" y1="28.50" x2="467.50" y2="30.50" stroke="#000" stroke-width="1" /><line x1="467.50" y1="432.00" x2="467.50" y2="430.00" stroke="#000" stroke-width="1" /><line x1="478.50" y1="28.50" x2="478.50" y2="30.50" stroke="#000" stroke-width="1" /><line x1="478.50" y1="432.00" x2="478.50" y2="430.00" stroke="#000" stroke-width="1" /><line x1="488.50" y1="28.50" x2="488.50" y2="32.50" stroke="#000" stroke-width="1" /><line x1="488.50" y1="432.00" x2="488.50" y2="428.00" stroke="#000" stroke-width="1" /><line x1="499.50" y1="28.50" x2="499.50" y2="30.50" stroke="#000" stroke-width="1" /><line x1="499.50" y1="432.00" x2="499.50" y2="430.00" stroke="#000" stroke-width="1" /><line x1="510.50" y1="28.50" x2="510.50" y2="30.50" stroke="#000" stroke-width="1" /><line x1="510.50" y1="432.00" x2="510.50" y2="430.00" stroke="#000" stroke-width="1" /><line x1="521.50" y1="28.50" x2="521.50" y2="30.50" stroke="#000" stroke-width="1" /><line x1="521.50" y1="432.00" x2="521.50" y2="430.00" stroke="#000" stroke-width="1" /><line x1="531.50" y1="28.50" x2="531.50" y2="32.50" stroke="#000" stroke-width="1" /><line x1="531.50" y1="432.00" x2="531.50" y2="428.00" stroke="#000" stroke-width="1" /><line x1="542.50" y1="28.50" x2="542.50" y2="30.50" stroke="#000" stroke-width="1" /><line x1="542.50" y1="432.00" x2="542.50" y2="430.00" stroke="#000" stroke-width="1" /><line x1="553.50" y1="28.50" x2="553.50" y2="30.50" stroke="#000" stroke-width="1" /><line x1="553.50" y1="432.00" x2="553.50" y2="430.00" stroke="#000" stroke-width="1" /><line x1="563.50" y1="28.50" x2="563.50" y2="30.50" stroke="#000" stroke-width="1" /><line x1="563.50" y1="432.00" x2="563.50" y2="430.00" stroke="#000" stroke-width="1" /><line x1="574.50" y1="28.50" x2="574.50" y2="32.50" stroke="#000" stroke-width="1" /><line x1="574.50" y1="432.00" x2="574.50" y2="428.00" stroke="#000" stroke-width="1" /><line x1="585.50" y1="28.50" x2="585.50" y2="30.50" stroke="#000" stroke-width="1" /><line x1="585.50" y1="432.00" x2="585.50" y2="430.00" stroke="#000" stroke-width="1" /><line x1="596.50" y1="28.50" x2="596.50" y2="30.50" stroke="#000" stroke-width="1" /><line x1="596.50" y1="432.00" x2="596.50" y2="430.00" stroke="#000" stroke-width="1" /><line x1="50.50" y1="427.50" x2="52.50" y2="427.50" stroke="#000" stroke-width="1" /><line x1="50.50" y1="422.50" x2="52.50" y2="422.50" stroke="#000" stroke-width="1" /><line x1="50.50" y1="418.50" x2="52.50" y2="418.50" stroke="#000" stroke-width="1" /><line x1="50.50" y1="415.50" x2="54.50" y2="415.50" stroke="#000" stroke-width="1" /><line x1="604.35" y1="415.50" x2="600.35" y2="415.50" stroke="#000" stroke-width="1" /><line x1="50.50" y1="391.50" x2="52.50" y2="391.50" stroke="#000" stroke-width="1" /><line x1="50.50" y1="377.50" x2="52.50" y2="377.50" stroke="#000" stroke-width="1" /><line x1="50.50" y1="367.50" x2="52.50" y2="367.50" stroke="#000" stroke-width="1" /><line x1="50.50" y1="359.50" x2="52.50" y2="359.50" stroke="#000" stroke-width="1" /><line x1="50.50" y1="352.50" x2="52.50" y2="352.50" stroke="#000" stroke-width="1" /><line x1="50.50" y1="347.50" x2="52.50" y2="347.50" stroke="#000" stroke-width="1" /><line x1="50.50" y1="342.50" x2="52.50" y2="342.50" stroke="#000" stroke-width="1" /><line x1="50.50" y1="338.50" x2="52.50" y2="338.50" stroke="#000" stroke-width="1" /><line x1="50.50" y1="335.50" x2="54.50" y2="335.50" stroke="#000" stroke-width="1" /><line x1="604.35" y1="335.50" x2="600.35" y2="335.50" stroke="#000" stroke-width="1" /><line x1="50.50" y1="311.50" x2="52.50" y2="311.50" stroke="#000" stroke-width="1" /><line x1="50.50" y1="296.50" x2="52.50" y2="296.50" stroke="#000" stroke-width="1" /><line x1="50.50" y1="286.50" x2="52.50" y2="286.50" stroke="#000" stroke-width="1" /><line x1="50.50" y1="279.50" x2="52.50" y2="279.50" stroke="#000" stroke-width="1" /><line x1="50.50" y1="272.50" x2="52.50" y2="272.50" stroke="#000" stroke-width="1" /><line x1="50.50" y1="267.50" x2="52.50" y2="267.50" stroke="#000" stroke-width="1" /><line x1="50.50" y1="262.50" x2="52.50" y2="262.50" stroke="#000" stroke-width="1" /><line x1="50.50" y1="258.50" x2="52.50" y2="258.50" stroke="#000" stroke-width="1" /><line x1="50.50" y1="255.50" x2="54.50" y2="255.50" stroke="#000" stroke-width="1" /><line x1="604.35" y1="255.50" x2="600.35" y2="255.50" stroke="#000" stroke-width="1" /><line x1="50.50" y1="231.50" x2="52.50" y2="231.50" stroke="#000" stroke-width="1" /><line x1="50.50" y1="216.50" x2="52.50" y2="216.50" stroke="#000" stroke-width="1" /><line x1="50.50" y1="206.50" x2="52.50" y2="206.50" stroke="#000" stroke-width="1" /><line x1="50.50" y1="199.50" x2="52.50" y2="199.50" stroke="#000" stroke-width="1" /><line x1="50.50" y1="192.50" x2="52.50" y2="192.50" stroke="#000" stroke-width="1" /><line x1="50.50" y1="187.50" x2="52.50" y2="187.50" stroke="#000" stroke-width="1" /><line x1="50.50" y1="182.50" x2="52.50" y2="182.50" stroke="#000" stroke-width="1" /><line x1="50.50" y1="178.50" x2="52.50" y2="178.50" stroke="#000" stroke-width="1" /><line x1="50.50" y1="175.50" x2="54.50" y2="175.50" stroke="#000" stroke-width="1" /><line x1="604.35" y1="175.50" x2="600.35" y2="175.50" stroke="#000" stroke-width="1" /><line x1="50.50" y1="150.50" x2="52.50" y2="150.50" stroke="#000" stroke-width="1" /><line x1="50.50" y1="136.50" x2="52.50" y2="136.50" stroke="#000" stroke-width="1" /><line x1="50.50" y1="126.50" x2="52.50" y2="126.50" stroke="#000" stroke-width="1" /><line x1="50.50" y1="119.50" x2="52.50" y2="119.50" stroke="#000" stroke-width="1" /><line x1="50.50" y1="112.50" x2="52.50" y2="112.50" stroke="#000" stroke-width="1" /><line x1="50.50" y1="107.50" x2="52.50" y2="107.50" stroke="#000" stroke-width="1" /><line x1="50.50" y1="102.50" x2="52.50" y2="102.50" stroke="#000" stroke-width="1" /><line x1="50.50" y1="98.50" x2="52.50" y2="98.50" stroke="#000" stroke-width="1" /><line x1="50.50" y1="95.50" x2="54.50" y2="95.50" stroke="#000" stroke-width="1" /><line x1="604.35" y1="95.50" x2="600.35" y2="95.50" stroke="#000" stroke-width="1" /><line x1="50.50" y1="70.50" x2="52.50" y2="70.50" stroke="#000" stroke-width="1" /><line x1="50.50" y1="56.50" x2="52.50" y2="56.50" stroke="#000" stroke-width="1" /><line x1="50.50" y1="46.50" x2="52.50" y2="46.50" stroke="#000" stroke-width="1" /><line x1="50.50" y1="39.50" x2="52.50" y2="39.50" stroke="#000" stroke-width="1" /><line x1="50.50" y1="32.50" x2="52.50" y2="32.50" stroke="#000" stroke-width="1" /><rect x="50.50" y="28.50" width="553.86" height="403.50" fill="none" stroke="#000" stroke-width="1.6"/><text x="307.0" y="23.0" text-anchor="middle" font-size="13" font-weight="bold">Patterns</text><text x="60.5" y="445.5" text-anchor="middle" font-size="13" >0</text><text x="103.3" y="445.5" text-anchor="middle" font-size="13" >2</text><text x="146.2" y="445.5" text-anchor="middle" font-size="13" >4</text><text x="189.0" y="445.5" text-anchor="middle" font-size="13" >6</text><text x="231.9" y="445.5" text-anchor="middle" font-size="13" >8</text><text x="274.7" y="445.5" text-anchor="middle" font-size="13" >10</text><text x="317.5" y="445.5" text-anchor="middle" font-size="13" >12</text><text x="360.4" y="445.5" text-anchor="middle" font-size="13" >14</text><text x="403.2" y="445.5" text-anchor="middle" font-size="13" >16</text><text x="446.1" y="445.5" text-anchor="middle" font-size="13" >18</text><text x="488.9" y="445.5" text-anchor="middle" font-size="13" >20</text><text x="531.7" y="445.5" text-anchor="middle" font-size="13" >22</text><text x="574.6" y="445.5" text-anchor="middle" font-size="13" >24</text><text x="47.5" y="419.2" text-anchor="end" font-size="13">10<tspan font-size="9.5" dy="-5">0</tspan></text><text x="47.5" y="339.2" text-anchor="end" font-size="13">10<tspan font-size="9.5" dy="-5">1</tspan></text><text x="47.5" y="259.1" text-anchor="end" font-size="13">10<tspan font-size="9.5" dy="-5">2</tspan></text><text x="47.5" y="179.1" text-anchor="end" font-size="13">10<tspan font-size="9.5" dy="-5">3</tspan></text><text x="47.5" y="99.0" text-anchor="end" font-size="13">10<tspan font-size="9.5" dy="-5">4</tspan></text><rect x="492.5" y="33.5" width="107" height="31" fill="#ffffc8" stroke="#000" stroke-width="1"/><rect x="494" y="38" width="13" height="8" fill="#ffa0a0"/><rect x="494" y="53" width="13" height="8" fill="#a0f5a0"/><text x="511" y="45.5" font-size="10.8">FRET pattern</text><text x="511" y="60.5" font-size="10.8">non-FRET pattern</text><text x="327" y="464" text-anchor="middle" font-size="13">t [ns]</text><text transform="translate(22,235) rotate(-90)" text-anchor="middle" font-size="12">Intensity [ Cnts]</text></svg><svg style="left:910px;top:273px;font-family:Liberation Sans" width="615" height="478"><rect width="615" height="478" fill="#fff"/><line x1="71.50" y1="28.50" x2="71.50" y2="317.00" stroke="#e0e0e0" stroke-width="1" /><line x1="81.50" y1="28.50" x2="81.50" y2="317.00" stroke="#e0e0e0" stroke-width="1" /><line x1="92.50" y1="28.50" x2="92.50" y2="317.00" stroke="#e0e0e0" stroke-width="1" /><line x1="113.50" y1="28.50" x2="113.50" y2="317.00" stroke="#e0e0e0" stroke-width="1" /><line x1="124.50" y1="28.50" x2="124.50" y2="317.00" stroke="#e0e0e0" stroke-width="1" /><line x1="135.50" y1="28.50" x2="135.50" y2="317.00" stroke="#e0e0e0" stroke-width="1" /><line x1="156.50" y1="28.50" x2="156.50" y2="317.00" stroke="#e0e0e0" stroke-width="1" /><line x1="167.50" y1="28.50" x2="167.50" y2="317.00" stroke="#e0e0e0" stroke-width="1" /><line x1="178.50" y1="28.50" x2="178.50" y2="317.00" stroke="#e0e0e0" stroke-width="1" /><line x1="199.50" y1="28.50" x2="199.50" y2="317.00" stroke="#e0e0e0" stroke-width="1" /><line x1="210.50" y1="28.50" x2="210.50" y2="317.00" stroke="#e0e0e0" stroke-width="1" /><line x1="220.50" y1="28.50" x2="220.50" y2="317.00" stroke="#e0e0e0" stroke-width="1" /><line x1="242.50" y1="28.50" x2="242.50" y2="317.00" stroke="#e0e0e0" stroke-width="1" /><line x1="252.50" y1="28.50" x2="252.50" y2="317.00" stroke="#e0e0e0" stroke-width="1" /><line x1="263.50" y1="28.50" x2="263.50" y2="317.00" stroke="#e0e0e0" stroke-width="1" /><line x1="285.50" y1="28.50" x2="285.50" y2="317.00" stroke="#e0e0e0" stroke-width="1" /><line x1="295.50" y1="28.50" x2="295.50" y2="317.00" stroke="#e0e0e0" stroke-width="1" /><line x1="306.50" y1="28.50" x2="306.50" y2="317.00" stroke="#e0e0e0" stroke-width="1" /><line x1="327.50" y1="28.50" x2="327.50" y2="317.00" stroke="#e0e0e0" stroke-width="1" /><line x1="338.50" y1="28.50" x2="338.50" y2="317.00" stroke="#e0e0e0" stroke-width="1" /><line x1="349.50" y1="28.50" x2="349.50" y2="317.00" stroke="#e0e0e0" stroke-width="1" /><line x1="370.50" y1="28.50" x2="370.50" y2="317.00" stroke="#e0e0e0" stroke-width="1" /><line x1="381.50" y1="28.50" x2="381.50" y2="317.00" stroke="#e0e0e0" stroke-width="1" /><line x1="392.50" y1="28.50" x2="392.50" y2="317.00" stroke="#e0e0e0" stroke-width="1" /><line x1="413.50" y1="28.50" x2="413.50" y2="317.00" stroke="#e0e0e0" stroke-width="1" /><line x1="424.50" y1="28.50" x2="424.50" y2="317.00" stroke="#e0e0e0" stroke-width="1" /><line x1="434.50" y1="28.50" x2="434.50" y2="317.00" stroke="#e0e0e0" stroke-width="1" /><line x1="456.50" y1="28.50" x2="456.50" y2="317.00" stroke="#e0e0e0" stroke-width="1" /><line x1="466.50" y1="28.50" x2="466.50" y2="317.00" stroke="#e0e0e0" stroke-width="1" /><line x1="477.50" y1="28.50" x2="477.50" y2="317.00" stroke="#e0e0e0" stroke-width="1" /><line x1="499.50" y1="28.50" x2="499.50" y2="317.00" stroke="#e0e0e0" stroke-width="1" /><line x1="509.50" y1="28.50" x2="509.50" y2="317.00" stroke="#e0e0e0" stroke-width="1" /><line x1="520.50" y1="28.50" x2="520.50" y2="317.00" stroke="#e0e0e0" stroke-width="1" /><line x1="541.50" y1="28.50" x2="541.50" y2="317.00" stroke="#e0e0e0" stroke-width="1" /><line x1="552.50" y1="28.50" x2="552.50" y2="317.00" stroke="#e0e0e0" stroke-width="1" /><line x1="563.50" y1="28.50" x2="563.50" y2="317.00" stroke="#e0e0e0" stroke-width="1" /><line x1="584.50" y1="28.50" x2="584.50" y2="317.00" stroke="#e0e0e0" stroke-width="1" /><line x1="595.50" y1="28.50" x2="595.50" y2="317.00" stroke="#e0e0e0" stroke-width="1" /><line x1="50.50" y1="314.50" x2="604.50" y2="314.50" stroke="#e0e0e0" stroke-width="1" /><line x1="50.50" y1="311.50" x2="604.50" y2="311.50" stroke="#e0e0e0" stroke-width="1" /><line x1="50.50" y1="308.50" x2="604.50" y2="308.50" stroke="#e0e0e0" stroke-width="1" /><line x1="50.50" y1="305.50" x2="604.50" y2="305.50" stroke="#e0e0e0" stroke-width="1" /><line x1="50.50" y1="289.50" x2="604.50" y2="289.50" stroke="#e0e0e0" stroke-width="1" /><line x1="50.50" y1="280.50" x2="604.50" y2="280.50" stroke="#e0e0e0" stroke-width="1" /><line x1="50.50" y1="274.50" x2="604.50" y2="274.50" stroke="#e0e0e0" stroke-width="1" /><line x1="50.50" y1="269.50" x2="604.50" y2="269.50" stroke="#e0e0e0" stroke-width="1" /><line x1="50.50" y1="266.50" x2="604.50" y2="266.50" stroke="#e0e0e0" stroke-width="1" /><line x1="50.50" y1="262.50" x2="604.50" y2="262.50" stroke="#e0e0e0" stroke-width="1" /><line x1="50.50" y1="259.50" x2="604.50" y2="259.50" stroke="#e0e0e0" stroke-width="1" /><line x1="50.50" y1="257.50" x2="604.50" y2="257.50" stroke="#e0e0e0" stroke-width="1" /><line x1="50.50" y1="240.50" x2="604.50" y2="240.50" stroke="#e0e0e0" stroke-width="1" /><line x1="50.50" y1="232.50" x2="604.50" y2="232.50" stroke="#e0e0e0" stroke-width="1" /><line x1="50.50" y1="226.50" x2="604.50" y2="226.50" stroke="#e0e0e0" stroke-width="1" /><line x1="50.50" y1="221.50" x2="604.50" y2="221.50" stroke="#e0e0e0" stroke-width="1" /><line x1="50.50" y1="217.50" x2="604.50" y2="217.50" stroke="#e0e0e0" stroke-width="1" /><line x1="50.50" y1="214.50" x2="604.50" y2="214.50" stroke="#e0e0e0" stroke-width="1" /><line x1="50.50" y1="211.50" x2="604.50" y2="211.50" stroke="#e0e0e0" stroke-width="1" /><line x1="50.50" y1="209.50" x2="604.50" y2="209.50" stroke="#e0e0e0" stroke-width="1" /><line x1="50.50" y1="192.50" x2="604.50" y2="192.50" stroke="#e0e0e0" stroke-width="1" /><line x1="50.50" y1="183.50" x2="604.50" y2="183.50" stroke="#e0e0e0" stroke-width="1" /><line x1="50.50" y1="177.50" x2="604.50" y2="177.50" stroke="#e0e0e0" stroke-width="1" /><line x1="50.50" y1="173.50" x2="604.50" y2="173.50" stroke="#e0e0e0" stroke-width="1" /><line x1="50.50" y1="169.50" x2="604.50" y2="169.50" stroke="#e0e0e0" stroke-width="1" /><line x1="50.50" y1="166.50" x2="604.50" y2="166.50" stroke="#e0e0e0" stroke-width="1" /><line x1="50.50" y1="163.50" x2="604.50" y2="163.50" stroke="#e0e0e0" stroke-width="1" /><line x1="50.50" y1="160.50" x2="604.50" y2="160.50" stroke="#e0e0e0" stroke-width="1" /><line x1="50.50" y1="144.50" x2="604.50" y2="144.50" stroke="#e0e0e0" stroke-width="1" /><line x1="50.50" y1="135.50" x2="604.50" y2="135.50" stroke="#e0e0e0" stroke-width="1" /><line x1="50.50" y1="129.50" x2="604.50" y2="129.50" stroke="#e0e0e0" stroke-width="1" /><line x1="50.50" y1="124.50" x2="604.50" y2="124.50" stroke="#e0e0e0" stroke-width="1" /><line x1="50.50" y1="121.50" x2="604.50" y2="121.50" stroke="#e0e0e0" stroke-width="1" /><line x1="50.50" y1="117.50" x2="604.50" y2="117.50" stroke="#e0e0e0" stroke-width="1" /><line x1="50.50" y1="115.50" x2="604.50" y2="115.50" stroke="#e0e0e0" stroke-width="1" /><line x1="50.50" y1="112.50" x2="604.50" y2="112.50" stroke="#e0e0e0" stroke-width="1" /><line x1="50.50" y1="95.50" x2="604.50" y2="95.50" stroke="#e0e0e0" stroke-width="1" /><line x1="50.50" y1="87.50" x2="604.50" y2="87.50" stroke="#e0e0e0" stroke-width="1" /><line x1="50.50" y1="81.50" x2="604.50" y2="81.50" stroke="#e0e0e0" stroke-width="1" /><line x1="50.50" y1="76.50" x2="604.50" y2="76.50" stroke="#e0e0e0" stroke-width="1" /><line x1="50.50" y1="72.50" x2="604.50" y2="72.50" stroke="#e0e0e0" stroke-width="1" /><line x1="50.50" y1="69.50" x2="604.50" y2="69.50" stroke="#e0e0e0" stroke-width="1" /><line x1="50.50" y1="66.50" x2="604.50" y2="66.50" stroke="#e0e0e0" stroke-width="1" /><line x1="50.50" y1="64.50" x2="604.50" y2="64.50" stroke="#e0e0e0" stroke-width="1" /><line x1="50.50" y1="47.50" x2="604.50" y2="47.50" stroke="#e0e0e0" stroke-width="1" /><line x1="50.50" y1="39.50" x2="604.50" y2="39.50" stroke="#e0e0e0" stroke-width="1" /><line x1="50.50" y1="33.50" x2="604.50" y2="33.50" stroke="#e0e0e0" stroke-width="1" /><line x1="50.50" y1="428.50" x2="604.50" y2="428.50" stroke="#e0e0e0" stroke-width="1" /><line x1="50.50" y1="423.50" x2="604.50" y2="423.50" stroke="#e0e0e0" stroke-width="1" /><line x1="50.50" y1="418.50" x2="604.50" y2="418.50" stroke="#e0e0e0" stroke-width="1" /><line x1="50.50" y1="413.50" x2="604.50" y2="413.50" stroke="#e0e0e0" stroke-width="1" /><line x1="50.50" y1="403.50" x2="604.50" y2="403.50" stroke="#e0e0e0" stroke-width="1" /><line x1="50.50" y1="397.50" x2="604.50" y2="397.50" stroke="#e0e0e0" stroke-width="1" /><line x1="50.50" y1="392.50" x2="604.50" y2="392.50" stroke="#e0e0e0" stroke-width="1" /><line x1="50.50" y1="387.50" x2="604.50" y2="387.50" stroke="#e0e0e0" stroke-width="1" /><line x1="50.50" y1="377.50" x2="604.50" y2="377.50" stroke="#e0e0e0" stroke-width="1" /><line x1="50.50" y1="372.50" x2="604.50" y2="372.50" stroke="#e0e0e0" stroke-width="1" /><line x1="50.50" y1="367.50" x2="604.50" y2="367.50" stroke="#e0e0e0" stroke-width="1" /><line x1="50.50" y1="361.50" x2="604.50" y2="361.50" stroke="#e0e0e0" stroke-width="1" /><line x1="50.50" y1="351.50" x2="604.50" y2="351.50" stroke="#e0e0e0" stroke-width="1" /><line x1="50.50" y1="346.50" x2="604.50" y2="346.50" stroke="#e0e0e0" stroke-width="1" /><line x1="50.50" y1="341.50" x2="604.50" y2="341.50" stroke="#e0e0e0" stroke-width="1" /><line x1="50.50" y1="336.50" x2="604.50" y2="336.50" stroke="#e0e0e0" stroke-width="1" /><line x1="50.50" y1="325.50" x2="604.50" y2="325.50" stroke="#e0e0e0" stroke-width="1" /><line x1="50.50" y1="320.50" x2="604.50" y2="320.50" stroke="#e0e0e0" stroke-width="1" /><line x1="71.50" y1="317.00" x2="71.50" y2="432.00" stroke="#e0e0e0" stroke-width="1" /><line x1="81.50" y1="317.00" x2="81.50" y2="432.00" stroke="#e0e0e0" stroke-width="1" /><line x1="92.50" y1="317.00" x2="92.50" y2="432.00" stroke="#e0e0e0" stroke-width="1" /><line x1="113.50" y1="317.00" x2="113.50" y2="432.00" stroke="#e0e0e0" stroke-width="1" /><line x1="124.50" y1="317.00" x2="124.50" y2="432.00" stroke="#e0e0e0" stroke-width="1" /><line x1="135.50" y1="317.00" x2="135.50" y2="432.00" stroke="#e0e0e0" stroke-width="1" /><line x1="156.50" y1="317.00" x2="156.50" y2="432.00" stroke="#e0e0e0" stroke-width="1" /><line x1="167.50" y1="317.00" x2="167.50" y2="432.00" stroke="#e0e0e0" stroke-width="1" /><line x1="178.50" y1="317.00" x2="178.50" y2="432.00" stroke="#e0e0e0" stroke-width="1" /><line x1="199.50" y1="317.00" x2="199.50" y2="432.00" stroke="#e0e0e0" stroke-width="1" /><line x1="210.50" y1="317.00" x2="210.50" y2="432.00" stroke="#e0e0e0" stroke-width="1" /><line x1="220.50" y1="317.00" x2="220.50" y2="432.00" stroke="#e0e0e0" stroke-width="1" /><line x1="242.50" y1="317.00" x2="242.50" y2="432.00" stroke="#e0e0e0" stroke-width="1" /><line x1="252.50" y1="317.00" x2="252.50" y2="432.00" stroke="#e0e0e0" stroke-width="1" /><line x1="263.50" y1="317.00" x2="263.50" y2="432.00" stroke="#e0e0e0" stroke-width="1" /><line x1="285.50" y1="317.00" x2="285.50" y2="432.00" stroke="#e0e0e0" stroke-width="1" /><line x1="295.50" y1="317.00" x2="295.50" y2="432.00" stroke="#e0e0e0" stroke-width="1" /><line x1="306.50" y1="317.00" x2="306.50" y2="432.00" stroke="#e0e0e0" stroke-width="1" /><line x1="327.50" y1="317.00" x2="327.50" y2="432.00" stroke="#e0e0e0" stroke-width="1" /><line x1="338.50" y1="317.00" x2="338.50" y2="432.00" stroke="#e0e0e0" stroke-width="1" /><line x1="349.50" y1="317.00" x2="349.50" y2="432.00" stroke="#e0e0e0" stroke-width="1" /><line x1="370.50" y1="317.00" x2="370.50" y2="432.00" stroke="#e0e0e0" stroke-width="1" /><line x1="381.50" y1="317.00" x2="381.50" y2="432.00" stroke="#e0e0e0" stroke-width="1" /><line x1="392.50" y1="317.00" x2="392.50" y2="432.00" stroke="#e0e0e0" stroke-width="1" /><line x1="413.50" y1="317.00" x2="413.50" y2="432.00" stroke="#e0e0e0" stroke-width="1" /><line x1="424.50" y1="317.00" x2="424.50" y2="432.00" stroke="#e0e0e0" stroke-width="1" /><line x1="434.50" y1="317.00" x2="434.50" y2="432.00" stroke="#e0e0e0" stroke-width="1" /><line x1="456.50" y1="317.00" x2="456.50" y2="432.00" stroke="#e0e0e0" stroke-width="1" /><line x1="466.50" y1="317.00" x2="466.50" y2="432.00" stroke="#e0e0e0" stroke-width="1" /><line x1="477.50" y1="317.00" x2="477.50" y2="432.00" stroke="#e0e0e0" stroke-width="1" /><line x1="499.50" y1="317.00" x2="499.50" y2="432.00" stroke="#e0e0e0" stroke-width="1" /><line x1="509.50" y1="317.00" x2="509.50" y2="432.00" stroke="#e0e0e0" stroke-width="1" /><line x1="520.50" y1="317.00" x2="520.50" y2="432.00" stroke="#e0e0e0" stroke-width="1" /><line x1="541.50" y1="317.00" x2="541.50" y2="432.00" stroke="#e0e0e0" stroke-width="1" /><line x1="552.50" y1="317.00" x2="552.50" y2="432.00" stroke="#e0e0e0" stroke-width="1" /><line x1="563.50" y1="317.00" x2="563.50" y2="432.00" stroke="#e0e0e0" stroke-width="1" /><line x1="584.50" y1="317.00" x2="584.50" y2="432.00" stroke="#e0e0e0" stroke-width="1" /><line x1="595.50" y1="317.00" x2="595.50" y2="432.00" stroke="#e0e0e0" stroke-width="1" /><line x1="60.50" y1="28.50" x2="60.50" y2="317.00" stroke="#8f8f8f" stroke-width="1" /><line x1="60.50" y1="317.00" x2="60.50" y2="432.00" stroke="#8f8f8f" stroke-width="1" /><line x1="103.50" y1="28.50" x2="103.50" y2="317.00" stroke="#8f8f8f" stroke-width="1" /><line x1="103.50" y1="317.00" x2="103.50" y2="432.00" stroke="#8f8f8f" stroke-width="1" /><line x1="145.50" y1="28.50" x2="145.50" y2="317.00" stroke="#8f8f8f" stroke-width="1" /><line x1="145.50" y1="317.00" x2="145.50" y2="432.00" stroke="#8f8f8f" stroke-width="1" /><line x1="188.50" y1="28.50" x2="188.50" y2="317.00" stroke="#8f8f8f" stroke-width="1" /><line x1="188.50" y1="317.00" x2="188.50" y2="432.00" stroke="#8f8f8f" stroke-width="1" /><line x1="231.50" y1="28.50" x2="231.50" y2="317.00" stroke="#8f8f8f" stroke-width="1" /><line x1="231.50" y1="317.00" x2="231.50" y2="432.00" stroke="#8f8f8f" stroke-width="1" /><line x1="274.50" y1="28.50" x2="274.50" y2="317.00" stroke="#8f8f8f" stroke-width="1" /><line x1="274.50" y1="317.00" x2="274.50" y2="432.00" stroke="#8f8f8f" stroke-width="1" /><line x1="317.50" y1="28.50" x2="317.50" y2="317.00" stroke="#8f8f8f" stroke-width="1" /><line x1="317.50" y1="317.00" x2="317.50" y2="432.00" stroke="#8f8f8f" stroke-width="1" /><line x1="359.50" y1="28.50" x2="359.50" y2="317.00" stroke="#8f8f8f" stroke-width="1" /><line x1="359.50" y1="317.00" x2="359.50" y2="432.00" stroke="#8f8f8f" stroke-width="1" /><line x1="402.50" y1="28.50" x2="402.50" y2="317.00" stroke="#8f8f8f" stroke-width="1" /><line x1="402.50" y1="317.00" x2="402.50" y2="432.00" stroke="#8f8f8f" stroke-width="1" /><line x1="445.50" y1="28.50" x2="445.50" y2="317.00" stroke="#8f8f8f" stroke-width="1" /><line x1="445.50" y1="317.00" x2="445.50" y2="432.00" stroke="#8f8f8f" stroke-width="1" /><line x1="488.50" y1="28.50" x2="488.50" y2="317.00" stroke="#8f8f8f" stroke-width="1" /><line x1="488.50" y1="317.00" x2="488.50" y2="432.00" stroke="#8f8f8f" stroke-width="1" /><line x1="531.50" y1="28.50" x2="531.50" y2="317.00" stroke="#8f8f8f" stroke-width="1" /><line x1="531.50" y1="317.00" x2="531.50" y2="432.00" stroke="#8f8f8f" stroke-width="1" /><line x1="573.50" y1="28.50" x2="573.50" y2="317.00" stroke="#8f8f8f" stroke-width="1" /><line x1="573.50" y1="317.00" x2="573.50" y2="432.00" stroke="#8f8f8f" stroke-width="1" /><line x1="50.50" y1="303.50" x2="604.50" y2="303.50" stroke="#8f8f8f" stroke-width="1" /><line x1="50.50" y1="255.50" x2="604.50" y2="255.50" stroke="#8f8f8f" stroke-width="1" /><line x1="50.50" y1="207.50" x2="604.50" y2="207.50" stroke="#8f8f8f" stroke-width="1" /><line x1="50.50" y1="158.50" x2="604.50" y2="158.50" stroke="#8f8f8f" stroke-width="1" /><line x1="50.50" y1="110.50" x2="604.50" y2="110.50" stroke="#8f8f8f" stroke-width="1" /><line x1="50.50" y1="62.50" x2="604.50" y2="62.50" stroke="#8f8f8f" stroke-width="1" /><line x1="50.50" y1="408.50" x2="604.50" y2="408.50" stroke="#8f8f8f" stroke-width="1" /><line x1="50.50" y1="356.50" x2="604.50" y2="356.50" stroke="#8f8f8f" stroke-width="1" /><line x1="50.50" y1="330.50" x2="604.50" y2="330.50" stroke="#8f8f8f" stroke-width="1" /><clipPath id="fc"><rect x="50.5" y="28.5" width="554.2" height="288.5"/></clipPath><clipPath id="rc"><rect x="50.5" y="317" width="554.2" height="115"/></clipPath><g clip-path="url(#fc)"><polyline points="66.3,216.4 66.7,249.1 67.1,233.3 67.6,241.8 68.0,232.9 68.4,238.5 68.9,327.0 69.3,327.0 69.7,280.8 70.1,327.0 70.6,327.0 71.0,263.3 71.4,327.0 71.9,327.0 72.3,231.8 72.7,223.7 73.1,327.0 73.6,222.4 74.0,327.0 74.4,264.5 74.9,327.0 75.3,235.3 75.7,228.2 76.1,258.0 76.6,216.7 77.0,327.0 77.4,285.8 77.8,258.4 78.3,327.0 78.7,327.0 79.1,327.0 79.6,220.5 80.0,327.0 80.4,327.0 80.8,243.4 81.3,327.0 81.7,327.0 82.1,263.3 82.6,327.0 83.0,247.5 83.4,327.0 83.8,224.4 84.3,327.0 84.7,224.9 85.1,327.0 85.6,327.0 86.0,327.0 86.4,296.3 86.8,327.0 87.3,327.0 87.7,327.0 88.1,232.7 88.5,235.5 89.0,327.0 89.4,327.0 89.8,282.9 90.3,327.0 90.7,265.5 91.1,238.5 91.5,327.0 92.0,327.0 92.4,327.0 92.8,221.2 93.3,327.0 93.7,327.0 94.1,327.0 94.5,327.0 95.0,255.9 95.4,327.0 95.8,260.9 96.3,238.2 96.7,327.0 97.1,268.9 97.5,229.4 98.0,327.0 98.4,327.0 98.8,254.0 99.2,327.0 99.7,243.5 100.1,215.8 100.5,278.1 101.0,327.0 101.4,327.0 101.8,327.0 102.2,327.0 102.7,250.9 103.1,327.0 103.5,327.0 104.0,245.1 104.4,327.0 104.8,226.0 105.2,225.2 105.7,327.0 106.1,246.7 106.5,223.7 107.0,327.0 107.4,230.2 107.8,228.7 108.2,259.5 108.7,189.1 109.1,167.9 109.5,147.8 109.9,135.6 110.4,124.9 110.8,115.9 111.2,110.1 111.7,103.6 112.1,97.2 112.5,94.2 112.9,91.3 113.4,88.8 113.8,85.5 114.2,82.6 114.7,81.1 115.1,79.9 115.5,78.6 115.9,77.2 116.4,75.7 116.8,74.2 117.2,73.3 117.7,72.8 118.1,72.2 118.5,71.5 118.9,71.0 119.4,70.4 119.8,70.0 120.2,69.3 120.6,69.3 121.1,68.9 121.5,68.9 121.9,68.7 122.4,68.7 122.8,68.5 123.2,68.5 123.6,68.3 124.1,68.6 124.5,68.5 124.9,68.6 125.4,68.8 125.8,68.7 126.2,69.0 126.6,69.4 127.1,69.7 127.5,69.8 127.9,70.2 128.4,70.4 128.8,70.7 129.2,70.9 129.6,71.2 130.1,71.5 130.5,71.6 130.9,72.1 131.3,72.1 131.8,72.3 132.2,72.6 132.6,72.7 133.1,73.0 133.5,73.2 133.9,73.5 134.3,73.7 134.8,73.8 135.2,74.3 135.6,74.3 136.1,74.9 136.5,75.0 136.9,75.4 137.3,75.5 137.8,75.6 138.2,76.1 138.6,76.3 139.1,76.5 139.5,76.7 139.9,77.1 140.3,77.2 140.8,77.4 141.2,77.6 141.6,78.1 142.0,78.2 142.5,78.5 142.9,78.7 143.3,78.8 143.8,79.4 144.2,79.4 144.6,79.6 145.0,79.8 145.5,80.1 145.9,80.3 146.3,80.6 146.8,80.8 147.2,80.8 147.6,80.9 148.0,81.3 148.5,81.4 148.9,81.6 149.3,81.9 149.8,81.7 150.2,82.0 150.6,82.1 151.0,82.6 151.5,82.5 151.9,82.7 152.3,82.9 152.7,83.3 153.2,83.1 153.6,83.3 154.0,83.5 154.5,83.8 154.9,83.8 155.3,83.9 155.7,84.0 156.2,84.2 156.6,84.4 157.0,84.7 157.5,84.8 157.9,85.0 158.3,85.2 158.7,85.1 159.2,85.5 159.6,85.6 160.0,85.7 160.5,85.8 160.9,85.9 161.3,86.4 161.7,86.3 162.2,86.8 162.6,86.9 163.0,87.0 163.4,86.9 163.9,87.2 164.3,87.5 164.7,87.8 165.2,87.8 165.6,88.0 166.0,88.2 166.4,88.2 166.9,88.4 167.3,88.8 167.7,88.5 168.2,88.8 168.6,89.2 169.0,89.5 169.4,89.3 169.9,89.6 170.3,89.9 170.7,90.0 171.2,90.1 171.6,90.2 172.0,90.5 172.4,90.7 172.9,90.6 173.3,91.0 173.7,91.2 174.1,91.4 174.6,91.6 175.0,91.7 175.4,91.9 175.9,91.9 176.3,92.2 176.7,92.2 177.1,92.4 177.6,92.6 178.0,92.7 178.4,92.8 178.9,92.8 179.3,93.5 179.7,93.2 180.1,93.6 180.6,93.7 181.0,93.6 181.4,94.0 181.9,94.5 182.3,94.1 182.7,94.2 183.1,94.9 183.6,94.9 184.0,94.9 184.4,95.4 184.8,95.5 185.3,95.2 185.7,95.8 186.1,95.7 186.6,95.8 187.0,96.0 187.4,96.5 187.8,96.3 188.3,96.6 188.7,96.6 189.1,97.0 189.6,97.0 190.0,97.6 190.4,98.1 190.8,98.2 191.3,98.3 191.7,98.0 192.1,98.3 192.6,98.8 193.0,99.2 193.4,99.4 193.8,99.5 194.3,99.6 194.7,99.9 195.1,100.4 195.5,100.2 196.0,100.2 196.4,101.0 196.8,101.1 197.3,101.1 197.7,101.3 198.1,101.4 198.5,101.9 199.0,102.2 199.4,101.9 199.8,102.9 200.3,102.4 200.7,102.7 201.1,103.2 201.5,103.4 202.0,103.3 202.4,103.5 202.8,104.1 203.3,104.2 203.7,104.3 204.1,104.5 204.5,104.4 205.0,105.0 205.4,105.0 205.8,105.3 206.2,105.7 206.7,105.7 207.1,105.8 207.5,105.8 208.0,106.6 208.4,106.8 208.8,106.6 209.2,107.4 209.7,107.5 210.1,107.4 210.5,108.0 211.0,108.2 211.4,108.1 211.8,108.2 212.2,108.5 212.7,108.6 213.1,109.1 213.5,109.1 214.0,109.1 214.4,109.5 214.8,110.3 215.2,110.3 215.7,110.2 216.1,111.0 216.5,110.9 216.9,111.2 217.4,111.3 217.8,111.5 218.2,111.7 218.7,112.2 219.1,112.1 219.5,112.1 219.9,112.4 220.4,112.7 220.8,112.9 221.2,113.3 221.7,113.6 222.1,113.3 222.5,113.6 222.9,114.1 223.4,114.3 223.8,114.1 224.2,114.7 224.7,114.7 225.1,115.0 225.5,114.6 225.9,115.7 226.4,115.4 226.8,116.1 227.2,116.1 227.6,117.0 228.1,115.8 228.5,116.8 228.9,116.6 229.4,117.5 229.8,117.4 230.2,117.8 230.6,118.3 231.1,117.5 231.5,117.6 231.9,118.4 232.4,119.0 232.8,118.9 233.2,119.1 233.6,119.6 234.1,119.1 234.5,120.3 234.9,119.8 235.4,119.8 235.8,120.5 236.2,120.6 236.6,120.0 237.1,120.7 237.5,120.6 237.9,121.0 238.3,120.9 238.8,121.1 239.2,122.2 239.6,121.9 240.1,121.9 240.5,121.7 240.9,123.4 241.3,123.4 241.8,123.1 242.2,123.8 242.6,123.7 243.1,123.9 243.5,123.7 243.9,123.7 244.3,124.0 244.8,124.4 245.2,124.8 245.6,125.3 246.1,124.8 246.5,124.7 246.9,125.1 247.3,126.0 247.8,125.2 248.2,126.2 248.6,126.1 249.0,126.8 249.5,126.9 249.9,127.1 250.3,127.5 250.8,127.5 251.2,128.1 251.6,127.7 252.0,127.2 252.5,128.6 252.9,128.1 253.3,128.9 253.8,128.3 254.2,129.4 254.6,128.9 255.0,128.9 255.5,130.1 255.9,129.3 256.3,129.6 256.8,129.7 257.2,130.3 257.6,130.8 258.0,131.1 258.5,131.6 258.9,131.7 259.3,131.2 259.7,132.1 260.2,131.8 260.6,131.8 261.0,133.0 261.5,132.2 261.9,133.1 262.3,132.4 262.7,133.0 263.2,133.0 263.6,133.7 264.0,132.8 264.5,133.2 264.9,133.3 265.3,134.6 265.7,133.1 266.2,134.6 266.6,133.9 267.0,135.0 267.5,135.0 267.9,135.4 268.3,136.6 268.7,136.3 269.2,135.7 269.6,136.8 270.0,135.8 270.4,136.5 270.9,137.0 271.3,137.3 271.7,137.8 272.2,136.5 272.6,137.1 273.0,137.8 273.4,138.5 273.9,138.2 274.3,139.2 274.7,138.4 275.2,137.7 275.6,139.0 276.0,138.8 276.4,139.1 276.9,139.1 277.3,140.0 277.7,139.1 278.2,140.1 278.6,140.5 279.0,139.9 279.4,139.5 279.9,140.5 280.3,141.4 280.7,140.2 281.1,141.2 281.6,141.7 282.0,141.6 282.4,141.6 282.9,142.9 283.3,141.8 283.7,141.5 284.1,143.3 284.6,142.5 285.0,144.1 285.4,143.5 285.9,144.3 286.3,143.3 286.7,143.9 287.1,143.8 287.6,145.1 288.0,144.0 288.4,144.6 288.9,143.2 289.3,145.0 289.7,145.5 290.1,146.7 290.6,144.9 291.0,145.2 291.4,146.3 291.8,145.0 292.3,145.9 292.7,145.5 293.1,145.6 293.6,148.0 294.0,147.2 294.4,145.1 294.8,146.2 295.3,145.9 295.7,146.9 296.1,148.5 296.6,147.1 297.0,148.7 297.4,149.5 297.8,150.4 298.3,148.9 298.7,150.3 299.1,147.4 299.6,149.1 300.0,151.6 300.4,149.9 300.8,149.4 301.3,148.5 301.7,149.6 302.1,149.6 302.5,150.6 303.0,151.0 303.4,150.4 303.8,153.0 304.3,149.9 304.7,149.7 305.1,151.9 305.5,154.3 306.0,152.4 306.4,151.8 306.8,152.3 307.3,154.1 307.7,154.2 308.1,153.1 308.5,152.1 309.0,154.4 309.4,155.0 309.8,153.8 310.3,154.6 310.7,152.9 311.1,152.9 311.5,153.1 312.0,153.8 312.4,156.4 312.8,155.1 313.2,152.9 313.7,154.6 314.1,153.9 314.5,153.5 315.0,156.1 315.4,155.1 315.8,156.6 316.2,158.6 316.7,156.8 317.1,156.2 317.5,156.8 318.0,157.2 318.4,159.9 318.8,155.9 319.2,158.9 319.7,155.6 320.1,157.3 320.5,159.1 321.0,159.2 321.4,158.9 321.8,160.0 322.2,159.8 322.7,157.2 323.1,157.8 323.5,158.7 323.9,159.6 324.4,159.5 324.8,163.3 325.2,161.9 325.7,161.2 326.1,163.8 326.5,162.1 326.9,160.9 327.4,161.7 327.8,162.0 328.2,164.4 328.7,164.5 329.1,161.5 329.5,163.6 329.9,162.7 330.4,161.2 330.8,161.0 331.2,160.6 331.7,163.7 332.1,162.1 332.5,168.0 332.9,165.9 333.4,163.3 333.8,167.0 334.2,164.0 334.6,167.6 335.1,165.9 335.5,167.6 335.9,169.1 336.4,168.0 336.8,169.8 337.2,166.9 337.6,169.8 338.1,169.1 338.5,169.5 338.9,166.7 339.4,164.7 339.8,169.5 340.2,166.4 340.6,170.9 341.1,166.0 341.5,171.0 341.9,168.1 342.4,166.2 342.8,165.6 343.2,170.6 343.6,169.2 344.1,168.9 344.5,167.5 344.9,170.4 345.3,170.0 345.8,170.9 346.2,174.7 346.6,172.9 347.1,169.3 347.5,169.8 347.9,173.4 348.3,170.4 348.8,170.8 349.2,172.0 349.6,173.3 350.1,173.2 350.5,174.9 350.9,171.8 351.3,175.2 351.8,173.1 352.2,174.8 352.6,176.3 353.1,173.7 353.5,177.5 353.9,181.0 354.3,174.0 354.8,177.3 355.2,173.6 355.6,181.4 356.0,178.1 356.5,176.0 356.9,181.3 357.3,175.7 357.8,174.1 358.2,173.4 358.6,179.8 359.0,178.9 359.5,178.6 359.9,182.6 360.3,175.3 360.8,179.3 361.2,173.2 361.6,179.2 362.0,177.6 362.5,176.1 362.9,181.2 363.3,180.3 363.8,184.5 364.2,176.7 364.6,186.2 365.0,186.9 365.5,182.0 365.9,181.4 366.3,184.9 366.7,176.5 367.2,184.4 367.6,184.2 368.0,181.0 368.5,182.7 368.9,183.3 369.3,185.3 369.7,181.1 370.2,182.2 370.6,189.8 371.0,185.5 371.5,188.7 371.9,188.4 372.3,190.5 372.7,183.8 373.2,185.3 373.6,184.2 374.0,190.3 374.5,182.5 374.9,185.2 375.3,192.6 375.7,190.4 376.2,188.0 376.6,184.3 377.0,195.8 377.4,194.3 377.9,185.9 378.3,197.2 378.7,188.5 379.2,182.9 379.6,190.8 380.0,191.5 380.4,185.3 380.9,195.7 381.3,191.2 381.7,206.0 382.2,193.2 382.6,184.7 383.0,185.0 383.4,191.2 383.9,190.6 384.3,188.2 384.7,200.2 385.2,191.4 385.6,196.3 386.0,196.6 386.4,201.0 386.9,196.8 387.3,189.7 387.7,196.5 388.1,196.8 388.6,193.7 389.0,199.2 389.4,193.2 389.9,200.5 390.3,187.5 390.7,191.1 391.1,190.8 391.6,213.3 392.0,197.5 392.4,197.5 392.9,201.8 393.3,207.6 393.7,202.6 394.1,208.6 394.6,194.1 395.0,199.9 395.4,199.2 395.9,192.7 396.3,201.2 396.7,194.8 397.1,211.1 397.6,196.0 398.0,219.8 398.4,204.2 398.8,195.0 399.3,202.8 399.7,204.0 400.1,198.6 400.6,230.5 401.0,193.3 401.4,195.4 401.8,200.0 402.3,204.2 402.7,205.5 403.1,207.5 403.6,227.7 404.0,204.5 404.4,206.5 404.8,205.1 405.3,202.1 405.7,203.1 406.1,195.4 406.6,199.2 407.0,206.5 407.4,197.1 407.8,204.9 408.3,232.1 408.7,223.7 409.1,197.6 409.5,206.7 410.0,195.0 410.4,201.6 410.8,194.0 411.3,197.1 411.7,220.1 412.1,203.4 412.5,238.7 413.0,239.3 413.4,200.7 413.8,196.7 414.3,196.3 414.7,231.6 415.1,216.5 415.5,203.7 416.0,216.5 416.4,211.9 416.8,223.7 417.3,207.2 417.7,200.1 418.1,327.0 418.5,204.2 419.0,211.5 419.4,327.0 419.8,214.4 420.2,206.5 420.7,223.7 421.1,209.9 421.5,224.0 422.0,209.5 422.4,198.7 422.8,215.4 423.2,217.4 423.7,218.8 424.1,327.0 424.5,211.5 425.0,213.7 425.4,210.1 425.8,210.0 426.2,209.5 426.7,200.9 427.1,212.1 427.5,211.0 428.0,206.0 428.4,213.6 428.8,204.0 429.2,221.2 429.7,215.3 430.1,241.2 430.5,211.0 430.9,302.7 431.4,202.3 431.8,218.5 432.2,210.1 432.7,223.8 433.1,219.2 433.5,232.1 433.9,253.8 434.4,219.7 434.8,245.4 435.2,236.7 435.7,245.7 436.1,248.6 436.5,214.8 436.9,242.6 437.4,215.2 437.8,209.0 438.2,230.8 438.7,327.0 439.1,230.1 439.5,209.6 439.9,231.7 440.4,231.0 440.8,249.0 441.2,327.0 441.6,214.8 442.1,222.4 442.5,213.1 442.9,207.8 443.4,327.0 443.8,212.9 444.2,327.0 444.6,226.4 445.1,216.3 445.5,234.0 445.9,327.0 446.4,236.9 446.8,327.0 447.2,227.2 447.6,233.5 448.1,235.6 448.5,212.6 448.9,229.7 449.4,202.3 449.8,327.0 450.2,246.4 450.6,327.0 451.1,214.9 451.5,327.0 451.9,239.8 452.3,327.0 452.8,235.7 453.2,213.0 453.6,327.0 454.1,282.8 454.5,208.0 454.9,302.4 455.3,204.1 455.8,327.0 456.2,327.0 456.6,327.0 457.1,327.0 457.5,242.9 457.9,203.7 458.3,207.6 458.8,327.0 459.2,230.5 459.6,220.9 460.1,224.5 460.5,327.0 460.9,254.9 461.3,267.9 461.8,327.0 462.2,272.1 462.6,218.9 463.0,217.6 463.5,276.9 463.9,234.6 464.3,212.7 464.8,327.0 465.2,234.4 465.6,247.2 466.0,327.0 466.5,289.5 466.9,218.5 467.3,215.3 467.8,249.2 468.2,212.1 468.6,253.9 469.0,221.2 469.5,217.9 469.9,265.2 470.3,227.2 470.8,232.8 471.2,247.7 471.6,241.3 472.0,240.9 472.5,231.1 472.9,242.1 473.3,282.8 473.7,221.8 474.2,209.7 474.6,219.1 475.0,214.0 475.5,220.9 475.9,327.0 476.3,223.1 476.7,228.2 477.2,263.2 477.6,247.8 478.0,225.7 478.5,288.7 478.9,205.7 479.3,232.7 479.7,225.5 480.2,231.8 480.6,259.8 481.0,217.8 481.5,257.7 481.9,232.9 482.3,254.1 482.7,261.0 483.2,253.7 483.6,215.2 484.0,216.3 484.4,230.5 484.9,327.0 485.3,216.5 485.7,209.3 486.2,236.1 486.6,227.9 487.0,327.0 487.4,327.0 487.9,327.0 488.3,216.7 488.7,249.4 489.2,327.0 489.6,251.8 490.0,212.8 490.4,230.0 490.9,227.7 491.3,304.6 491.7,258.8 492.2,210.7 492.6,299.5 493.0,227.0 493.4,249.4 493.9,217.8 494.3,327.0 494.7,218.0 495.1,223.6 495.6,215.5 496.0,229.1 496.4,263.0 496.9,233.5 497.3,221.8 497.7,230.8 498.1,224.6 498.6,226.6 499.0,218.0 499.4,246.6 499.9,219.3 500.3,327.0 500.7,327.0 501.1,232.1 501.6,268.0 502.0,327.0 502.4,227.7 502.9,230.6 503.3,207.7 503.7,244.2 504.1,224.4 504.6,243.0 505.0,327.0 505.4,239.6 505.8,221.7 506.3,235.7 506.7,327.0 507.1,226.3 507.6,327.0 508.0,327.0 508.4,327.0 508.8,218.7 509.3,327.0 509.7,217.8 510.1,247.3 510.6,242.5 511.0,327.0 511.4,224.3 511.8,327.0 512.3,227.1 512.7,327.0 513.1,327.0 513.6,231.6 514.0,227.5 514.4,221.6 514.8,327.0 515.3,238.4 515.7,266.0 516.1,217.4 516.5,244.5 517.0,220.7 517.4,218.9 517.8,216.7 518.3,252.7 518.7,327.0 519.1,231.2 519.5,327.0 520.0,327.0 520.4,327.0 520.8,239.2 521.3,226.6 521.7,314.1 522.1,217.5 522.5,318.3 523.0,246.5 523.4,231.6 523.8,212.5 524.3,327.0 524.7,327.0 525.1,233.8 525.5,250.3 526.0,218.5 526.4,327.0 526.8,327.0 527.2,225.6 527.7,327.0 528.1,276.0 528.5,327.0 529.0,327.0 529.4,327.0 529.8,248.3 530.2,327.0 530.7,231.6 531.1,327.0 531.5,327.0 532.0,327.0 532.4,226.3 532.8,218.5 533.2,327.0 533.7,327.0 534.1,241.7 534.5,327.0 535.0,221.2 535.4,231.7 535.8,327.0 536.2,212.4 536.7,327.0 537.1,327.0 537.5,327.0 537.9,220.5 538.4,327.0 538.8,213.5 539.2,327.0 539.7,271.0 540.1,257.2 540.5,226.1 540.9,230.7 541.4,219.6 541.8,224.6 542.2,218.1 542.7,270.5 543.1,327.0 543.5,244.4 543.9,327.0 544.4,241.4 544.8,327.0 545.2,327.0 545.7,287.5 546.1,241.6 546.5,327.0 546.9,248.1 547.4,327.0 547.8,220.4 548.2,219.9 548.6,327.0 549.1,327.0 549.5,327.0 549.9,327.0 550.4,231.8 550.8,327.0 551.2,327.0 551.6,327.0 552.1,262.3 552.5,260.7 552.9,327.0 553.4,327.0 553.8,223.9 554.2,246.1 554.6,214.4 555.1,327.0 555.5,251.6 555.9,299.1 556.4,237.4 556.8,252.9 557.2,220.8 557.6,327.0 558.1,327.0 558.5,327.0 558.9,285.3 559.3,327.0 559.8,327.0 560.2,327.0 560.6,327.0 561.1,327.0 561.5,233.5 561.9,231.2 562.3,225.6 562.8,230.6 563.2,327.0 563.6,327.0 564.1,245.3 564.5,227.4 564.9,233.4 565.3,327.0 565.8,327.0 566.2,327.0 566.6,243.1 567.1,227.4 567.5,327.0 567.9,327.0 568.3,240.7 568.8,327.0 569.2,212.3 569.6,327.0 570.0,254.1 570.5,224.3 570.9,232.3 571.3,327.0 571.8,327.0 572.2,221.4 572.6,272.5 573.0,327.0 573.5,327.0 573.9,249.8 574.3,294.0 574.8,241.0 575.2,231.3 575.6,286.6 576.0,234.2 576.5,257.9 576.9,233.9 577.3,327.0 577.8,228.9 578.2,259.8 578.6,248.7 579.0,254.4 579.5,327.0 579.9,327.0 580.3,327.0 580.7,219.3 581.2,327.0 581.6,327.0 582.0,216.2 582.5,327.0 582.9,262.4 583.3,238.7 583.7,246.9 584.2,327.0 584.6,257.2 585.0,327.0 585.5,327.0 585.9,235.2 586.3,243.5 586.7,327.0 587.2,222.0 587.6,221.4 588.0,213.0 588.5,220.0 588.9,226.4 589.3,327.0" fill="none" stroke="#a6f0a6" stroke-width="1" stroke-linejoin="round" /><polyline points="66.3,327.0 66.7,327.0 67.1,327.0 67.6,265.5 68.0,327.0 68.4,266.8 68.9,327.0 69.3,327.0 69.7,240.3 70.1,327.0 70.6,327.0 71.0,228.1 71.4,247.0 71.9,327.0 72.3,238.0 72.7,327.0 73.1,327.0 73.6,239.0 74.0,327.0 74.4,227.8 74.9,241.2 75.3,327.0 75.7,237.8 76.1,327.0 76.6,327.0 77.0,268.7 77.4,248.3 77.8,269.4 78.3,237.7 78.7,289.2 79.1,327.0 79.6,327.0 80.0,327.0 80.4,327.0 80.8,327.0 81.3,327.0 81.7,248.3 82.1,327.0 82.6,252.6 83.0,327.0 83.4,225.9 83.8,237.3 84.3,327.0 84.7,327.0 85.1,327.0 85.6,327.0 86.0,327.0 86.4,327.0 86.8,327.0 87.3,239.1 87.7,241.9 88.1,327.0 88.5,327.0 89.0,254.1 89.4,249.1 89.8,243.8 90.3,327.0 90.7,267.3 91.1,262.7 91.5,236.7 92.0,327.0 92.4,235.3 92.8,327.0 93.3,327.0 93.7,218.7 94.1,327.0 94.5,327.0 95.0,327.0 95.4,327.0 95.8,327.0 96.3,235.0 96.7,219.0 97.1,327.0 97.5,245.8 98.0,235.6 98.4,327.0 98.8,327.0 99.2,327.0 99.7,327.0 100.1,327.0 100.5,327.0 101.0,248.9 101.4,327.0 101.8,260.5 102.2,327.0 102.7,327.0 103.1,327.0 103.5,327.0 104.0,327.0 104.4,327.0 104.8,327.0 105.2,224.5 105.7,327.0 106.1,241.5 106.5,327.0 107.0,220.0 107.4,327.0 107.8,327.0 108.2,200.1 108.7,162.8 109.1,143.3 109.5,124.8 109.9,113.1 110.4,102.1 110.8,92.7 111.2,85.5 111.7,78.6 112.1,71.9 112.5,68.9 112.9,65.9 113.4,63.2 113.8,60.2 114.2,57.3 114.7,55.8 115.1,54.3 115.5,52.9 115.9,51.3 116.4,49.9 116.8,48.4 117.2,47.3 117.7,46.6 118.1,46.0 118.5,45.4 118.9,44.8 119.4,44.1 119.8,43.5 120.2,42.9 120.6,42.7 121.1,42.7 121.5,42.6 121.9,42.4 122.4,42.3 122.8,42.3 123.2,42.1 123.6,42.2 124.1,42.3 124.5,42.4 124.9,42.6 125.4,42.8 125.8,43.0 126.2,43.2 126.6,43.6 127.1,43.7 127.5,44.1 127.9,44.4 128.4,44.7 128.8,44.9 129.2,45.2 129.6,45.5 130.1,45.7 130.5,46.1 130.9,46.4 131.3,46.6 131.8,46.8 132.2,47.2 132.6,47.5 133.1,47.7 133.5,48.0 133.9,48.3 134.3,48.6 134.8,48.9 135.2,49.2 135.6,49.4 136.1,49.6 136.5,50.0 136.9,50.2 137.3,50.6 137.8,50.8 138.2,51.1 138.6,51.4 139.1,51.7 139.5,52.0 139.9,52.2 140.3,52.5 140.8,52.9 141.2,53.1 141.6,53.4 142.0,53.7 142.5,54.0 142.9,54.2 143.3,54.4 143.8,54.7 144.2,55.0 144.6,55.4 145.0,55.6 145.5,56.0 145.9,56.2 146.3,56.4 146.8,56.6 147.2,56.9 147.6,57.2 148.0,57.4 148.5,57.7 148.9,57.9 149.3,58.2 149.8,58.3 150.2,58.7 150.6,59.0 151.0,59.2 151.5,59.5 151.9,59.7 152.3,59.9 152.7,60.3 153.2,60.5 153.6,60.7 154.0,60.9 154.5,61.2 154.9,61.4 155.3,61.7 155.7,62.0 156.2,62.3 156.6,62.5 157.0,62.7 157.5,62.9 157.9,63.1 158.3,63.6 158.7,63.8 159.2,63.9 159.6,64.3 160.0,64.5 160.5,64.6 160.9,64.9 161.3,65.2 161.7,65.5 162.2,65.8 162.6,66.0 163.0,66.2 163.4,66.6 163.9,66.6 164.3,67.0 164.7,67.2 165.2,67.6 165.6,67.8 166.0,68.0 166.4,68.2 166.9,68.5 167.3,68.7 167.7,69.1 168.2,69.3 168.6,69.4 169.0,69.8 169.4,69.9 169.9,70.3 170.3,70.6 170.7,70.7 171.2,71.0 171.6,71.3 172.0,71.5 172.4,71.6 172.9,72.0 173.3,72.2 173.7,72.6 174.1,72.7 174.6,73.1 175.0,73.4 175.4,73.7 175.9,73.9 176.3,73.9 176.7,74.4 177.1,74.7 177.6,74.9 178.0,75.2 178.4,75.4 178.9,75.6 179.3,75.7 179.7,76.0 180.1,76.3 180.6,76.7 181.0,76.8 181.4,77.1 181.9,77.2 182.3,77.7 182.7,77.9 183.1,78.1 183.6,78.3 184.0,78.6 184.4,79.0 184.8,79.1 185.3,79.5 185.7,79.6 186.1,79.9 186.6,80.2 187.0,80.3 187.4,80.7 187.8,80.8 188.3,81.0 188.7,81.4 189.1,81.7 189.6,81.8 190.0,82.0 190.4,82.1 190.8,82.6 191.3,82.9 191.7,83.0 192.1,83.5 192.6,83.4 193.0,83.7 193.4,83.9 193.8,84.1 194.3,84.4 194.7,84.6 195.1,84.8 195.5,85.1 196.0,85.2 196.4,85.6 196.8,86.1 197.3,86.1 197.7,86.4 198.1,86.5 198.5,86.6 199.0,87.3 199.4,87.1 199.8,87.6 200.3,87.6 200.7,87.9 201.1,88.2 201.5,88.5 202.0,88.5 202.4,89.1 202.8,89.2 203.3,89.5 203.7,89.7 204.1,89.9 204.5,90.2 205.0,90.5 205.4,90.5 205.8,90.7 206.2,91.2 206.7,91.4 207.1,91.7 207.5,91.7 208.0,92.0 208.4,92.3 208.8,92.5 209.2,92.7 209.7,93.1 210.1,93.2 210.5,93.1 211.0,93.8 211.4,93.9 211.8,94.1 212.2,94.6 212.7,94.7 213.1,95.0 213.5,95.0 214.0,95.3 214.4,95.5 214.8,95.7 215.2,95.8 215.7,96.2 216.1,96.4 216.5,96.7 216.9,96.6 217.4,97.1 217.8,97.3 218.2,97.6 218.7,97.8 219.1,98.2 219.5,98.5 219.9,98.8 220.4,98.9 220.8,98.8 221.2,99.3 221.7,99.5 222.1,99.6 222.5,100.0 222.9,100.3 223.4,100.6 223.8,100.9 224.2,100.8 224.7,101.0 225.1,101.5 225.5,101.7 225.9,101.9 226.4,102.0 226.8,102.7 227.2,102.8 227.6,102.6 228.1,103.0 228.5,103.1 228.9,103.6 229.4,104.0 229.8,104.0 230.2,104.5 230.6,105.0 231.1,104.8 231.5,105.0 231.9,105.4 232.4,105.4 232.8,105.5 233.2,105.7 233.6,106.2 234.1,106.2 234.5,106.5 234.9,106.7 235.4,107.2 235.8,107.0 236.2,107.4 236.6,107.6 237.1,107.7 237.5,108.5 237.9,108.5 238.3,108.6 238.8,109.1 239.2,109.0 239.6,109.5 240.1,109.1 240.5,109.7 240.9,109.6 241.3,110.1 241.8,110.1 242.2,110.2 242.6,110.9 243.1,111.1 243.5,111.0 243.9,111.4 244.3,111.5 244.8,111.7 245.2,112.1 245.6,112.3 246.1,112.9 246.5,112.6 246.9,113.4 247.3,113.2 247.8,113.3 248.2,113.9 248.6,114.1 249.0,113.8 249.5,113.9 249.9,114.4 250.3,114.9 250.8,115.2 251.2,115.1 251.6,115.3 252.0,115.4 252.5,116.1 252.9,115.8 253.3,116.0 253.8,116.3 254.2,116.5 254.6,117.1 255.0,117.3 255.5,117.1 255.9,117.7 256.3,117.7 256.8,118.1 257.2,118.1 257.6,118.5 258.0,118.2 258.5,118.6 258.9,119.2 259.3,119.2 259.7,120.1 260.2,120.0 260.6,119.8 261.0,120.2 261.5,120.3 261.9,120.4 262.3,120.8 262.7,121.4 263.2,121.4 263.6,121.2 264.0,122.1 264.5,122.0 264.9,122.0 265.3,123.1 265.7,123.0 266.2,123.0 266.6,123.3 267.0,122.9 267.5,123.6 267.9,123.8 268.3,123.4 268.7,124.2 269.2,123.9 269.6,125.1 270.0,124.7 270.4,124.9 270.9,125.1 271.3,125.3 271.7,126.1 272.2,126.2 272.6,126.2 273.0,126.4 273.4,126.0 273.9,126.8 274.3,126.7 274.7,126.6 275.2,127.3 275.6,127.2 276.0,127.3 276.4,128.5 276.9,127.4 277.3,128.7 277.7,128.6 278.2,128.4 278.6,128.8 279.0,129.2 279.4,129.4 279.9,130.2 280.3,129.7 280.7,129.9 281.1,130.0 281.6,130.9 282.0,131.0 282.4,130.7 282.9,131.4 283.3,131.4 283.7,132.0 284.1,131.6 284.6,132.0 285.0,131.5 285.4,132.7 285.9,133.1 286.3,132.8 286.7,133.6 287.1,132.9 287.6,133.6 288.0,134.3 288.4,134.8 288.9,133.8 289.3,134.2 289.7,134.3 290.1,135.1 290.6,136.0 291.0,134.9 291.4,134.7 291.8,135.4 292.3,135.2 292.7,136.1 293.1,136.9 293.6,137.8 294.0,136.8 294.4,136.8 294.8,137.5 295.3,137.5 295.7,138.4 296.1,138.2 296.6,138.3 297.0,138.0 297.4,138.5 297.8,138.5 298.3,139.8 298.7,139.3 299.1,140.5 299.6,140.7 300.0,140.0 300.4,140.2 300.8,140.5 301.3,140.7 301.7,141.6 302.1,140.9 302.5,140.7 303.0,141.3 303.4,141.7 303.8,141.9 304.3,142.5 304.7,142.7 305.1,142.6 305.5,142.3 306.0,143.8 306.4,143.8 306.8,144.1 307.3,143.1 307.7,143.6 308.1,143.8 308.5,145.1 309.0,145.2 309.4,144.2 309.8,144.1 310.3,146.4 310.7,144.6 311.1,145.2 311.5,145.9 312.0,146.3 312.4,145.3 312.8,145.1 313.2,145.3 313.7,145.8 314.1,147.5 314.5,147.2 315.0,147.1 315.4,146.2 315.8,147.9 316.2,148.3 316.7,148.9 317.1,148.9 317.5,148.9 318.0,149.1 318.4,149.1 318.8,149.4 319.2,150.1 319.7,148.0 320.1,148.6 320.5,149.9 321.0,150.7 321.4,149.0 321.8,151.1 322.2,150.0 322.7,151.0 323.1,150.7 323.5,150.2 323.9,151.4 324.4,151.5 324.8,152.9 325.2,152.1 325.7,151.8 326.1,151.3 326.5,151.9 326.9,152.3 327.4,153.7 327.8,153.9 328.2,153.2 328.7,153.3 329.1,156.0 329.5,155.3 329.9,152.9 330.4,154.8 330.8,155.4 331.2,156.7 331.7,155.2 332.1,154.5 332.5,154.4 332.9,155.1 333.4,156.9 333.8,156.8 334.2,156.9 334.6,155.5 335.1,156.6 335.5,157.3 335.9,158.0 336.4,158.7 336.8,158.0 337.2,156.5 337.6,158.5 338.1,159.4 338.5,159.0 338.9,159.3 339.4,159.5 339.8,159.9 340.2,158.6 340.6,161.2 341.1,160.6 341.5,159.3 341.9,161.2 342.4,160.5 342.8,160.9 343.2,162.4 343.6,161.0 344.1,161.2 344.5,160.2 344.9,162.7 345.3,162.6 345.8,162.4 346.2,160.4 346.6,162.5 347.1,162.5 347.5,164.4 347.9,162.5 348.3,163.9 348.8,165.9 349.2,164.3 349.6,165.2 350.1,164.9 350.5,165.5 350.9,163.2 351.3,164.8 351.8,162.0 352.2,165.3 352.6,165.2 353.1,165.3 353.5,167.0 353.9,163.0 354.3,166.1 354.8,167.6 355.2,167.1 355.6,166.4 356.0,167.7 356.5,167.3 356.9,164.2 357.3,166.4 357.8,166.9 358.2,168.5 358.6,170.4 359.0,167.6 359.5,168.8 359.9,171.1 360.3,170.3 360.8,172.1 361.2,170.2 361.6,170.6 362.0,168.5 362.5,168.0 362.9,168.7 363.3,170.6 363.8,169.4 364.2,175.1 364.6,170.0 365.0,168.9 365.5,171.2 365.9,171.4 366.3,171.5 366.7,172.4 367.2,171.2 367.6,175.8 368.0,175.7 368.5,174.7 368.9,172.6 369.3,171.3 369.7,176.2 370.2,176.2 370.6,173.2 371.0,174.3 371.5,173.0 371.9,176.6 372.3,174.3 372.7,173.1 373.2,174.1 373.6,177.8 374.0,175.9 374.5,173.5 374.9,174.5 375.3,174.7 375.7,177.1 376.2,176.3 376.6,173.5 377.0,177.5 377.4,176.9 377.9,173.4 378.3,182.4 378.7,180.5 379.2,179.1 379.6,179.4 380.0,178.4 380.4,180.9 380.9,177.9 381.3,176.4 381.7,184.6 382.2,178.4 382.6,182.2 383.0,179.6 383.4,180.8 383.9,180.1 384.3,177.4 384.7,180.6 385.2,180.7 385.6,181.5 386.0,184.3 386.4,186.5 386.9,183.6 387.3,180.4 387.7,182.9 388.1,183.8 388.6,181.2 389.0,181.8 389.4,187.7 389.9,186.6 390.3,182.6 390.7,185.0 391.1,183.5 391.6,187.6 392.0,187.8 392.4,182.1 392.9,188.1 393.3,188.1 393.7,182.5 394.1,182.0 394.6,182.7 395.0,180.7 395.4,185.3 395.9,186.2 396.3,185.7 396.7,187.9 397.1,191.6 397.6,186.4 398.0,190.4 398.4,195.2 398.8,190.5 399.3,186.6 399.7,189.3 400.1,186.4 400.6,195.3 401.0,194.5 401.4,186.7 401.8,189.4 402.3,187.8 402.7,190.5 403.1,191.9 403.6,188.3 404.0,189.9 404.4,190.2 404.8,190.5 405.3,192.8 405.7,199.8 406.1,191.7 406.6,186.1 407.0,192.5 407.4,194.9 407.8,192.8 408.3,191.1 408.7,192.5 409.1,201.2 409.5,193.9 410.0,194.5 410.4,191.3 410.8,188.0 411.3,205.2 411.7,203.0 412.1,190.2 412.5,193.8 413.0,196.6 413.4,194.0 413.8,201.3 414.3,193.2 414.7,193.5 415.1,195.2 415.5,191.7 416.0,192.8 416.4,202.0 416.8,192.2 417.3,200.7 417.7,194.8 418.1,201.5 418.5,201.9 419.0,205.5 419.4,191.6 419.8,203.5 420.2,202.3 420.7,203.5 421.1,197.3 421.5,199.9 422.0,197.9 422.4,192.1 422.8,199.7 423.2,205.1 423.7,214.3 424.1,201.6 424.5,205.6 425.0,204.0 425.4,194.6 425.8,196.7 426.2,204.0 426.7,205.6 427.1,213.1 427.5,193.7 428.0,212.2 428.4,208.3 428.8,207.4 429.2,203.1 429.7,198.4 430.1,204.4 430.5,212.0 430.9,200.3 431.4,197.3 431.8,217.7 432.2,217.3 432.7,198.8 433.1,209.5 433.5,203.5 433.9,206.7 434.4,203.9 434.8,209.2 435.2,200.9 435.7,207.1 436.1,219.7 436.5,206.9 436.9,215.9 437.4,216.5 437.8,218.0 438.2,218.4 438.7,215.0 439.1,209.0 439.5,200.6 439.9,204.3 440.4,204.8 440.8,219.3 441.2,212.2 441.6,203.2 442.1,222.6 442.5,216.1 442.9,210.0 443.4,197.4 443.8,211.7 444.2,206.7 444.6,217.6 445.1,221.7 445.5,215.9 445.9,202.0 446.4,204.2 446.8,207.7 447.2,218.2 447.6,212.9 448.1,226.9 448.5,213.2 448.9,207.2 449.4,223.7 449.8,216.1 450.2,231.6 450.6,221.1 451.1,220.6 451.5,223.3 451.9,234.5 452.3,216.8 452.8,229.7 453.2,223.2 453.6,229.6 454.1,220.2 454.5,213.3 454.9,211.1 455.3,220.3 455.8,230.5 456.2,228.8 456.6,327.0 457.1,224.4 457.5,218.9 457.9,239.5 458.3,215.8 458.8,212.5 459.2,243.7 459.6,215.0 460.1,229.7 460.5,212.3 460.9,213.5 461.3,230.9 461.8,207.5 462.2,227.4 462.6,219.7 463.0,209.1 463.5,239.4 463.9,215.0 464.3,327.0 464.8,218.5 465.2,219.2 465.6,225.5 466.0,233.5 466.5,225.9 466.9,238.9 467.3,327.0 467.8,219.7 468.2,327.0 468.6,274.2 469.0,230.8 469.5,238.6 469.9,232.7 470.3,211.6 470.8,235.2 471.2,220.8 471.6,229.5 472.0,221.2 472.5,213.2 472.9,207.3 473.3,218.1 473.7,327.0 474.2,212.6 474.6,219.2 475.0,227.6 475.5,218.7 475.9,246.2 476.3,223.8 476.7,226.4 477.2,327.0 477.6,225.2 478.0,229.2 478.5,255.2 478.9,327.0 479.3,327.0 479.7,230.4 480.2,271.9 480.6,269.3 481.0,221.1 481.5,240.3 481.9,250.7 482.3,221.7 482.7,218.1 483.2,222.0 483.6,211.9 484.0,241.0 484.4,327.0 484.9,233.8 485.3,231.7 485.7,327.0 486.2,276.7 486.6,230.9 487.0,327.0 487.4,327.0 487.9,327.0 488.3,243.0 488.7,300.8 489.2,255.1 489.6,327.0 490.0,327.0 490.4,239.6 490.9,210.7 491.3,248.7 491.7,224.6 492.2,229.2 492.6,327.0 493.0,241.0 493.4,327.0 493.9,327.0 494.3,293.1 494.7,231.7 495.1,327.0 495.6,245.8 496.0,239.6 496.4,250.3 496.9,216.9 497.3,239.0 497.7,327.0 498.1,221.6 498.6,327.0 499.0,284.1 499.4,327.0 499.9,327.0 500.3,228.7 500.7,221.5 501.1,216.7 501.6,246.5 502.0,224.7 502.4,235.9 502.9,253.8 503.3,214.7 503.7,327.0 504.1,267.1 504.6,239.9 505.0,327.0 505.4,230.8 505.8,258.3 506.3,327.0 506.7,228.6 507.1,217.7 507.6,327.0 508.0,327.0 508.4,234.8 508.8,271.8 509.3,327.0 509.7,243.9 510.1,244.6 510.6,259.6 511.0,247.2 511.4,225.7 511.8,234.8 512.3,219.0 512.7,248.0 513.1,248.8 513.6,226.3 514.0,235.0 514.4,327.0 514.8,264.7 515.3,232.5 515.7,327.0 516.1,226.6 516.5,273.6 517.0,214.5 517.4,327.0 517.8,231.0 518.3,221.2 518.7,274.8 519.1,225.3 519.5,215.8 520.0,327.0 520.4,327.0 520.8,244.4 521.3,327.0 521.7,327.0 522.1,233.2 522.5,215.2 523.0,327.0 523.4,327.0 523.8,218.1 524.3,232.8 524.7,224.9 525.1,327.0 525.5,226.0 526.0,243.0 526.4,246.9 526.8,327.0 527.2,262.1 527.7,327.0 528.1,327.0 528.5,264.6 529.0,327.0 529.4,327.0 529.8,265.4 530.2,241.5 530.7,282.8 531.1,233.0 531.5,221.2 532.0,250.5 532.4,327.0 532.8,239.3 533.2,327.0 533.7,216.3 534.1,327.0 534.5,259.4 535.0,327.0 535.4,327.0 535.8,327.0 536.2,255.1 536.7,327.0 537.1,327.0 537.5,239.4 537.9,327.0 538.4,234.0 538.8,327.0 539.2,327.0 539.7,246.1 540.1,327.0 540.5,231.7 540.9,284.8 541.4,327.0 541.8,254.3 542.2,268.3 542.7,327.0 543.1,248.8 543.5,250.1 543.9,327.0 544.4,327.0 544.8,327.0 545.2,327.0 545.7,231.8 546.1,327.0 546.5,327.0 546.9,234.3 547.4,327.0 547.8,327.0 548.2,327.0 548.6,216.8 549.1,252.1 549.5,327.0 549.9,224.5 550.4,222.6 550.8,327.0 551.2,237.6 551.6,237.4 552.1,233.6 552.5,216.8 552.9,278.6 553.4,224.4 553.8,221.3 554.2,232.6 554.6,255.0 555.1,245.0 555.5,327.0 555.9,217.0 556.4,234.1 556.8,327.0 557.2,233.2 557.6,327.0 558.1,327.0 558.5,261.7 558.9,242.5 559.3,221.4 559.8,327.0 560.2,327.0 560.6,327.0 561.1,313.4 561.5,240.5 561.9,228.0 562.3,267.9 562.8,219.3 563.2,226.4 563.6,327.0 564.1,262.3 564.5,243.4 564.9,327.0 565.3,327.0 565.8,327.0 566.2,327.0 566.6,300.4 567.1,327.0 567.5,236.7 567.9,327.0 568.3,283.2 568.8,231.9 569.2,327.0 569.6,327.0 570.0,259.4 570.5,243.3 570.9,265.7 571.3,233.5 571.8,254.6 572.2,327.0 572.6,327.0 573.0,232.1 573.5,327.0 573.9,327.0 574.3,327.0 574.8,313.6 575.2,245.4 575.6,327.0 576.0,327.0 576.5,257.9 576.9,327.0 577.3,327.0 577.8,327.0 578.2,233.2 578.6,327.0 579.0,224.7 579.5,327.0 579.9,327.0 580.3,286.7 580.7,276.5 581.2,224.9 581.6,217.9 582.0,327.0 582.5,327.0 582.9,327.0 583.3,327.0 583.7,327.0 584.2,327.0 584.6,327.0 585.0,246.8 585.5,327.0 585.9,327.0 586.3,327.0 586.7,228.7 587.2,242.4 587.6,251.2 588.0,327.0 588.5,225.1 588.9,327.0 589.3,218.8" fill="none" stroke="#ffa4a4" stroke-width="1.6" stroke-linejoin="round" /><polyline points="60.3,163.8 60.7,162.0 61.2,160.4 61.6,162.9 62.0,164.2 62.4,163.2 62.9,162.0 63.3,163.3 63.7,163.1 64.2,163.3 64.6,162.1 65.0,162.9 65.4,162.0 65.9,160.9 66.3,162.4 66.7,161.6 67.1,161.6 67.6,161.2 68.0,160.6 68.4,162.5 68.9,161.9 69.3,163.1 69.7,162.9 70.1,163.8 70.6,162.4 71.0,164.0 71.4,164.5 71.9,161.5 72.3,163.4 72.7,162.0 73.1,163.7 73.6,162.3 74.0,163.9 74.4,162.1 74.9,161.4 75.3,163.2 75.7,164.1 76.1,162.4 76.6,161.6 77.0,162.9 77.4,162.7 77.8,163.2 78.3,163.1 78.7,163.1 79.1,163.5 79.6,163.1 80.0,161.8 80.4,163.0 80.8,160.8 81.3,160.9 81.7,163.0 82.1,163.1 82.6,162.7 83.0,162.7 83.4,163.4 83.8,164.2 84.3,162.8 84.7,162.8 85.1,162.9 85.6,161.6 86.0,162.4 86.4,162.7 86.8,161.6 87.3,162.0 87.7,162.7 88.1,163.5 88.5,163.0 89.0,162.5 89.4,162.4 89.8,163.4 90.3,163.9 90.7,163.6 91.1,161.2 91.5,162.2 92.0,162.6 92.4,163.5 92.8,163.6 93.3,163.2 93.7,164.1 94.1,164.0 94.5,161.8 95.0,160.6 95.4,162.7 95.8,162.6 96.3,162.4 96.7,162.9 97.1,162.9 97.5,162.1 98.0,163.8 98.4,162.8 98.8,161.8 99.2,160.6 99.7,161.9 100.1,162.8 100.5,162.3 101.0,162.4 101.4,162.6 101.8,163.0 102.2,162.5 102.7,162.5 103.1,162.6 103.5,161.9 104.0,162.4 104.4,162.3 104.8,162.6 105.2,162.2 105.7,162.5 106.1,162.8 106.5,162.9 107.0,161.8 107.4,160.9 107.8,162.9 108.2,158.0 108.7,145.5 109.1,133.5 109.5,117.8 109.9,107.3 110.4,96.4 110.8,87.5 111.2,80.7 111.7,74.4 112.1,67.7 112.5,64.8 112.9,61.9 113.4,59.0 113.8,56.2 114.2,53.3 114.7,51.8 115.1,50.3 115.5,48.9 115.9,47.5 116.4,46.0 116.8,44.4 117.2,43.5 117.7,42.8 118.1,42.2 118.5,41.6 118.9,41.0 119.4,40.4 119.8,39.7 120.2,39.1 120.6,38.9 121.1,38.9 121.5,38.7 121.9,38.7 122.4,38.5 122.8,38.5 123.2,38.3 123.6,38.4 124.1,38.5 124.5,38.7 124.9,38.8 125.4,38.9 125.8,39.1 126.2,39.4 126.6,39.7 127.1,39.8 127.5,40.2 127.9,40.5 128.4,40.7 128.8,41.0 129.2,41.3 129.6,41.6 130.1,41.8 130.5,42.2 130.9,42.3 131.3,42.6 131.8,42.9 132.2,43.0 132.6,43.4 133.1,43.6 133.5,44.0 133.9,44.2 134.3,44.4 134.8,44.7 135.2,44.9 135.6,45.3 136.1,45.6 136.5,45.8 136.9,46.2 137.3,46.3 137.8,46.7 138.2,46.9 138.6,47.2 139.1,47.6 139.5,47.8 139.9,48.1 140.3,48.3 140.8,48.5 141.2,48.8 141.6,49.1 142.0,49.4 142.5,49.6 142.9,49.9 143.3,50.1 143.8,50.4 144.2,50.8 144.6,50.9 145.0,51.3 145.5,51.5 145.9,51.7 146.3,52.1 146.8,52.3 147.2,52.4 147.6,52.7 148.0,52.9 148.5,53.1 148.9,53.4 149.3,53.6 149.8,53.9 150.2,54.0 150.6,54.3 151.0,54.5 151.5,54.7 151.9,54.8 152.3,55.2 152.7,55.4 153.2,55.6 153.6,55.9 154.0,56.1 154.5,56.3 154.9,56.4 155.3,56.7 155.7,56.9 156.2,57.1 156.6,57.4 157.0,57.6 157.5,57.8 157.9,58.1 158.3,58.4 158.7,58.6 159.2,58.7 159.6,59.0 160.0,59.2 160.5,59.4 160.9,59.6 161.3,59.9 161.7,60.0 162.2,60.3 162.6,60.5 163.0,60.8 163.4,61.0 163.9,61.2 164.3,61.4 164.7,61.8 165.2,61.9 165.6,62.1 166.0,62.4 166.4,62.5 166.9,62.7 167.3,62.9 167.7,63.4 168.2,63.4 168.6,63.6 169.0,63.9 169.4,64.2 169.9,64.4 170.3,64.5 170.7,64.7 171.2,65.1 171.6,65.2 172.0,65.4 172.4,65.5 172.9,65.9 173.3,66.1 173.7,66.4 174.1,66.7 174.6,66.8 175.0,67.0 175.4,67.2 175.9,67.7 176.3,67.6 176.7,68.0 177.1,67.9 177.6,68.2 178.0,68.4 178.4,68.8 178.9,69.1 179.3,69.3 179.7,69.5 180.1,69.6 180.6,69.8 181.0,70.1 181.4,70.4 181.9,70.4 182.3,70.7 182.7,71.0 183.1,71.2 183.6,71.2 184.0,71.6 184.4,71.9 184.8,71.9 185.3,72.2 185.7,72.6 186.1,72.8 186.6,72.8 187.0,73.1 187.4,73.3 187.8,73.3 188.3,73.9 188.7,73.9 189.1,74.2 189.6,74.5 190.0,74.5 190.4,74.9 190.8,75.0 191.3,75.5 191.7,75.4 192.1,75.8 192.6,76.1 193.0,76.2 193.4,76.5 193.8,76.7 194.3,76.9 194.7,77.1 195.1,77.4 195.5,77.7 196.0,77.8 196.4,77.8 196.8,78.3 197.3,78.5 197.7,78.8 198.1,78.9 198.5,79.3 199.0,79.3 199.4,79.6 199.8,80.0 200.3,80.0 200.7,80.4 201.1,80.6 201.5,80.7 202.0,81.1 202.4,81.2 202.8,81.2 203.3,81.5 203.7,81.9 204.1,82.2 204.5,82.3 205.0,82.5 205.4,82.6 205.8,83.0 206.2,83.3 206.7,83.5 207.1,83.5 207.5,83.6 208.0,84.1 208.4,84.3 208.8,84.7 209.2,84.8 209.7,85.0 210.1,85.1 210.5,85.2 211.0,85.8 211.4,85.8 211.8,86.3 212.2,86.3 212.7,86.3 213.1,86.8 213.5,87.0 214.0,87.2 214.4,87.4 214.8,87.4 215.2,87.7 215.7,88.3 216.1,88.4 216.5,88.5 216.9,88.9 217.4,88.8 217.8,89.2 218.2,89.4 218.7,89.7 219.1,89.8 219.5,89.9 219.9,90.2 220.4,90.7 220.8,90.7 221.2,90.9 221.7,91.3 222.1,91.5 222.5,91.7 222.9,91.8 223.4,91.9 223.8,92.6 224.2,92.5 224.7,92.9 225.1,92.9 225.5,93.3 225.9,93.1 226.4,93.8 226.8,94.1 227.2,93.6 227.6,94.5 228.1,94.1 228.5,95.2 228.9,95.1 229.4,95.3 229.8,95.5 230.2,95.4 230.6,95.4 231.1,96.1 231.5,96.1 231.9,96.2 232.4,96.4 232.8,96.6 233.2,97.3 233.6,97.3 234.1,97.5 234.5,97.7 234.9,97.9 235.4,97.9 235.8,98.5 236.2,98.4 236.6,98.7 237.1,98.8 237.5,99.1 237.9,99.4 238.3,99.7 238.8,99.3 239.2,99.9 239.6,100.0 240.1,100.2 240.5,100.3 240.9,100.9 241.3,100.9 241.8,101.0 242.2,101.3 242.6,101.1 243.1,102.1 243.5,102.0 243.9,102.1 244.3,101.9 244.8,102.4 245.2,102.5 245.6,102.7 246.1,103.3 246.5,102.9 246.9,103.2 247.3,103.3 247.8,103.5 248.2,104.0 248.6,104.2 249.0,104.7 249.5,104.5 249.9,104.6 250.3,105.1 250.8,105.5 251.2,105.5 251.6,105.6 252.0,106.1 252.5,105.9 252.9,105.9 253.3,106.3 253.8,106.7 254.2,107.0 254.6,106.8 255.0,107.2 255.5,106.9 255.9,108.0 256.3,107.7 256.8,107.9 257.2,108.4 257.6,109.0 258.0,108.4 258.5,108.4 258.9,108.7 259.3,108.9 259.7,109.2 260.2,109.4 260.6,110.2 261.0,109.5 261.5,110.0 261.9,110.3 262.3,110.4 262.7,110.5 263.2,111.0 263.6,111.4 264.0,111.6 264.5,111.5 264.9,111.4 265.3,111.6 265.7,112.1 266.2,112.2 266.6,112.4 267.0,112.8 267.5,112.8 267.9,113.1 268.3,113.4 268.7,113.5 269.2,113.5 269.6,114.4 270.0,114.4 270.4,114.2 270.9,114.4 271.3,115.0 271.7,115.4 272.2,114.9 272.6,115.1 273.0,115.0 273.4,115.5 273.9,115.6 274.3,116.2 274.7,116.0 275.2,116.6 275.6,116.5 276.0,116.6 276.4,116.7 276.9,116.6 277.3,116.7 277.7,117.0 278.2,117.3 278.6,118.1 279.0,118.2 279.4,118.1 279.9,118.6 280.3,118.2 280.7,119.0 281.1,118.5 281.6,118.8 282.0,118.6 282.4,119.0 282.9,119.9 283.3,120.1 283.7,119.8 284.1,119.6 284.6,120.3 285.0,120.3 285.4,120.9 285.9,120.6 286.3,120.6 286.7,121.0 287.1,120.7 287.6,121.6 288.0,121.6 288.4,120.8 288.9,121.7 289.3,122.0 289.7,122.1 290.1,122.8 290.6,122.7 291.0,122.8 291.4,122.7 291.8,123.0 292.3,123.2 292.7,123.4 293.1,123.6 293.6,123.6 294.0,124.1 294.4,123.9 294.8,123.9 295.3,124.6 295.7,125.0 296.1,125.2 296.6,124.9 297.0,125.6 297.4,125.7 297.8,125.1 298.3,126.4 298.7,126.5 299.1,125.8 299.6,126.5 300.0,126.3 300.4,126.1 300.8,126.0 301.3,126.6 301.7,126.2 302.1,127.7 302.5,127.2 303.0,127.5 303.4,126.7 303.8,128.1 304.3,127.4 304.7,128.5 305.1,129.1 305.5,128.4 306.0,129.0 306.4,129.2 306.8,129.0 307.3,128.8 307.7,129.7 308.1,129.6 308.5,130.6 309.0,129.4 309.4,129.4 309.8,129.8 310.3,130.1 310.7,130.0 311.1,130.6 311.5,131.1 312.0,130.6 312.4,130.8 312.8,130.9 313.2,131.7 313.7,131.5 314.1,130.6 314.5,131.4 315.0,132.1 315.4,131.9 315.8,133.3 316.2,132.8 316.7,132.8 317.1,131.7 317.5,132.8 318.0,132.8 318.4,132.5 318.8,133.3 319.2,134.3 319.7,134.2 320.1,133.7 320.5,133.8 321.0,134.2 321.4,133.9 321.8,135.5 322.2,134.1 322.7,134.0 323.1,134.6 323.5,135.5 323.9,135.8 324.4,135.0 324.8,136.5 325.2,135.7 325.7,136.7 326.1,136.0 326.5,135.7 326.9,135.9 327.4,136.3 327.8,136.4 328.2,136.3 328.7,137.2 329.1,136.4 329.5,136.8 329.9,137.1 330.4,136.8 330.8,137.6 331.2,138.0 331.7,138.1 332.1,138.1 332.5,138.8 332.9,138.4 333.4,138.3 333.8,138.9 334.2,138.3 334.6,138.9 335.1,138.6 335.5,139.6 335.9,139.1 336.4,139.3 336.8,139.0 337.2,139.8 337.6,139.7 338.1,140.3 338.5,139.5 338.9,140.0 339.4,139.8 339.8,140.9 340.2,140.2 340.6,139.6 341.1,140.7 341.5,140.8 341.9,142.1 342.4,142.0 342.8,141.9 343.2,140.7 343.6,142.1 344.1,141.8 344.5,142.1 344.9,141.5 345.3,141.6 345.8,142.0 346.2,142.9 346.6,142.6 347.1,142.4 347.5,142.2 347.9,144.0 348.3,142.6 348.8,142.6 349.2,144.0 349.6,144.2 350.1,143.6 350.5,143.9 350.9,143.8 351.3,144.1 351.8,143.5 352.2,144.2 352.6,145.3 353.1,144.2 353.5,144.9 353.9,144.2 354.3,145.0 354.8,144.9 355.2,145.6 355.6,145.4 356.0,145.0 356.5,145.5 356.9,145.3 357.3,144.8 357.8,145.2 358.2,145.5 358.6,147.2 359.0,146.2 359.5,145.5 359.9,146.7 360.3,146.1 360.8,147.6 361.2,147.3 361.6,147.1 362.0,146.3 362.5,146.3 362.9,147.2 363.3,147.1 363.8,146.7 364.2,147.8 364.6,147.7 365.0,147.6 365.5,147.3 365.9,148.2 366.3,147.9 366.7,147.8 367.2,148.2 367.6,148.8 368.0,147.8 368.5,148.3 368.9,147.0 369.3,148.7 369.7,149.2 370.2,148.4 370.6,149.6 371.0,149.5 371.5,149.2 371.9,149.9 372.3,148.5 372.7,148.7 373.2,149.4 373.6,148.8 374.0,148.8 374.5,149.3 374.9,149.9 375.3,150.0 375.7,150.1 376.2,149.6 376.6,148.9 377.0,149.8 377.4,151.3 377.9,151.0 378.3,151.0 378.7,150.2 379.2,150.4 379.6,150.2 380.0,150.9 380.4,150.7 380.9,151.1 381.3,150.2 381.7,151.6 382.2,151.7 382.6,152.1 383.0,150.7 383.4,152.4 383.9,152.3 384.3,150.5 384.7,151.7 385.2,152.5 385.6,150.9 386.0,152.4 386.4,151.6 386.9,152.5 387.3,152.9 387.7,152.1 388.1,152.2 388.6,152.3 389.0,153.1 389.4,153.2 389.9,153.1 390.3,152.3 390.7,153.0 391.1,153.0 391.6,153.2 392.0,153.9 392.4,152.5 392.9,154.5 393.3,153.8 393.7,152.6 394.1,153.0 394.6,154.5 395.0,155.0 395.4,153.7 395.9,153.1 396.3,153.4 396.7,153.1 397.1,153.1 397.6,154.8 398.0,153.7 398.4,153.0 398.8,154.2 399.3,154.2 399.7,154.3 400.1,155.2 400.6,155.8 401.0,155.6 401.4,154.3 401.8,155.1 402.3,155.3 402.7,154.2 403.1,154.6 403.6,154.4 404.0,154.4 404.4,154.5 404.8,154.7 405.3,154.6 405.7,155.2 406.1,154.2 406.6,154.8 407.0,156.1 407.4,155.1 407.8,153.4 408.3,155.6 408.7,156.4 409.1,155.2 409.5,154.3 410.0,155.7 410.4,156.8 410.8,154.9 411.3,154.6 411.7,156.1 412.1,155.9 412.5,156.2 413.0,157.7 413.4,156.1 413.8,156.1 414.3,155.0 414.7,154.5 415.1,157.0 415.5,155.9 416.0,154.9 416.4,156.8 416.8,156.7 417.3,155.2 417.7,157.1 418.1,154.9 418.5,155.9 419.0,156.3 419.4,156.1 419.8,157.4 420.2,155.4 420.7,156.5 421.1,158.9 421.5,156.6 422.0,157.0 422.4,155.0 422.8,155.9 423.2,158.5 423.7,157.4 424.1,156.2 424.5,155.6 425.0,156.8 425.4,157.9 425.8,158.0 426.2,157.7 426.7,156.6 427.1,156.5 427.5,155.5 428.0,157.4 428.4,157.1 428.8,157.2 429.2,156.7 429.7,158.2 430.1,157.0 430.5,158.2 430.9,157.0 431.4,157.4 431.8,157.6 432.2,157.1 432.7,159.2 433.1,157.5 433.5,157.4 433.9,157.3 434.4,156.4 434.8,158.0 435.2,157.7 435.7,157.3 436.1,157.2 436.5,159.2 436.9,157.6 437.4,158.5 437.8,156.1 438.2,158.5 438.7,156.8 439.1,158.0 439.5,158.5 439.9,158.1 440.4,157.0 440.8,158.7 441.2,157.4 441.6,158.0 442.1,157.4 442.5,156.7 442.9,157.1 443.4,157.4 443.8,157.8 444.2,157.8 444.6,158.9 445.1,157.6 445.5,158.4 445.9,157.4 446.4,157.9 446.8,157.3 447.2,156.9 447.6,158.8 448.1,158.1 448.5,159.1 448.9,158.3 449.4,158.3 449.8,159.3 450.2,158.2 450.6,158.1 451.1,158.4 451.5,158.3 451.9,159.3 452.3,157.5 452.8,158.7 453.2,159.0 453.6,158.8 454.1,158.4 454.5,158.4 454.9,158.8 455.3,158.1 455.8,158.7 456.2,159.1 456.6,158.3 457.1,159.3 457.5,160.3 457.9,157.6 458.3,158.9 458.8,158.1 459.2,159.0 459.6,158.9 460.1,159.4 460.5,158.5 460.9,159.2 461.3,159.8 461.8,159.8 462.2,159.7 462.6,158.9 463.0,157.9 463.5,158.7 463.9,159.0 464.3,159.1 464.8,159.9 465.2,158.4 465.6,160.0 466.0,159.1 466.5,160.8 466.9,159.6 467.3,158.0 467.8,158.4 468.2,159.7 468.6,159.6 469.0,158.6 469.5,158.1 469.9,159.0 470.3,159.5 470.8,159.6 471.2,159.3 471.6,159.9 472.0,160.4 472.5,160.9 472.9,161.1 473.3,158.7 473.7,158.5 474.2,159.7 474.6,159.2 475.0,160.0 475.5,158.5 475.9,159.9 476.3,160.8 476.7,159.1 477.2,159.7 477.6,159.3 478.0,158.9 478.5,158.7 478.9,161.3 479.3,159.3 479.7,159.4 480.2,160.6 480.6,160.3 481.0,159.2 481.5,159.9 481.9,159.5 482.3,158.9 482.7,158.8 483.2,160.0 483.6,160.0 484.0,159.0 484.4,160.0 484.9,159.9 485.3,158.1 485.7,161.0 486.2,159.7 486.6,159.4 487.0,160.3 487.4,160.1 487.9,160.2 488.3,160.3 488.7,160.8 489.2,160.3 489.6,159.6 490.0,160.7 490.4,158.9 490.9,159.5 491.3,159.6 491.7,159.8 492.2,159.9 492.6,160.4 493.0,161.1 493.4,160.5 493.9,159.5 494.3,159.3 494.7,159.2 495.1,161.6 495.6,160.1 496.0,159.7 496.4,160.9 496.9,159.0 497.3,162.5 497.7,160.0 498.1,159.5 498.6,159.2 499.0,162.0 499.4,160.0 499.9,160.5 500.3,161.6 500.7,159.3 501.1,161.3 501.6,159.5 502.0,159.2 502.4,160.3 502.9,159.0 503.3,159.2 503.7,160.9 504.1,161.5 504.6,162.0 505.0,161.0 505.4,159.8 505.8,161.4 506.3,161.7 506.7,161.1 507.1,160.7 507.6,162.2 508.0,160.9 508.4,159.6 508.8,160.7 509.3,161.9 509.7,160.2 510.1,159.8 510.6,159.5 511.0,162.3 511.4,161.6 511.8,159.9 512.3,161.0 512.7,161.0 513.1,162.0 513.6,160.8 514.0,162.3 514.4,160.4 514.8,159.9 515.3,161.0 515.7,161.0 516.1,161.0 516.5,161.7 517.0,161.6 517.4,162.8 517.8,159.5 518.3,160.0 518.7,160.8 519.1,160.6 519.5,161.7 520.0,160.7 520.4,160.5 520.8,161.3 521.3,161.6 521.7,160.6 522.1,161.2 522.5,158.9 523.0,160.9 523.4,161.2 523.8,161.1 524.3,160.7 524.7,162.3 525.1,160.7 525.5,160.3 526.0,160.3 526.4,159.6 526.8,161.0 527.2,161.1 527.7,161.8 528.1,160.6 528.5,160.7 529.0,160.6 529.4,161.3 529.8,160.6 530.2,162.4 530.7,162.9 531.1,160.3 531.5,159.7 532.0,162.1 532.4,160.0 532.8,161.3 533.2,161.3 533.7,161.5 534.1,161.1 534.5,160.2 535.0,160.4 535.4,161.2 535.8,161.5 536.2,161.4 536.7,161.2 537.1,161.1 537.5,161.2 537.9,161.9 538.4,162.2 538.8,161.0 539.2,161.9 539.7,159.4 540.1,162.2 540.5,160.9 540.9,160.6 541.4,159.0 541.8,158.9 542.2,161.1 542.7,161.2 543.1,161.1 543.5,161.8 543.9,161.1 544.4,161.8 544.8,161.5 545.2,161.4 545.7,162.3 546.1,162.1 546.5,159.9 546.9,161.5 547.4,162.7 547.8,161.3 548.2,161.1 548.6,163.2 549.1,159.9 549.5,161.6 549.9,161.1 550.4,161.3 550.8,160.3 551.2,161.1 551.6,160.1 552.1,162.4 552.5,162.7 552.9,161.2 553.4,160.7 553.8,160.1 554.2,160.7 554.6,159.9 555.1,161.8 555.5,161.1 555.9,161.5 556.4,160.7 556.8,161.5 557.2,160.1 557.6,161.6 558.1,161.5 558.5,161.1 558.9,161.9 559.3,160.9 559.8,161.0 560.2,160.0 560.6,159.3 561.1,161.7 561.5,161.9 561.9,161.7 562.3,160.8 562.8,160.6 563.2,160.5 563.6,160.3 564.1,161.4 564.5,161.2 564.9,162.7 565.3,160.4 565.8,162.9 566.2,160.9 566.6,160.8 567.1,160.6 567.5,161.8 567.9,161.7 568.3,162.1 568.8,161.8 569.2,161.7 569.6,162.5 570.0,161.8 570.5,164.2 570.9,161.1 571.3,161.7 571.8,162.5 572.2,161.0 572.6,160.9 573.0,163.0 573.5,161.9 573.9,161.6 574.3,161.1 574.8,161.5 575.2,162.4 575.6,163.4 576.0,160.9 576.5,161.0 576.9,161.5 577.3,161.5 577.8,162.1 578.2,162.8 578.6,161.2 579.0,162.5 579.5,162.7 579.9,161.6 580.3,161.8 580.7,162.1 581.2,162.7 581.6,161.4 582.0,161.6 582.5,162.5 582.9,161.7 583.3,161.4 583.7,161.7 584.2,162.1 584.6,163.2 585.0,162.5 585.5,160.8 585.9,160.7 586.3,161.4 586.7,162.6 587.2,161.1 587.6,160.9 588.0,162.1 588.5,161.6 588.9,160.7 589.3,160.3 589.7,161.2 590.2,161.6 590.6,161.6 591.0,161.2 591.4,161.7 591.9,161.8 592.3,160.7 592.7,161.4 593.2,163.0 593.6,163.4 594.0,162.8 594.4,161.9 594.9,162.1 595.3,161.4" fill="none" stroke="#106a30" stroke-width="1.2" stroke-linejoin="round" /><polyline points="66.3,163.5 66.7,162.0 67.1,162.0 67.6,161.5 68.0,162.5 68.4,163.8 68.9,164.4 69.3,161.0 69.7,166.6 70.1,163.5 70.6,164.3 71.0,162.4 71.4,163.4 71.9,163.3 72.3,161.3 72.7,163.5 73.1,164.5 73.6,161.0 74.0,161.2 74.4,160.7 74.9,161.7 75.3,163.8 75.7,160.8 76.1,163.2 76.6,162.3 77.0,164.4 77.4,163.6 77.8,161.8 78.3,161.5 78.7,162.5 79.1,160.7 79.6,162.7 80.0,166.2 80.4,161.8 80.8,166.3 81.3,165.4 81.7,163.3 82.1,161.7 82.6,161.7 83.0,163.0 83.4,162.0 83.8,164.7 84.3,159.1 84.7,163.0 85.1,162.8 85.6,162.9 86.0,160.8 86.4,162.3 86.8,162.3 87.3,163.2 87.7,163.2 88.1,162.3 88.5,162.6 89.0,162.4 89.4,163.5 89.8,160.9 90.3,161.7 90.7,160.0 91.1,161.5 91.5,162.2 92.0,162.6 92.4,161.0 92.8,162.4 93.3,164.1 93.7,163.8 94.1,166.3 94.5,160.5 95.0,160.3 95.4,164.8 95.8,164.2 96.3,163.9 96.7,163.6 97.1,161.8 97.5,162.1 98.0,162.1 98.4,161.7 98.8,161.9 99.2,161.7 99.7,165.3 100.1,163.6 100.5,161.7 101.0,165.7 101.4,160.5 101.8,160.6 102.2,162.3 102.7,162.0 103.1,163.1 103.5,160.6 104.0,161.5 104.4,162.2 104.8,165.1 105.2,160.9 105.7,163.9 106.1,161.6 106.5,163.0 107.0,162.1 107.4,160.1 107.8,164.8 108.2,158.8 108.7,147.3 109.1,134.2 109.5,117.5 109.9,107.5 110.4,96.6 110.8,87.6 111.2,80.4 111.7,74.3 112.1,67.8 112.5,64.7 112.9,62.1 113.4,59.0 113.8,56.0 114.2,53.3 114.7,51.8 115.1,50.6 115.5,48.8 115.9,47.4 116.4,45.8 116.8,44.3 117.2,43.6 117.7,42.8 118.1,42.3 118.5,41.5 118.9,41.0 119.4,40.3 119.8,39.8 120.2,39.1 120.6,39.1 121.1,38.9 121.5,38.6 121.9,38.9 122.4,38.7 122.8,38.5 123.2,38.4 123.6,38.5 124.1,38.4 124.5,38.7 124.9,38.7 125.4,39.0 125.8,39.3 126.2,39.3 126.6,39.5 127.1,39.8 127.5,40.1 127.9,40.5 128.4,40.8 128.8,40.9 129.2,41.3 129.6,41.5 130.1,41.9 130.5,42.1 130.9,42.3 131.3,42.6 131.8,42.9 132.2,43.2 132.6,43.3 133.1,43.7 133.5,44.0 133.9,44.2 134.3,44.6 134.8,44.7 135.2,44.9 135.6,45.3 136.1,45.7 136.5,46.0 136.9,46.1 137.3,46.5 137.8,46.8 138.2,46.9 138.6,47.3 139.1,47.4 139.5,47.7 139.9,48.0 140.3,48.1 140.8,48.4 141.2,48.8 141.6,49.2 142.0,49.2 142.5,49.5 142.9,49.9 143.3,50.2 143.8,50.2 144.2,50.5 144.6,51.0 145.0,51.3 145.5,51.5 145.9,51.8 146.3,52.0 146.8,52.1 147.2,52.4 147.6,52.6 148.0,53.1 148.5,53.4 148.9,53.2 149.3,53.5 149.8,53.7 150.2,54.1 150.6,54.1 151.0,54.4 151.5,54.8 151.9,54.8 152.3,55.4 152.7,55.7 153.2,55.6 153.6,55.7 154.0,56.2 154.5,56.3 154.9,56.5 155.3,56.7 155.7,56.8 156.2,57.1 156.6,57.4 157.0,57.8 157.5,57.9 157.9,58.1 158.3,58.5 158.7,58.7 159.2,58.8 159.6,59.1 160.0,59.3 160.5,59.3 160.9,59.5 161.3,59.8 161.7,60.1 162.2,60.4 162.6,60.5 163.0,60.8 163.4,61.1 163.9,61.4 164.3,61.4 164.7,61.9 165.2,61.8 165.6,62.0 166.0,62.3 166.4,62.6 166.9,62.6 167.3,63.1 167.7,63.3 168.2,63.7 168.6,63.8 169.0,64.1 169.4,64.3 169.9,64.1 170.3,64.4 170.7,64.8 171.2,65.3 171.6,65.2 172.0,65.4 172.4,65.6 172.9,66.1 173.3,65.9 173.7,66.0 174.1,66.6 174.6,67.0 175.0,67.0 175.4,67.4 175.9,67.5 176.3,67.6 176.7,68.0 177.1,67.9 177.6,68.3 178.0,68.4 178.4,68.6 178.9,68.8 179.3,68.9 179.7,69.5 180.1,69.5 180.6,69.8 181.0,70.1 181.4,70.4 181.9,70.5 182.3,70.8 182.7,71.2 183.1,71.0 183.6,71.3 184.0,71.6 184.4,71.7 184.8,72.4 185.3,72.1 185.7,72.7 186.1,72.8 186.6,72.8 187.0,72.9 187.4,73.3 187.8,73.6 188.3,73.7 188.7,73.6 189.1,74.3 189.6,74.4 190.0,74.8 190.4,74.7 190.8,75.0 191.3,75.2 191.7,75.5 192.1,75.9 192.6,76.1 193.0,76.3 193.4,76.3 193.8,76.7 194.3,77.0 194.7,77.0 195.1,77.6 195.5,77.9 196.0,77.9 196.4,77.6 196.8,78.2 197.3,78.5 197.7,78.5 198.1,79.4 198.5,79.2 199.0,79.3 199.4,79.3 199.8,79.7 200.3,80.1 200.7,80.3 201.1,80.6 201.5,80.9 202.0,81.0 202.4,81.2 202.8,81.4 203.3,81.5 203.7,81.4 204.1,82.0 204.5,82.1 205.0,82.3 205.4,82.7 205.8,83.2 206.2,83.3 206.7,83.1 207.1,83.6 207.5,84.4 208.0,84.1 208.4,84.2 208.8,84.5 209.2,84.9 209.7,85.1 210.1,84.8 210.5,85.0 211.0,85.4 211.4,85.7 211.8,86.0 212.2,86.0 212.7,86.4 213.1,86.2 213.5,87.1 214.0,87.1 214.4,87.4 214.8,87.8 215.2,87.9 215.7,88.3 216.1,88.2 216.5,88.7 216.9,89.0 217.4,89.3 217.8,89.7 218.2,89.4 218.7,89.8 219.1,89.9 219.5,90.5 219.9,90.3 220.4,90.8 220.8,90.6 221.2,90.7 221.7,91.1 222.1,91.4 222.5,91.9 222.9,91.6 223.4,91.6 223.8,92.2 224.2,92.5 224.7,92.5 225.1,92.8 225.5,92.9 225.9,93.3 226.4,93.7 226.8,93.1 227.2,94.0 227.6,93.8 228.1,94.6 228.5,94.2 228.9,94.7 229.4,94.9 229.8,95.2 230.2,95.3 230.6,95.8 231.1,95.6 231.5,96.1 231.9,96.4 232.4,96.6 232.8,96.4 233.2,96.9 233.6,97.5 234.1,97.6 234.5,97.4 234.9,98.1 235.4,97.7 235.8,98.2 236.2,98.5 236.6,98.5 237.1,98.6 237.5,99.5 237.9,99.7 238.3,99.4 238.8,99.6 239.2,99.6 239.6,99.8 240.1,100.6 240.5,101.4 240.9,100.9 241.3,100.6 241.8,100.6 242.2,101.7 242.6,101.2 243.1,101.8 243.5,102.0 243.9,102.7 244.3,102.3 244.8,102.2 245.2,102.4 245.6,103.0 246.1,103.1 246.5,103.1 246.9,103.1 247.3,104.0 247.8,103.8 248.2,103.6 248.6,104.3 249.0,104.4 249.5,104.6 249.9,105.0 250.3,105.5 250.8,104.8 251.2,105.6 251.6,105.0 252.0,105.3 252.5,106.4 252.9,107.1 253.3,106.0 253.8,107.2 254.2,105.6 254.6,107.4 255.0,107.5 255.5,107.3 255.9,107.8 256.3,108.0 256.8,107.3 257.2,107.3 257.6,108.0 258.0,109.1 258.5,108.6 258.9,108.8 259.3,109.2 259.7,108.8 260.2,109.5 260.6,110.4 261.0,110.6 261.5,109.8 261.9,109.5 262.3,110.9 262.7,111.2 263.2,110.1 263.6,111.0 264.0,111.2 264.5,110.8 264.9,111.6 265.3,111.9 265.7,113.1 266.2,111.8 266.6,112.7 267.0,111.8 267.5,112.5 267.9,113.7 268.3,112.5 268.7,113.4 269.2,112.9 269.6,113.2 270.0,114.0 270.4,114.7 270.9,114.0 271.3,114.3 271.7,115.1 272.2,115.0 272.6,114.8 273.0,115.3 273.4,115.5 273.9,115.4 274.3,115.9 274.7,117.1 275.2,116.3 275.6,115.9 276.0,116.1 276.4,117.3 276.9,116.6 277.3,115.4 277.7,117.3 278.2,118.0 278.6,118.3 279.0,117.7 279.4,118.5 279.9,118.7 280.3,118.1 280.7,118.2 281.1,118.3 281.6,118.5 282.0,119.7 282.4,119.8 282.9,118.8 283.3,119.3 283.7,119.7 284.1,120.8 284.6,120.7 285.0,119.5 285.4,121.4 285.9,120.1 286.3,120.6 286.7,121.0 287.1,121.5 287.6,121.3 288.0,121.1 288.4,120.5 288.9,121.8 289.3,122.6 289.7,121.5 290.1,121.8 290.6,122.7 291.0,123.2 291.4,123.8 291.8,123.4 292.3,123.0 292.7,123.3 293.1,122.5 293.6,123.6 294.0,124.2 294.4,123.6 294.8,123.5 295.3,124.3 295.7,124.7 296.1,124.0 296.6,125.4 297.0,124.7 297.4,124.8 297.8,125.4 298.3,124.4 298.7,126.7 299.1,124.9 299.6,126.9 300.0,126.0 300.4,127.4 300.8,127.6 301.3,127.5 301.7,126.1 302.1,127.4 302.5,128.4 303.0,127.9 303.4,127.2 303.8,128.6 304.3,127.1 304.7,128.0 305.1,128.5 305.5,128.2 306.0,127.8 306.4,128.6 306.8,128.1 307.3,129.4 307.7,129.1 308.1,129.8 308.5,130.5 309.0,128.2 309.4,130.4 309.8,131.2 310.3,130.6 310.7,129.4 311.1,130.9 311.5,130.3 312.0,130.6 312.4,130.7 312.8,130.6 313.2,130.9 313.7,130.9 314.1,132.4 314.5,132.6 315.0,131.2 315.4,131.6 315.8,132.6 316.2,130.6 316.7,133.7 317.1,132.9 317.5,132.7 318.0,133.8 318.4,134.9 318.8,133.9 319.2,133.0 319.7,133.7 320.1,133.4 320.5,134.3 321.0,134.7 321.4,133.6 321.8,134.8 322.2,133.8 322.7,133.9 323.1,134.5 323.5,135.1 323.9,134.0 324.4,135.6 324.8,135.3 325.2,137.8 325.7,136.8 326.1,136.3 326.5,135.6 326.9,135.6 327.4,137.0 327.8,136.8 328.2,137.5 328.7,136.5 329.1,136.6 329.5,137.8 329.9,136.8 330.4,137.8 330.8,138.2 331.2,138.6 331.7,138.3 332.1,136.6 332.5,137.7 332.9,138.3 333.4,138.3 333.8,138.9 334.2,140.1 334.6,137.1 335.1,137.0 335.5,139.6 335.9,140.2 336.4,138.2 336.8,139.2 337.2,139.7 337.6,139.1 338.1,141.3 338.5,139.2 338.9,140.6 339.4,141.4 339.8,141.8 340.2,142.2 340.6,140.7 341.1,140.8 341.5,140.7 341.9,140.6 342.4,138.7 342.8,143.3 343.2,140.7 343.6,139.6 344.1,142.2 344.5,142.7 344.9,142.3 345.3,143.5 345.8,143.4 346.2,142.5 346.6,142.8 347.1,142.5 347.5,142.7 347.9,142.9 348.3,142.1 348.8,144.4 349.2,142.1 349.6,143.4 350.1,144.4 350.5,145.0 350.9,142.1 351.3,144.0 351.8,144.3 352.2,145.1 352.6,142.7 353.1,145.1 353.5,144.7 353.9,146.0 354.3,144.0 354.8,144.5 355.2,144.3 355.6,144.6 356.0,146.1 356.5,148.3 356.9,143.8 357.3,144.7 357.8,145.9 358.2,145.2 358.6,145.9 359.0,144.4 359.5,146.4 359.9,146.0 360.3,144.2 360.8,145.3 361.2,147.8 361.6,145.4 362.0,146.7 362.5,146.8 362.9,146.2 363.3,148.0 363.8,146.6 364.2,146.6 364.6,148.2 365.0,147.3 365.5,147.1 365.9,148.7 366.3,147.7 366.7,147.2 367.2,149.5 367.6,148.3 368.0,149.0 368.5,150.1 368.9,149.2 369.3,147.5 369.7,148.4 370.2,149.2 370.6,149.5 371.0,148.3 371.5,149.3 371.9,147.9 372.3,148.2 372.7,147.5 373.2,149.7 373.6,150.7 374.0,149.9 374.5,149.7 374.9,149.5 375.3,149.7 375.7,148.5 376.2,150.1 376.6,147.0 377.0,149.9 377.4,149.7 377.9,153.2 378.3,149.1 378.7,151.1 379.2,150.2 379.6,151.0 380.0,151.5 380.4,151.9 380.9,151.0 381.3,150.0 381.7,151.5 382.2,154.7 382.6,151.6 383.0,153.9 383.4,155.1 383.9,154.2 384.3,150.8 384.7,152.9 385.2,151.6 385.6,150.5 386.0,152.6 386.4,151.3 386.9,151.1 387.3,152.7 387.7,153.2 388.1,154.0 388.6,152.5 389.0,152.0 389.4,151.1 389.9,154.7 390.3,152.8 390.7,154.8 391.1,153.5 391.6,152.9 392.0,154.8 392.4,150.8 392.9,154.0 393.3,154.1 393.7,153.4 394.1,155.0 394.6,153.6 395.0,152.9 395.4,154.6 395.9,153.1 396.3,153.7 396.7,153.6 397.1,154.6 397.6,153.1 398.0,155.0 398.4,156.6 398.8,155.0 399.3,154.1 399.7,155.0 400.1,155.4 400.6,155.1 401.0,152.7 401.4,155.5 401.8,154.9 402.3,153.7 402.7,151.9 403.1,155.6 403.6,155.0 404.0,155.5 404.4,154.8 404.8,153.5 405.3,154.8 405.7,153.8 406.1,153.8 406.6,155.3 407.0,158.0 407.4,155.0 407.8,157.2 408.3,153.2 408.7,155.5 409.1,155.3 409.5,156.4 410.0,155.4 410.4,153.4 410.8,156.4 411.3,154.9 411.7,156.1 412.1,153.8 412.5,158.1 413.0,156.4 413.4,153.6 413.8,156.5 414.3,155.3 414.7,156.5 415.1,157.2 415.5,156.7 416.0,154.3 416.4,156.3 416.8,156.3 417.3,154.6 417.7,155.9 418.1,155.7 418.5,155.9 419.0,153.4 419.4,157.7 419.8,157.1 420.2,159.7 420.7,157.6 421.1,159.6 421.5,155.2 422.0,156.5 422.4,157.4 422.8,155.7 423.2,156.8 423.7,155.5 424.1,156.8 424.5,160.4 425.0,155.5 425.4,157.4 425.8,157.6 426.2,157.4 426.7,158.0 427.1,154.2 427.5,157.5 428.0,157.1 428.4,159.6 428.8,156.7 429.2,157.3 429.7,157.7 430.1,158.1 430.5,156.3 430.9,157.0 431.4,156.2 431.8,156.3 432.2,158.8 432.7,156.8 433.1,158.7 433.5,157.2 433.9,157.5 434.4,157.9 434.8,156.6 435.2,157.7 435.7,155.3 436.1,156.2 436.5,155.0 436.9,160.2 437.4,159.0 437.8,157.1 438.2,157.5 438.7,153.9 439.1,156.8 439.5,158.2 439.9,157.6 440.4,158.0 440.8,156.5 441.2,157.8 441.6,156.6 442.1,157.8 442.5,156.8 442.9,158.5 443.4,157.6 443.8,160.2 444.2,159.5 444.6,157.1 445.1,156.2 445.5,158.5 445.9,159.2 446.4,158.7 446.8,157.6 447.2,161.3 447.6,161.0 448.1,158.0 448.5,159.2 448.9,159.9 449.4,157.5 449.8,159.0 450.2,155.0 450.6,157.3 451.1,159.5 451.5,158.1 451.9,156.2 452.3,160.9 452.8,158.8 453.2,155.9 453.6,161.5 454.1,158.4 454.5,159.6 454.9,160.9 455.3,159.4 455.8,156.8 456.2,155.1 456.6,159.1 457.1,156.1 457.5,158.2 457.9,158.7 458.3,158.2 458.8,158.8 459.2,158.3 459.6,158.6 460.1,159.5 460.5,162.5 460.9,158.2 461.3,161.8 461.8,158.8 462.2,159.9 462.6,159.4 463.0,158.8 463.5,158.7 463.9,158.3 464.3,162.7 464.8,158.4 465.2,160.6 465.6,157.5 466.0,159.9 466.5,160.3 466.9,158.3 467.3,159.0 467.8,158.8 468.2,157.7 468.6,160.2 469.0,157.5 469.5,159.9 469.9,159.9 470.3,158.5 470.8,160.7 471.2,159.4 471.6,159.1 472.0,160.3 472.5,159.4 472.9,159.5 473.3,160.6 473.7,158.9 474.2,158.3 474.6,156.9 475.0,158.2 475.5,159.3 475.9,160.2 476.3,159.6 476.7,157.1 477.2,159.5 477.6,161.7 478.0,160.5 478.5,161.3 478.9,161.5 479.3,161.2 479.7,160.0 480.2,164.3 480.6,160.7 481.0,160.0 481.5,159.4 481.9,164.4 482.3,163.7 482.7,160.8 483.2,159.9 483.6,162.7 484.0,159.5 484.4,162.1 484.9,159.4 485.3,159.5 485.7,158.7 486.2,161.7 486.6,159.6 487.0,159.2 487.4,159.6 487.9,160.7 488.3,162.5 488.7,161.5 489.2,160.3 489.6,159.9 490.0,162.0 490.4,158.8 490.9,158.8 491.3,161.7 491.7,159.4 492.2,159.8 492.6,161.5 493.0,160.4 493.4,159.7 493.9,159.7 494.3,160.1 494.7,161.8 495.1,158.2 495.6,163.7 496.0,161.7 496.4,158.6 496.9,160.1 497.3,159.3 497.7,160.1 498.1,158.7 498.6,158.4 499.0,158.9 499.4,160.7 499.9,161.3 500.3,160.7 500.7,159.4 501.1,157.7 501.6,161.7 502.0,160.1 502.4,158.6 502.9,160.6 503.3,162.5 503.7,161.2 504.1,157.9 504.6,157.3 505.0,160.3 505.4,160.6 505.8,162.9 506.3,160.8 506.7,160.0 507.1,162.1 507.6,159.6 508.0,161.6 508.4,161.2 508.8,161.4 509.3,160.1 509.7,159.0 510.1,160.5 510.6,163.0 511.0,160.5 511.4,163.0 511.8,159.9 512.3,159.4 512.7,161.4 513.1,162.5 513.6,161.8 514.0,161.0 514.4,160.8 514.8,159.2 515.3,159.9 515.7,162.2 516.1,161.7 516.5,161.3 517.0,160.3 517.4,161.9 517.8,163.0 518.3,160.3 518.7,160.3 519.1,160.9 519.5,159.7 520.0,163.7 520.4,162.1 520.8,163.6 521.3,162.1 521.7,161.6 522.1,159.6 522.5,162.5 523.0,163.8 523.4,159.0 523.8,162.4 524.3,160.2 524.7,159.3 525.1,160.2 525.5,160.6 526.0,163.2 526.4,160.3 526.8,160.7 527.2,159.6 527.7,161.3 528.1,160.4 528.5,159.0 529.0,163.1 529.4,161.0 529.8,162.0 530.2,159.6 530.7,164.6 531.1,160.1 531.5,160.7 532.0,161.5 532.4,160.2 532.8,163.7 533.2,162.2 533.7,164.2 534.1,163.0 534.5,163.3 535.0,162.8 535.4,163.8 535.8,160.4 536.2,160.2 536.7,159.9 537.1,161.3 537.5,159.8 537.9,161.7 538.4,160.8 538.8,162.4 539.2,161.4 539.7,163.3 540.1,161.5 540.5,164.5 540.9,160.2 541.4,163.7 541.8,161.8 542.2,159.8 542.7,162.0 543.1,160.3 543.5,162.6 543.9,160.3 544.4,161.2 544.8,161.3 545.2,159.2 545.7,160.3 546.1,159.5 546.5,162.2 546.9,159.4 547.4,159.5 547.8,162.7 548.2,162.1 548.6,163.4 549.1,163.0 549.5,162.2 549.9,161.3 550.4,163.1 550.8,163.9 551.2,159.9 551.6,161.4 552.1,161.6 552.5,162.0 552.9,160.2 553.4,161.5 553.8,160.7 554.2,163.2 554.6,161.1 555.1,162.6 555.5,162.6 555.9,160.9 556.4,164.1 556.8,161.1 557.2,161.6 557.6,159.7 558.1,165.5 558.5,163.5 558.9,161.6 559.3,160.4 559.8,162.3 560.2,160.8 560.6,163.1 561.1,160.0 561.5,163.7 561.9,162.4 562.3,161.4 562.8,162.0 563.2,159.5 563.6,162.0 564.1,160.7 564.5,161.8 564.9,159.8 565.3,163.9 565.8,162.8 566.2,159.6 566.6,161.1 567.1,160.0 567.5,160.6 567.9,161.1 568.3,159.3 568.8,162.4 569.2,161.5 569.6,163.4 570.0,161.6 570.5,162.4 570.9,165.1 571.3,157.8 571.8,161.6 572.2,159.9 572.6,160.9 573.0,164.0 573.5,159.9 573.9,161.7 574.3,158.4 574.8,161.1 575.2,161.0 575.6,161.7 576.0,160.2 576.5,161.1 576.9,163.1 577.3,164.7 577.8,162.9 578.2,160.2 578.6,160.6 579.0,163.4 579.5,163.7 579.9,160.3 580.3,161.2 580.7,162.2 581.2,162.3 581.6,159.1 582.0,161.5 582.5,160.5 582.9,160.3 583.3,162.6 583.7,160.3 584.2,160.2 584.6,164.1 585.0,162.3 585.5,164.9 585.9,160.0 586.3,163.8 586.7,159.9 587.2,160.9 587.6,160.1 588.0,159.0 588.5,161.5 588.9,164.8 589.3,163.3" fill="none" stroke="#000" stroke-width="2" stroke-linejoin="round" /><line x1="595" y1="161" x2="595" y2="185" stroke="#106a30" stroke-width="2"/></g><g clip-path="url(#rc)"><polyline points="66.7,401.5 67.4,401.5 67.4,405.0 68.0,405.0 68.0,386.4 68.6,386.4 68.6,412.9 69.3,412.9 69.3,397.6 69.9,397.6 69.9,415.9 70.6,415.9 70.6,385.0 71.2,385.0 71.2,385.5 71.9,385.5 71.9,373.1 72.5,373.1 72.5,389.6 73.1,389.6 73.1,384.8 73.8,384.8 73.8,390.7 74.4,390.7 74.4,397.4 75.1,397.4 75.1,389.9 75.7,389.9 75.7,402.8 76.3,402.8 76.3,397.0 77.0,397.0 77.0,383.8 77.6,383.8 77.6,386.8 78.3,386.8 78.3,392.8 78.9,392.8 78.9,366.4 79.6,366.4 79.6,381.6 80.2,381.6 80.2,393.2 80.8,393.2 80.8,388.6 81.5,388.6 81.5,394.6 82.1,394.6 82.1,394.9 82.8,394.9 82.8,394.6 83.4,394.6 83.4,368.8 84.1,368.8 84.1,382.8 84.7,382.8 84.7,385.3 85.3,385.3 85.3,380.7 86.0,380.7 86.0,364.8 86.6,364.8 86.6,384.3 87.3,384.3 87.3,394.5 87.9,394.5 87.9,364.0 88.5,364.0 88.5,397.5 89.2,397.5 89.2,395.7 89.8,395.7 89.8,384.0 90.5,384.0 90.5,363.0 91.1,363.0 91.1,391.7 91.8,391.7 91.8,416.4 92.4,416.4 92.4,390.3 93.0,390.3 93.0,395.3 93.7,395.3 93.7,395.4 94.3,395.4 94.3,386.2 95.0,386.2 95.0,386.0 95.6,386.0 95.6,385.3 96.3,385.3 96.3,392.9 96.9,392.9 96.9,376.5 97.5,376.5 97.5,369.3 98.2,369.3 98.2,383.1 98.8,383.1 98.8,392.5 99.5,392.5 99.5,382.5 100.1,382.5 100.1,382.2 100.7,382.2 100.7,398.6 101.4,398.6 101.4,397.3 102.0,397.3 102.0,380.5 102.7,380.5 102.7,387.9 103.3,387.9 103.3,392.7 104.0,392.7 104.0,388.3 104.6,388.3 104.6,389.6 105.2,389.6 105.2,389.7 105.9,389.7 105.9,410.6 106.5,410.6 106.5,377.0 107.2,377.0 107.2,383.8 107.8,383.8 107.8,391.9 108.4,391.9 108.4,367.5 109.1,367.5 109.1,361.6 109.7,361.6 109.7,333.5 110.4,333.5 110.4,333.5 111.0,333.5 111.0,333.5 111.7,333.5 111.7,333.5 112.3,333.5 112.3,342.0 112.9,342.0 112.9,334.1 113.6,334.1 113.6,366.4 114.2,366.4 114.2,371.0 114.9,371.0 114.9,358.6 115.5,358.6 115.5,382.0 116.2,382.0 116.2,373.7 116.8,373.7 116.8,354.6 117.4,354.6 117.4,351.8 118.1,351.8 118.1,356.3 118.7,356.3 118.7,384.7 119.4,384.7 119.4,347.5 120.0,347.5 120.0,356.1 120.6,356.1 120.6,356.6 121.3,356.6 121.3,360.0 121.9,360.0 121.9,385.3 122.6,385.3 122.6,390.4 123.2,390.4 123.2,390.8 123.9,390.8 123.9,358.0 124.5,358.0 124.5,379.0 125.1,379.0 125.1,379.9 125.8,379.9 125.8,381.4 126.4,381.4 126.4,373.9 127.1,373.9 127.1,373.5 127.7,373.5 127.7,376.9 128.4,376.9 128.4,395.5 129.0,395.5 129.0,422.5 129.6,422.5 129.6,395.8 130.3,395.8 130.3,387.7 130.9,387.7 130.9,375.9 131.6,375.9 131.6,386.3 132.2,386.3 132.2,394.9 132.8,394.9 132.8,386.4 133.5,386.4 133.5,405.2 134.1,405.2 134.1,405.2 134.8,405.2 134.8,404.8 135.4,404.8 135.4,390.7 136.1,390.7 136.1,366.9 136.7,366.9 136.7,374.1 137.3,374.1 137.3,372.2 138.0,372.2 138.0,381.4 138.6,381.4 138.6,383.7 139.3,383.7 139.3,392.3 139.9,392.3 139.9,393.0 140.5,393.0 140.5,416.5 141.2,416.5 141.2,410.2 141.8,410.2 141.8,409.2 142.5,409.2 142.5,385.9 143.1,385.9 143.1,380.8 143.8,380.8 143.8,374.1 144.4,374.1 144.4,367.5 145.0,367.5 145.0,385.7 145.7,385.7 145.7,376.5 146.3,376.5 146.3,363.9 147.0,363.9 147.0,381.4 147.6,381.4 147.6,374.8 148.3,374.8 148.3,386.3 148.9,386.3 148.9,405.5 149.5,405.5 149.5,392.4 150.2,392.4 150.2,398.7 150.8,398.7 150.8,390.5 151.5,390.5 151.5,394.2 152.1,394.2 152.1,386.8 152.7,386.8 152.7,411.2 153.4,411.2 153.4,372.8 154.0,372.8 154.0,369.1 154.7,369.1 154.7,386.5 155.3,386.5 155.3,397.8 156.0,397.8 156.0,391.3 156.6,391.3 156.6,382.0 157.2,382.0 157.2,382.0 157.9,382.0 157.9,382.2 158.5,382.2 158.5,407.9 159.2,407.9 159.2,406.5 159.8,406.5 159.8,379.3 160.5,379.3 160.5,383.1 161.1,383.1 161.1,403.3 161.7,403.3 161.7,402.3 162.4,402.3 162.4,408.2 163.0,408.2 163.0,405.4 163.7,405.4 163.7,380.6 164.3,380.6 164.3,388.4 164.9,388.4 164.9,376.1 165.6,376.1 165.6,382.6 166.2,382.6 166.2,403.0 166.9,403.0 166.9,399.8 167.5,399.8 167.5,366.5 168.2,366.5 168.2,390.1 168.8,390.1 168.8,400.3 169.4,400.3 169.4,378.2 170.1,378.2 170.1,384.2 170.7,384.2 170.7,387.0 171.4,387.0 171.4,371.6 172.0,371.6 172.0,402.6 172.6,402.6 172.6,387.8 173.3,387.8 173.3,399.6 173.9,399.6 173.9,407.0 174.6,407.0 174.6,402.7 175.2,402.7 175.2,379.7 175.9,379.7 175.9,387.1 176.5,387.1 176.5,408.0 177.1,408.0 177.1,406.2 177.8,406.2 177.8,376.6 178.4,376.6 178.4,373.2 179.1,373.2 179.1,395.6 179.7,395.6 179.7,363.4 180.4,363.4 180.4,384.6 181.0,384.6 181.0,400.1 181.6,400.1 181.6,393.0 182.3,393.0 182.3,379.0 182.9,379.0 182.9,367.3 183.6,367.3 183.6,370.3 184.2,370.3 184.2,387.2 184.8,387.2 184.8,393.8 185.5,393.8 185.5,405.7 186.1,405.7 186.1,393.9 186.8,393.9 186.8,396.2 187.4,396.2 187.4,387.5 188.1,387.5 188.1,401.7 188.7,401.7 188.7,397.6 189.3,397.6 189.3,400.2 190.0,400.2 190.0,404.4 190.6,404.4 190.6,405.3 191.3,405.3 191.3,403.6 191.9,403.6 191.9,404.7 192.6,404.7 192.6,385.5 193.2,385.5 193.2,384.8 193.8,384.8 193.8,400.2 194.5,400.2 194.5,384.3 195.1,384.3 195.1,381.9 195.8,381.9 195.8,368.0 196.4,368.0 196.4,382.0 197.0,382.0 197.0,386.3 197.7,386.3 197.7,392.7 198.3,392.7 198.3,385.4 199.0,385.4 199.0,379.0 199.6,379.0 199.6,380.5 200.3,380.5 200.3,385.5 200.9,385.5 200.9,377.8 201.5,377.8 201.5,380.6 202.2,380.6 202.2,379.6 202.8,379.6 202.8,392.2 203.5,392.2 203.5,383.2 204.1,383.2 204.1,393.7 204.8,393.7 204.8,395.0 205.4,395.0 205.4,384.1 206.0,384.1 206.0,359.1 206.7,359.1 206.7,363.7 207.3,363.7 207.3,376.0 208.0,376.0 208.0,381.5 208.6,381.5 208.6,370.1 209.2,370.1 209.2,362.1 209.9,362.1 209.9,361.4 210.5,361.4 210.5,376.7 211.2,376.7 211.2,377.1 211.8,377.1 211.8,382.9 212.5,382.9 212.5,384.2 213.1,384.2 213.1,390.8 213.7,390.8 213.7,386.0 214.4,386.0 214.4,405.6 215.0,405.6 215.0,400.9 215.7,400.9 215.7,381.4 216.3,381.4 216.3,390.5 216.9,390.5 216.9,376.9 217.6,376.9 217.6,393.1 218.2,393.1 218.2,387.7 218.9,387.7 218.9,377.5 219.5,377.5 219.5,390.3 220.2,390.3 220.2,390.5 220.8,390.5 220.8,355.2 221.4,355.2 221.4,379.5 222.1,379.5 222.1,387.1 222.7,387.1 222.7,387.8 223.4,387.8 223.4,381.2 224.0,381.2 224.0,379.9 224.7,379.9 224.7,368.2 225.3,368.2 225.3,366.8 225.9,366.8 225.9,379.6 226.6,379.6 226.6,382.9 227.2,382.9 227.2,395.5 227.9,395.5 227.9,400.2 228.5,400.2 228.5,393.1 229.1,393.1 229.1,374.7 229.8,374.7 229.8,375.9 230.4,375.9 230.4,368.6 231.1,368.6 231.1,364.8 231.7,364.8 231.7,375.9 232.4,375.9 232.4,354.1 233.0,354.1 233.0,376.6 233.6,376.6 233.6,384.4 234.3,384.4 234.3,384.5 234.9,384.5 234.9,367.2 235.6,367.2 235.6,376.0 236.2,376.0 236.2,385.3 236.9,385.3 236.9,375.0 237.5,375.0 237.5,364.2 238.1,364.2 238.1,374.6 238.8,374.6 238.8,379.3 239.4,379.3 239.4,365.8 240.1,365.8 240.1,362.9 240.7,362.9 240.7,362.3 241.3,362.3 241.3,381.1 242.0,381.1 242.0,375.0 242.6,375.0 242.6,372.3 243.3,372.3 243.3,395.3 243.9,395.3 243.9,369.0 244.6,369.0 244.6,373.3 245.2,373.3 245.2,379.4 245.8,379.4 245.8,352.3 246.5,352.3 246.5,367.6 247.1,367.6 247.1,381.7 247.8,381.7 247.8,378.6 248.4,378.6 248.4,370.7 249.0,370.7 249.0,365.5 249.7,365.5 249.7,373.6 250.3,373.6 250.3,384.9 251.0,384.9 251.0,386.4 251.6,386.4 251.6,388.1 252.3,388.1 252.3,391.2 252.9,391.2 252.9,380.6 253.5,380.6 253.5,382.7 254.2,382.7 254.2,377.2 254.8,377.2 254.8,385.3 255.5,385.3 255.5,388.2 256.1,388.2 256.1,381.5 256.8,381.5 256.8,381.3 257.4,381.3 257.4,364.7 258.0,364.7 258.0,382.4 258.7,382.4 258.7,375.4 259.3,375.4 259.3,376.1 260.0,376.1 260.0,390.3 260.6,390.3 260.6,372.0 261.2,372.0 261.2,372.7 261.9,372.7 261.9,398.0 262.5,398.0 262.5,375.7 263.2,375.7 263.2,365.3 263.8,365.3 263.8,381.3 264.5,381.3 264.5,358.6 265.1,358.6 265.1,368.8 265.7,368.8 265.7,386.3 266.4,386.3 266.4,372.6 267.0,372.6 267.0,378.6 267.7,378.6 267.7,391.3 268.3,391.3 268.3,404.0 268.9,404.0 268.9,381.4 269.6,381.4 269.6,385.4 270.2,385.4 270.2,371.4 270.9,371.4 270.9,370.0 271.5,370.0 271.5,379.6 272.2,379.6 272.2,382.6 272.8,382.6 272.8,358.1 273.4,358.1 273.4,351.4 274.1,351.4 274.1,359.9 274.7,359.9 274.7,374.7 275.4,374.7 275.4,386.1 276.0,386.1 276.0,382.9 276.7,382.9 276.7,359.3 277.3,359.3 277.3,365.5 277.9,365.5 277.9,375.6 278.6,375.6 278.6,389.0 279.2,389.0 279.2,377.6 279.9,377.6 279.9,385.7 280.5,385.7 280.5,378.3 281.1,378.3 281.1,368.0 281.8,368.0 281.8,361.3 282.4,361.3 282.4,369.6 283.1,369.6 283.1,377.4 283.7,377.4 283.7,373.4 284.4,373.4 284.4,354.8 285.0,354.8 285.0,365.0 285.6,365.0 285.6,387.6 286.3,387.6 286.3,361.8 286.9,361.8 286.9,368.4 287.6,368.4 287.6,334.8 288.2,334.8 288.2,368.3 288.9,368.3 288.9,374.2 289.5,374.2 289.5,378.2 290.1,378.2 290.1,371.9 290.8,371.9 290.8,380.6 291.4,380.6 291.4,393.1 292.1,393.1 292.1,401.7 292.7,401.7 292.7,384.5 293.3,384.5 293.3,383.6 294.0,383.6 294.0,384.1 294.6,384.1 294.6,354.4 295.3,354.4 295.3,360.1 295.9,360.1 295.9,358.6 296.6,358.6 296.6,375.6 297.2,375.6 297.2,371.9 297.8,371.9 297.8,376.5 298.5,376.5 298.5,377.7 299.1,377.7 299.1,367.6 299.8,367.6 299.8,366.2 300.4,366.2 300.4,369.0 301.0,369.0 301.0,371.6 301.7,371.6 301.7,389.9 302.3,389.9 302.3,387.6 303.0,387.6 303.0,374.6 303.6,374.6 303.6,378.9 304.3,378.9 304.3,384.7 304.9,384.7 304.9,374.0 305.5,374.0 305.5,384.8 306.2,384.8 306.2,385.3 306.8,385.3 306.8,368.3 307.5,368.3 307.5,376.9 308.1,376.9 308.1,359.8 308.8,359.8 308.8,364.6 309.4,364.6 309.4,362.9 310.0,362.9 310.0,358.8 310.7,358.8 310.7,393.8 311.3,393.8 311.3,381.4 312.0,381.4 312.0,391.0 312.6,391.0 312.6,384.8 313.2,384.8 313.2,378.9 313.9,378.9 313.9,362.4 314.5,362.4 314.5,371.5 315.2,371.5 315.2,355.8 315.8,355.8 315.8,374.8 316.5,374.8 316.5,375.4 317.1,375.4 317.1,373.9 317.7,373.9 317.7,364.2 318.4,364.2 318.4,372.2 319.0,372.2 319.0,380.9 319.7,380.9 319.7,380.3 320.3,380.3 320.3,392.0 321.0,392.0 321.0,366.3 321.6,366.3 321.6,364.2 322.2,364.2 322.2,367.1 322.9,367.1 322.9,369.7 323.5,369.7 323.5,380.2 324.2,380.2 324.2,381.1 324.8,381.1 324.8,368.1 325.4,368.1 325.4,381.8 326.1,381.8 326.1,385.9 326.7,385.9 326.7,361.2 327.4,361.2 327.4,354.0 328.0,354.0 328.0,365.8 328.7,365.8 328.7,366.7 329.3,366.7 329.3,370.8 329.9,370.8 329.9,358.5 330.6,358.5 330.6,375.3 331.2,375.3 331.2,374.6 331.9,374.6 331.9,370.0 332.5,370.0 332.5,358.2 333.1,358.2 333.1,373.2 333.8,373.2 333.8,372.5 334.4,372.5 334.4,380.2 335.1,380.2 335.1,384.3 335.7,384.3 335.7,385.6 336.4,385.6 336.4,377.9 337.0,377.9 337.0,366.8 337.6,366.8 337.6,380.8 338.3,380.8 338.3,384.1 338.9,384.1 338.9,382.9 339.6,382.9 339.6,374.3 340.2,374.3 340.2,368.0 340.9,368.0 340.9,387.4 341.5,387.4 341.5,375.7 342.1,375.7 342.1,387.0 342.8,387.0 342.8,371.7 343.4,371.7 343.4,385.5 344.1,385.5 344.1,390.9 344.7,390.9 344.7,388.6 345.3,388.6 345.3,380.8 346.0,380.8 346.0,388.6 346.6,388.6 346.6,377.9 347.3,377.9 347.3,326.8 347.9,326.8 347.9,326.8 348.6,326.8 348.6,373.3 349.2,373.3 349.2,366.2 349.8,366.2 349.8,381.5 350.5,381.5 350.5,378.2 351.1,378.2 351.1,377.6 351.8,377.6 351.8,399.4 352.4,399.4 352.4,379.4 353.1,379.4 353.1,386.1 353.7,386.1 353.7,387.5 354.3,387.5 354.3,385.0 355.0,385.0 355.0,378.4 355.6,378.4 355.6,373.9 356.3,373.9 356.3,370.9 356.9,370.9 356.9,382.8 357.5,382.8 357.5,371.3 358.2,371.3 358.2,370.9 358.8,370.9 358.8,379.6 359.5,379.6 359.5,378.2 360.1,378.2 360.1,368.9 360.8,368.9 360.8,370.1 361.4,370.1 361.4,367.7 362.0,367.7 362.0,373.4 362.7,373.4 362.7,363.9 363.3,363.9 363.3,349.3 364.0,349.3 364.0,364.1 364.6,364.1 364.6,390.9 365.2,390.9 365.2,362.9 365.9,362.9 365.9,379.4 366.5,379.4 366.5,393.2 367.2,393.2 367.2,408.1 367.8,408.1 367.8,382.2 368.5,382.2 368.5,367.2 369.1,367.2 369.1,363.8 369.7,363.8 369.7,377.8 370.4,377.8 370.4,362.1 371.0,362.1 371.0,374.0 371.7,374.0 371.7,383.2 372.3,383.2 372.3,378.8 373.0,378.8 373.0,375.9 373.6,375.9 373.6,376.8 374.2,376.8 374.2,373.3 374.9,373.3 374.9,400.4 375.5,400.4 375.5,367.8 376.2,367.8 376.2,381.2 376.8,381.2 376.8,372.0 377.4,372.0 377.4,385.0 378.1,385.0 378.1,378.5 378.7,378.5 378.7,380.2 379.4,380.2 379.4,396.0 380.0,396.0 380.0,379.5 380.7,379.5 380.7,371.8 381.3,371.8 381.3,388.5 381.9,388.5 381.9,404.2 382.6,404.2 382.6,393.2 383.2,393.2 383.2,392.0 383.9,392.0 383.9,381.4 384.5,381.4 384.5,379.6 385.2,379.6 385.2,361.4 385.8,361.4 385.8,366.4 386.4,366.4 386.4,377.7 387.1,377.7 387.1,376.6 387.7,376.6 387.7,409.3 388.4,409.3 388.4,397.7 389.0,397.7 389.0,394.4 389.6,394.4 389.6,384.7 390.3,384.7 390.3,377.1 390.9,377.1 390.9,376.0 391.6,376.0 391.6,367.9 392.2,367.9 392.2,383.1 392.9,383.1 392.9,376.9 393.5,376.9 393.5,379.8 394.1,379.8 394.1,379.1 394.8,379.1 394.8,375.6 395.4,375.6 395.4,381.1 396.1,381.1 396.1,377.4 396.7,377.4 396.7,379.0 397.3,379.0 397.3,368.0 398.0,368.0 398.0,377.1 398.6,377.1 398.6,375.3 399.3,375.3 399.3,349.9 399.9,349.9 399.9,363.7 400.6,363.7 400.6,369.1 401.2,369.1 401.2,364.6 401.8,364.6 401.8,385.9 402.5,385.9 402.5,373.7 403.1,373.7 403.1,369.6 403.8,369.6 403.8,371.7 404.4,371.7 404.4,366.6 405.1,366.6 405.1,367.2 405.7,367.2 405.7,363.0 406.3,363.0 406.3,381.5 407.0,381.5 407.0,375.5 407.6,375.5 407.6,384.3 408.3,384.3 408.3,367.7 408.9,367.7 408.9,374.6 409.5,374.6 409.5,392.3 410.2,392.3 410.2,382.3 410.8,382.3 410.8,391.4 411.5,391.4 411.5,372.7 412.1,372.7 412.1,381.4 412.8,381.4 412.8,404.0 413.4,404.0 413.4,391.3 414.0,391.3 414.0,372.3 414.7,372.3 414.7,374.1 415.3,374.1 415.3,385.1 416.0,385.1 416.0,374.6 416.6,374.6 416.6,372.2 417.3,372.2 417.3,361.9 417.9,361.9 417.9,364.9 418.5,364.9 418.5,371.6 419.2,371.6 419.2,386.1 419.8,386.1 419.8,378.9 420.5,378.9 420.5,376.6 421.1,376.6 421.1,379.0 421.7,379.0 421.7,375.4 422.4,375.4 422.4,391.7 423.0,391.7 423.0,377.6 423.7,377.6 423.7,379.5 424.3,379.5 424.3,376.3 425.0,376.3 425.0,380.3 425.6,380.3 425.6,383.7 426.2,383.7 426.2,378.8 426.9,378.8 426.9,371.6 427.5,371.6 427.5,381.4 428.2,381.4 428.2,377.4 428.8,377.4 428.8,388.0 429.4,388.0 429.4,378.5 430.1,378.5 430.1,379.9 430.7,379.9 430.7,394.4 431.4,394.4 431.4,372.4 432.0,372.4 432.0,388.0 432.7,388.0 432.7,382.2 433.3,382.2 433.3,395.5 433.9,395.5 433.9,404.1 434.6,404.1 434.6,380.9 435.2,380.9 435.2,396.2 435.9,396.2 435.9,408.0 436.5,408.0 436.5,391.6 437.2,391.6 437.2,401.1 437.8,401.1 437.8,389.5 438.4,389.5 438.4,364.1 439.1,364.1 439.1,380.5 439.7,380.5 439.7,377.3 440.4,377.3 440.4,374.2 441.0,374.2 441.0,376.7 441.6,376.7 441.6,381.4 442.3,381.4 442.3,365.3 442.9,365.3 442.9,377.6 443.6,377.6 443.6,376.7 444.2,376.7 444.2,379.0 444.9,379.0 444.9,394.7 445.5,394.7 445.5,382.3 446.1,382.3 446.1,381.4 446.8,381.4 446.8,374.8 447.4,374.8 447.4,372.4 448.1,372.4 448.1,362.3 448.7,362.3 448.7,396.5 449.4,396.5 449.4,392.4 450.0,392.4 450.0,390.3 450.6,390.3 450.6,393.9 451.3,393.9 451.3,381.3 451.9,381.3 451.9,382.8 452.6,382.8 452.6,380.9 453.2,380.9 453.2,399.4 453.8,399.4 453.8,397.7 454.5,397.7 454.5,387.7 455.1,387.7 455.1,388.8 455.8,388.8 455.8,390.9 456.4,390.9 456.4,386.3 457.1,386.3 457.1,386.7 457.7,386.7 457.7,395.2 458.3,395.2 458.3,368.6 459.0,368.6 459.0,385.7 459.6,385.7 459.6,376.7 460.3,376.7 460.3,374.5 460.9,374.5 460.9,370.0 461.5,370.0 461.5,385.1 462.2,385.1 462.2,394.3 462.8,394.3 462.8,381.6 463.5,381.6 463.5,379.8 464.1,379.8 464.1,407.3 464.8,407.3 464.8,418.4 465.4,418.4 465.4,399.5 466.0,399.5 466.0,392.2 466.7,392.2 466.7,388.8 467.3,388.8 467.3,380.5 468.0,380.5 468.0,392.8 468.6,392.8 468.6,357.8 469.3,357.8 469.3,366.0 469.9,366.0 469.9,364.3 470.5,364.3 470.5,374.8 471.2,374.8 471.2,403.1 471.8,403.1 471.8,386.9 472.5,386.9 472.5,390.5 473.1,390.5 473.1,380.9 473.7,380.9 473.7,384.1 474.4,384.1 474.4,376.6 475.0,376.6 475.0,391.0 475.7,391.0 475.7,389.8 476.3,389.8 476.3,385.6 477.0,385.6 477.0,392.4 477.6,392.4 477.6,391.3 478.2,391.3 478.2,379.6 478.9,379.6 478.9,362.0 479.5,362.0 479.5,379.7 480.2,379.7 480.2,373.9 480.8,373.9 480.8,393.2 481.5,393.2 481.5,391.8 482.1,391.8 482.1,382.9 482.7,382.9 482.7,377.7 483.4,377.7 483.4,393.2 484.0,393.2 484.0,380.6 484.7,380.6 484.7,381.7 485.3,381.7 485.3,369.5 485.9,369.5 485.9,369.9 486.6,369.9 486.6,374.3 487.2,374.3 487.2,385.7 487.9,385.7 487.9,382.1 488.5,382.1 488.5,393.0 489.2,393.0 489.2,396.0 489.8,396.0 489.8,407.7 490.4,407.7 490.4,405.5 491.1,405.5 491.1,404.5 491.7,404.5 491.7,391.7 492.4,391.7 492.4,385.7 493.0,385.7 493.0,399.4 493.7,399.4 493.7,390.2 494.3,390.2 494.3,382.1 494.9,382.1 494.9,374.1 495.6,374.1 495.6,382.6 496.2,382.6 496.2,381.9 496.9,381.9 496.9,388.0 497.5,388.0 497.5,376.0 498.1,376.0 498.1,398.9 498.8,398.9 498.8,386.6 499.4,386.6 499.4,410.2 500.1,410.2 500.1,374.3 500.7,374.3 500.7,371.9 501.4,371.9 501.4,403.6 502.0,403.6 502.0,396.3 502.6,396.3 502.6,403.5 503.3,403.5 503.3,409.5 503.9,409.5 503.9,396.8 504.6,396.8 504.6,398.1 505.2,398.1 505.2,378.0 505.8,378.0 505.8,388.6 506.5,388.6 506.5,398.1 507.1,398.1 507.1,390.0 507.8,390.0 507.8,382.4 508.4,382.4 508.4,375.7 509.1,375.7 509.1,377.1 509.7,377.1 509.7,398.8 510.3,398.8 510.3,398.2 511.0,398.2 511.0,391.2 511.6,391.2 511.6,396.1 512.3,396.1 512.3,380.7 512.9,380.7 512.9,387.7 513.6,387.7 513.6,387.0 514.2,387.0 514.2,390.0 514.8,390.0 514.8,386.4 515.5,386.4 515.5,401.9 516.1,401.9 516.1,368.1 516.8,368.1 516.8,386.5 517.4,386.5 517.4,393.7 518.0,393.7 518.0,407.1 518.7,407.1 518.7,393.1 519.3,393.1 519.3,402.7 520.0,402.7 520.0,387.4 520.6,387.4 520.6,373.5 521.3,373.5 521.3,375.6 521.9,375.6 521.9,387.5 522.5,387.5 522.5,372.8 523.2,372.8 523.2,384.0 523.8,384.0 523.8,385.8 524.5,385.8 524.5,385.3 525.1,385.3 525.1,390.8 525.8,390.8 525.8,383.0 526.4,383.0 526.4,398.2 527.0,398.2 527.0,408.6 527.7,408.6 527.7,380.0 528.3,380.0 528.3,392.1 529.0,392.1 529.0,391.7 529.6,391.7 529.6,384.2 530.2,384.2 530.2,390.6 530.9,390.6 530.9,400.1 531.5,400.1 531.5,392.5 532.2,392.5 532.2,398.2 532.8,398.2 532.8,384.0 533.5,384.0 533.5,390.3 534.1,390.3 534.1,390.2 534.7,390.2 534.7,379.3 535.4,379.3 535.4,400.7 536.0,400.7 536.0,406.5 536.7,406.5 536.7,384.6 537.3,384.6 537.3,372.4 537.9,372.4 537.9,381.2 538.6,381.2 538.6,392.4 539.2,392.4 539.2,375.1 539.9,375.1 539.9,377.5 540.5,377.5 540.5,372.9 541.2,372.9 541.2,401.7 541.8,401.7 541.8,392.5 542.4,392.5 542.4,399.3 543.1,399.3 543.1,402.1 543.7,402.1 543.7,385.1 544.4,385.1 544.4,378.4 545.0,378.4 545.0,389.2 545.7,389.2 545.7,390.1 546.3,390.1 546.3,373.0 546.9,373.0 546.9,375.6 547.6,375.6 547.6,384.7 548.2,384.7 548.2,380.7 548.9,380.7 548.9,383.7 549.5,383.7 549.5,399.3 550.1,399.3 550.1,396.0 550.8,396.0 550.8,386.6 551.4,386.6 551.4,380.2 552.1,380.2 552.1,397.6 552.7,397.6 552.7,398.7 553.4,398.7 553.4,396.6 554.0,396.6 554.0,405.9 554.6,405.9 554.6,380.8 555.3,380.8 555.3,380.1 555.9,380.1 555.9,370.8 556.6,370.8 556.6,405.2 557.2,405.2 557.2,400.9 557.9,400.9 557.9,371.5 558.5,371.5 558.5,397.1 559.1,397.1 559.1,409.1 559.8,409.1 559.8,391.0 560.4,391.0 560.4,371.1 561.1,371.1 561.1,375.0 561.7,375.0 561.7,393.3 562.3,393.3 562.3,382.6 563.0,382.6 563.0,380.9 563.6,380.9 563.6,381.9 564.3,381.9 564.3,380.9 564.9,380.9 564.9,375.9 565.6,375.9 565.6,370.8 566.2,370.8 566.2,367.0 566.8,367.0 566.8,369.1 567.5,369.1 567.5,382.7 568.1,382.7 568.1,404.8 568.8,404.8 568.8,385.9 569.4,385.9 569.4,402.1 570.0,402.1 570.0,366.6 570.7,366.6 570.7,392.5 571.3,392.5 571.3,407.7 572.0,407.7 572.0,412.2 572.6,412.2 572.6,389.7 573.3,389.7 573.3,383.9 573.9,383.9 573.9,378.4 574.5,378.4 574.5,380.6 575.2,380.6 575.2,392.6 575.8,392.6 575.8,379.2 576.5,379.2 576.5,391.2 577.1,391.2 577.1,403.5 577.8,403.5 577.8,381.4 578.4,381.4 578.4,378.7 579.0,378.7 579.0,393.6 579.7,393.6 579.7,390.7 580.3,390.7 580.3,376.2 581.0,376.2 581.0,372.8 581.6,372.8 581.6,393.2 582.2,393.2 582.2,376.0 582.9,376.0 582.9,410.3 583.5,410.3 583.5,392.0 584.2,392.0 584.2,383.3 584.8,383.3 584.8,386.1 585.5,386.1 585.5,384.4 586.1,384.4 586.1,402.2 586.7,402.2 586.7,391.8 587.4,391.8 587.4,382.0 588.0,382.0 588.0,394.2 588.7,394.2 588.7,386.5 589.3,386.5" fill="none" stroke="#136b32" stroke-width="2.3" stroke-linejoin="round" stroke-linejoin="miter"/><line x1="50.5" y1="382.5" x2="604.7" y2="382.5" stroke="#000" stroke-width="2"/></g><line x1="50.5" y1="161.8" x2="604.7" y2="161.8" stroke="#1010ff" stroke-width="2"/><line x1="66" y1="28.5" x2="66" y2="432" stroke="#1010ff" stroke-width="2.5"/><polygon points="66.0,26 71.0,30 66.0,34" fill="#1010ff"/><polygon points="66.0,56 71.0,60 66.0,64" fill="#1010ff"/><polygon points="66.0,86 71.0,90 66.0,94" fill="#1010ff"/><polygon points="66.0,116 71.0,120 66.0,124" fill="#1010ff"/><polygon points="66.0,146 71.0,150 66.0,154" fill="#1010ff"/><polygon points="66.0,176 71.0,180 66.0,184" fill="#1010ff"/><polygon points="66.0,206 71.0,210 66.0,214" fill="#1010ff"/><polygon points="66.0,236 71.0,240 66.0,244" fill="#1010ff"/><polygon points="66.0,266 71.0,270 66.0,274" fill="#1010ff"/><polygon points="66.0,296 71.0,300 66.0,304" fill="#1010ff"/><polygon points="66.0,326 71.0,330 66.0,334" fill="#1010ff"/><polygon points="66.0,356 71.0,360 66.0,364" fill="#1010ff"/><polygon points="66.0,386 71.0,390 66.0,394" fill="#1010ff"/><polygon points="66.0,416 71.0,420 66.0,424" fill="#1010ff"/><line x1="589.5999999999999" y1="28.5" x2="589.5999999999999" y2="432" stroke="#1010ff" stroke-width="2.5"/><polygon points="589.6,26 584.6,30 589.6,34" fill="#1010ff"/><polygon points="589.6,56 584.6,60 589.6,64" fill="#1010ff"/><polygon points="589.6,86 584.6,90 589.6,94" fill="#1010ff"/><polygon points="589.6,116 584.6,120 589.6,124" fill="#1010ff"/><polygon points="589.6,146 584.6,150 589.6,154" fill="#1010ff"/><polygon points="589.6,176 584.6,180 589.6,184" fill="#1010ff"/><polygon points="589.6,206 584.6,210 589.6,214" fill="#1010ff"/><polygon points="589.6,236 584.6,240 589.6,244" fill="#1010ff"/><polygon points="589.6,266 584.6,270 589.6,274" fill="#1010ff"/><polygon points="589.6,296 584.6,300 589.6,304" fill="#1010ff"/><polygon points="589.6,326 584.6,330 589.6,334" fill="#1010ff"/><polygon points="589.6,356 584.6,360 589.6,364" fill="#1010ff"/><polygon points="589.6,386 584.6,390 589.6,394" fill="#1010ff"/><polygon points="589.6,416 584.6,420 589.6,424" fill="#1010ff"/><line x1="60.50" y1="28.50" x2="60.50" y2="32.50" stroke="#000" stroke-width="1" /><line x1="60.50" y1="432.00" x2="60.50" y2="428.00" stroke="#000" stroke-width="1" /><line x1="71.50" y1="28.50" x2="71.50" y2="30.50" stroke="#000" stroke-width="1" /><line x1="71.50" y1="432.00" x2="71.50" y2="430.00" stroke="#000" stroke-width="1" /><line x1="81.50" y1="28.50" x2="81.50" y2="30.50" stroke="#000" stroke-width="1" /><line x1="81.50" y1="432.00" x2="81.50" y2="430.00" stroke="#000" stroke-width="1" /><line x1="92.50" y1="28.50" x2="92.50" y2="30.50" stroke="#000" stroke-width="1" /><line x1="92.50" y1="432.00" x2="92.50" y2="430.00" stroke="#000" stroke-width="1" /><line x1="103.50" y1="28.50" x2="103.50" y2="32.50" stroke="#000" stroke-width="1" /><line x1="103.50" y1="432.00" x2="103.50" y2="428.00" stroke="#000" stroke-width="1" /><line x1="113.50" y1="28.50" x2="113.50" y2="30.50" stroke="#000" stroke-width="1" /><line x1="113.50" y1="432.00" x2="113.50" y2="430.00" stroke="#000" stroke-width="1" /><line x1="124.50" y1="28.50" x2="124.50" y2="30.50" stroke="#000" stroke-width="1" /><line x1="124.50" y1="432.00" x2="124.50" y2="430.00" stroke="#000" stroke-width="1" /><line x1="135.50" y1="28.50" x2="135.50" y2="30.50" stroke="#000" stroke-width="1" /><line x1="135.50" y1="432.00" x2="135.50" y2="430.00" stroke="#000" stroke-width="1" /><line x1="145.50" y1="28.50" x2="145.50" y2="32.50" stroke="#000" stroke-width="1" /><line x1="145.50" y1="432.00" x2="145.50" y2="428.00" stroke="#000" stroke-width="1" /><line x1="156.50" y1="28.50" x2="156.50" y2="30.50" stroke="#000" stroke-width="1" /><line x1="156.50" y1="432.00" x2="156.50" y2="430.00" stroke="#000" stroke-width="1" /><line x1="167.50" y1="28.50" x2="167.50" y2="30.50" stroke="#000" stroke-width="1" /><line x1="167.50" y1="432.00" x2="167.50" y2="430.00" stroke="#000" stroke-width="1" /><line x1="178.50" y1="28.50" x2="178.50" y2="30.50" stroke="#000" stroke-width="1" /><line x1="178.50" y1="432.00" x2="178.50" y2="430.00" stroke="#000" stroke-width="1" /><line x1="188.50" y1="28.50" x2="188.50" y2="32.50" stroke="#000" stroke-width="1" /><line x1="188.50" y1="432.00" x2="188.50" y2="428.00" stroke="#000" stroke-width="1" /><line x1="199.50" y1="28.50" x2="199.50" y2="30.50" stroke="#000" stroke-width="1" /><line x1="199.50" y1="432.00" x2="199.50" y2="430.00" stroke="#000" stroke-width="1" /><line x1="210.50" y1="28.50" x2="210.50" y2="30.50" stroke="#000" stroke-width="1" /><line x1="210.50" y1="432.00" x2="210.50" y2="430.00" stroke="#000" stroke-width="1" /><line x1="220.50" y1="28.50" x2="220.50" y2="30.50" stroke="#000" stroke-width="1" /><line x1="220.50" y1="432.00" x2="220.50" y2="430.00" stroke="#000" stroke-width="1" /><line x1="231.50" y1="28.50" x2="231.50" y2="32.50" stroke="#000" stroke-width="1" /><line x1="231.50" y1="432.00" x2="231.50" y2="428.00" stroke="#000" stroke-width="1" /><line x1="242.50" y1="28.50" x2="242.50" y2="30.50" stroke="#000" stroke-width="1" /><line x1="242.50" y1="432.00" x2="242.50" y2="430.00" stroke="#000" stroke-width="1" /><line x1="252.50" y1="28.50" x2="252.50" y2="30.50" stroke="#000" stroke-width="1" /><line x1="252.50" y1="432.00" x2="252.50" y2="430.00" stroke="#000" stroke-width="1" /><line x1="263.50" y1="28.50" x2="263.50" y2="30.50" stroke="#000" stroke-width="1" /><line x1="263.50" y1="432.00" x2="263.50" y2="430.00" stroke="#000" stroke-width="1" /><line x1="274.50" y1="28.50" x2="274.50" y2="32.50" stroke="#000" stroke-width="1" /><line x1="274.50" y1="432.00" x2="274.50" y2="428.00" stroke="#000" stroke-width="1" /><line x1="285.50" y1="28.50" x2="285.50" y2="30.50" stroke="#000" stroke-width="1" /><line x1="285.50" y1="432.00" x2="285.50" y2="430.00" stroke="#000" stroke-width="1" /><line x1="295.50" y1="28.50" x2="295.50" y2="30.50" stroke="#000" stroke-width="1" /><line x1="295.50" y1="432.00" x2="295.50" y2="430.00" stroke="#000" stroke-width="1" /><line x1="306.50" y1="28.50" x2="306.50" y2="30.50" stroke="#000" stroke-width="1" /><line x1="306.50" y1="432.00" x2="306.50" y2="430.00" stroke="#000" stroke-width="1" /><line x1="317.50" y1="28.50" x2="317.50" y2="32.50" stroke="#000" stroke-width="1" /><line x1="317.50" y1="432.00" x2="317.50" y2="428.00" stroke="#000" stroke-width="1" /><line x1="327.50" y1="28.50" x2="327.50" y2="30.50" stroke="#000" stroke-width="1" /><line x1="327.50" y1="432.00" x2="327.50" y2="430.00" stroke="#000" stroke-width="1" /><line x1="338.50" y1="28.50" x2="338.50" y2="30.50" stroke="#000" stroke-width="1" /><line x1="338.50" y1="432.00" x2="338.50" y2="430.00" stroke="#000" stroke-width="1" /><line x1="349.50" y1="28.50" x2="349.50" y2="30.50" stroke="#000" stroke-width="1" /><line x1="349.50" y1="432.00" x2="349.50" y2="430.00" stroke="#000" stroke-width="1" /><line x1="359.50" y1="28.50" x2="359.50" y2="32.50" stroke="#000" stroke-width="1" /><line x1="359.50" y1="432.00" x2="359.50" y2="428.00" stroke="#000" stroke-width="1" /><line x1="370.50" y1="28.50" x2="370.50" y2="30.50" stroke="#000" stroke-width="1" /><line x1="370.50" y1="432.00" x2="370.50" y2="430.00" stroke="#000" stroke-width="1" /><line x1="381.50" y1="28.50" x2="381.50" y2="30.50" stroke="#000" stroke-width="1" /><line x1="381.50" y1="432.00" x2="381.50" y2="430.00" stroke="#000" stroke-width="1" /><line x1="392.50" y1="28.50" x2="392.50" y2="30.50" stroke="#000" stroke-width="1" /><line x1="392.50" y1="432.00" x2="392.50" y2="430.00" stroke="#000" stroke-width="1" /><line x1="402.50" y1="28.50" x2="402.50" y2="32.50" stroke="#000" stroke-width="1" /><line x1="402.50" y1="432.00" x2="402.50" y2="428.00" stroke="#000" stroke-width="1" /><line x1="413.50" y1="28.50" x2="413.50" y2="30.50" stroke="#000" stroke-width="1" /><line x1="413.50" y1="432.00" x2="413.50" y2="430.00" stroke="#000" stroke-width="1" /><line x1="424.50" y1="28.50" x2="424.50" y2="30.50" stroke="#000" stroke-width="1" /><line x1="424.50" y1="432.00" x2="424.50" y2="430.00" stroke="#000" stroke-width="1" /><line x1="434.50" y1="28.50" x2="434.50" y2="30.50" stroke="#000" stroke-width="1" /><line x1="434.50" y1="432.00" x2="434.50" y2="430.00" stroke="#000" stroke-width="1" /><line x1="445.50" y1="28.50" x2="445.50" y2="32.50" stroke="#000" stroke-width="1" /><line x1="445.50" y1="432.00" x2="445.50" y2="428.00" stroke="#000" stroke-width="1" /><line x1="456.50" y1="28.50" x2="456.50" y2="30.50" stroke="#000" stroke-width="1" /><line x1="456.50" y1="432.00" x2="456.50" y2="430.00" stroke="#000" stroke-width="1" /><line x1="466.50" y1="28.50" x2="466.50" y2="30.50" stroke="#000" stroke-width="1" /><line x1="466.50" y1="432.00" x2="466.50" y2="430.00" stroke="#000" stroke-width="1" /><line x1="477.50" y1="28.50" x2="477.50" y2="30.50" stroke="#000" stroke-width="1" /><line x1="477.50" y1="432.00" x2="477.50" y2="430.00" stroke="#000" stroke-width="1" /><line x1="488.50" y1="28.50" x2="488.50" y2="32.50" stroke="#000" stroke-width="1" /><line x1="488.50" y1="432.00" x2="488.50" y2="428.00" stroke="#000" stroke-width="1" /><line x1="499.50" y1="28.50" x2="499.50" y2="30.50" stroke="#000" stroke-width="1" /><line x1="499.50" y1="432.00" x2="499.50" y2="430.00" stroke="#000" stroke-width="1" /><line x1="509.50" y1="28.50" x2="509.50" y2="30.50" stroke="#000" stroke-width="1" /><line x1="509.50" y1="432.00" x2="509.50" y2="430.00" stroke="#000" stroke-width="1" /><line x1="520.50" y1="28.50" x2="520.50" y2="30.50" stroke="#000" stroke-width="1" /><line x1="520.50" y1="432.00" x2="520.50" y2="430.00" stroke="#000" stroke-width="1" /><line x1="531.50" y1="28.50" x2="531.50" y2="32.50" stroke="#000" stroke-width="1" /><line x1="531.50" y1="432.00" x2="531.50" y2="428.00" stroke="#000" stroke-width="1" /><line x1="541.50" y1="28.50" x2="541.50" y2="30.50" stroke="#000" stroke-width="1" /><line x1="541.50" y1="432.00" x2="541.50" y2="430.00" stroke="#000" stroke-width="1" /><line x1="552.50" y1="28.50" x2="552.50" y2="30.50" stroke="#000" stroke-width="1" /><line x1="552.50" y1="432.00" x2="552.50" y2="430.00" stroke="#000" stroke-width="1" /><line x1="563.50" y1="28.50" x2="563.50" y2="30.50" stroke="#000" stroke-width="1" /><line x1="563.50" y1="432.00" x2="563.50" y2="430.00" stroke="#000" stroke-width="1" /><line x1="573.50" y1="28.50" x2="573.50" y2="32.50" stroke="#000" stroke-width="1" /><line x1="573.50" y1="432.00" x2="573.50" y2="428.00" stroke="#000" stroke-width="1" /><line x1="584.50" y1="28.50" x2="584.50" y2="30.50" stroke="#000" stroke-width="1" /><line x1="584.50" y1="432.00" x2="584.50" y2="430.00" stroke="#000" stroke-width="1" /><line x1="595.50" y1="28.50" x2="595.50" y2="30.50" stroke="#000" stroke-width="1" /><line x1="595.50" y1="432.00" x2="595.50" y2="430.00" stroke="#000" stroke-width="1" /><line x1="50.50" y1="314.50" x2="52.50" y2="314.50" stroke="#000" stroke-width="1" /><line x1="50.50" y1="311.50" x2="52.50" y2="311.50" stroke="#000" stroke-width="1" /><line x1="50.50" y1="308.50" x2="52.50" y2="308.50" stroke="#000" stroke-width="1" /><line x1="50.50" y1="305.50" x2="52.50" y2="305.50" stroke="#000" stroke-width="1" /><line x1="50.50" y1="303.50" x2="54.50" y2="303.50" stroke="#000" stroke-width="1" /><line x1="604.50" y1="303.50" x2="600.50" y2="303.50" stroke="#000" stroke-width="1" /><line x1="50.50" y1="289.50" x2="52.50" y2="289.50" stroke="#000" stroke-width="1" /><line x1="50.50" y1="280.50" x2="52.50" y2="280.50" stroke="#000" stroke-width="1" /><line x1="50.50" y1="274.50" x2="52.50" y2="274.50" stroke="#000" stroke-width="1" /><line x1="50.50" y1="269.50" x2="52.50" y2="269.50" stroke="#000" stroke-width="1" /><line x1="50.50" y1="266.50" x2="52.50" y2="266.50" stroke="#000" stroke-width="1" /><line x1="50.50" y1="262.50" x2="52.50" y2="262.50" stroke="#000" stroke-width="1" /><line x1="50.50" y1="259.50" x2="52.50" y2="259.50" stroke="#000" stroke-width="1" /><line x1="50.50" y1="257.50" x2="52.50" y2="257.50" stroke="#000" stroke-width="1" /><line x1="50.50" y1="255.50" x2="54.50" y2="255.50" stroke="#000" stroke-width="1" /><line x1="604.50" y1="255.50" x2="600.50" y2="255.50" stroke="#000" stroke-width="1" /><line x1="50.50" y1="240.50" x2="52.50" y2="240.50" stroke="#000" stroke-width="1" /><line x1="50.50" y1="232.50" x2="52.50" y2="232.50" stroke="#000" stroke-width="1" /><line x1="50.50" y1="226.50" x2="52.50" y2="226.50" stroke="#000" stroke-width="1" /><line x1="50.50" y1="221.50" x2="52.50" y2="221.50" stroke="#000" stroke-width="1" /><line x1="50.50" y1="217.50" x2="52.50" y2="217.50" stroke="#000" stroke-width="1" /><line x1="50.50" y1="214.50" x2="52.50" y2="214.50" stroke="#000" stroke-width="1" /><line x1="50.50" y1="211.50" x2="52.50" y2="211.50" stroke="#000" stroke-width="1" /><line x1="50.50" y1="209.50" x2="52.50" y2="209.50" stroke="#000" stroke-width="1" /><line x1="50.50" y1="207.50" x2="54.50" y2="207.50" stroke="#000" stroke-width="1" /><line x1="604.50" y1="207.50" x2="600.50" y2="207.50" stroke="#000" stroke-width="1" /><line x1="50.50" y1="192.50" x2="52.50" y2="192.50" stroke="#000" stroke-width="1" /><line x1="50.50" y1="183.50" x2="52.50" y2="183.50" stroke="#000" stroke-width="1" /><line x1="50.50" y1="177.50" x2="52.50" y2="177.50" stroke="#000" stroke-width="1" /><line x1="50.50" y1="173.50" x2="52.50" y2="173.50" stroke="#000" stroke-width="1" /><line x1="50.50" y1="169.50" x2="52.50" y2="169.50" stroke="#000" stroke-width="1" /><line x1="50.50" y1="166.50" x2="52.50" y2="166.50" stroke="#000" stroke-width="1" /><line x1="50.50" y1="163.50" x2="52.50" y2="163.50" stroke="#000" stroke-width="1" /><line x1="50.50" y1="160.50" x2="52.50" y2="160.50" stroke="#000" stroke-width="1" /><line x1="50.50" y1="158.50" x2="54.50" y2="158.50" stroke="#000" stroke-width="1" /><line x1="604.50" y1="158.50" x2="600.50" y2="158.50" stroke="#000" stroke-width="1" /><line x1="50.50" y1="144.50" x2="52.50" y2="144.50" stroke="#000" stroke-width="1" /><line x1="50.50" y1="135.50" x2="52.50" y2="135.50" stroke="#000" stroke-width="1" /><line x1="50.50" y1="129.50" x2="52.50" y2="129.50" stroke="#000" stroke-width="1" /><line x1="50.50" y1="124.50" x2="52.50" y2="124.50" stroke="#000" stroke-width="1" /><line x1="50.50" y1="121.50" x2="52.50" y2="121.50" stroke="#000" stroke-width="1" /><line x1="50.50" y1="117.50" x2="52.50" y2="117.50" stroke="#000" stroke-width="1" /><line x1="50.50" y1="115.50" x2="52.50" y2="115.50" stroke="#000" stroke-width="1" /><line x1="50.50" y1="112.50" x2="52.50" y2="112.50" stroke="#000" stroke-width="1" /><line x1="50.50" y1="110.50" x2="54.50" y2="110.50" stroke="#000" stroke-width="1" /><line x1="604.50" y1="110.50" x2="600.50" y2="110.50" stroke="#000" stroke-width="1" /><line x1="50.50" y1="95.50" x2="52.50" y2="95.50" stroke="#000" stroke-width="1" /><line x1="50.50" y1="87.50" x2="52.50" y2="87.50" stroke="#000" stroke-width="1" /><line x1="50.50" y1="81.50" x2="52.50" y2="81.50" stroke="#000" stroke-width="1" /><line x1="50.50" y1="76.50" x2="52.50" y2="76.50" stroke="#000" stroke-width="1" /><line x1="50.50" y1="72.50" x2="52.50" y2="72.50" stroke="#000" stroke-width="1" /><line x1="50.50" y1="69.50" x2="52.50" y2="69.50" stroke="#000" stroke-width="1" /><line x1="50.50" y1="66.50" x2="52.50" y2="66.50" stroke="#000" stroke-width="1" /><line x1="50.50" y1="64.50" x2="52.50" y2="64.50" stroke="#000" stroke-width="1" /><line x1="50.50" y1="62.50" x2="54.50" y2="62.50" stroke="#000" stroke-width="1" /><line x1="604.50" y1="62.50" x2="600.50" y2="62.50" stroke="#000" stroke-width="1" /><line x1="50.50" y1="47.50" x2="52.50" y2="47.50" stroke="#000" stroke-width="1" /><line x1="50.50" y1="39.50" x2="52.50" y2="39.50" stroke="#000" stroke-width="1" /><line x1="50.50" y1="33.50" x2="52.50" y2="33.50" stroke="#000" stroke-width="1" /><line x1="50.50" y1="428.50" x2="52.50" y2="428.50" stroke="#000" stroke-width="1" /><line x1="50.50" y1="423.50" x2="52.50" y2="423.50" stroke="#000" stroke-width="1" /><line x1="50.50" y1="418.50" x2="52.50" y2="418.50" stroke="#000" stroke-width="1" /><line x1="50.50" y1="413.50" x2="52.50" y2="413.50" stroke="#000" stroke-width="1" /><line x1="50.50" y1="408.50" x2="54.50" y2="408.50" stroke="#000" stroke-width="1" /><line x1="604.50" y1="408.50" x2="600.50" y2="408.50" stroke="#000" stroke-width="1" /><line x1="50.50" y1="403.50" x2="52.50" y2="403.50" stroke="#000" stroke-width="1" /><line x1="50.50" y1="397.50" x2="52.50" y2="397.50" stroke="#000" stroke-width="1" /><line x1="50.50" y1="392.50" x2="52.50" y2="392.50" stroke="#000" stroke-width="1" /><line x1="50.50" y1="387.50" x2="52.50" y2="387.50" stroke="#000" stroke-width="1" /><line x1="50.50" y1="382.50" x2="54.50" y2="382.50" stroke="#000" stroke-width="1" /><line x1="604.50" y1="382.50" x2="600.50" y2="382.50" stroke="#000" stroke-width="1" /><line x1="50.50" y1="377.50" x2="52.50" y2="377.50" stroke="#000" stroke-width="1" /><line x1="50.50" y1="372.50" x2="52.50" y2="372.50" stroke="#000" stroke-width="1" /><line x1="50.50" y1="367.50" x2="52.50" y2="367.50" stroke="#000" stroke-width="1" /><line x1="50.50" y1="361.50" x2="52.50" y2="361.50" stroke="#000" stroke-width="1" /><line x1="50.50" y1="356.50" x2="54.50" y2="356.50" stroke="#000" stroke-width="1" /><line x1="604.50" y1="356.50" x2="600.50" y2="356.50" stroke="#000" stroke-width="1" /><line x1="50.50" y1="351.50" x2="52.50" y2="351.50" stroke="#000" stroke-width="1" /><line x1="50.50" y1="346.50" x2="52.50" y2="346.50" stroke="#000" stroke-width="1" /><line x1="50.50" y1="341.50" x2="52.50" y2="341.50" stroke="#000" stroke-width="1" /><line x1="50.50" y1="336.50" x2="52.50" y2="336.50" stroke="#000" stroke-width="1" /><line x1="50.50" y1="330.50" x2="54.50" y2="330.50" stroke="#000" stroke-width="1" /><line x1="604.50" y1="330.50" x2="600.50" y2="330.50" stroke="#000" stroke-width="1" /><line x1="50.50" y1="325.50" x2="52.50" y2="325.50" stroke="#000" stroke-width="1" /><line x1="50.50" y1="320.50" x2="52.50" y2="320.50" stroke="#000" stroke-width="1" /><rect x="50.50" y="28.50" width="554.00" height="403.50" fill="none" stroke="#000" stroke-width="1.6"/><line x1="50.50" y1="317.00" x2="604.50" y2="317.00" stroke="#000" stroke-width="2.5" /><text x="307.0" y="23.0" text-anchor="middle" font-size="13" font-weight="bold">Fit</text><text x="60.3" y="445.5" text-anchor="middle" font-size="13" >0</text><text x="103.1" y="445.5" text-anchor="middle" font-size="13" >2</text><text x="145.9" y="445.5" text-anchor="middle" font-size="13" >4</text><text x="188.7" y="445.5" text-anchor="middle" font-size="13" >6</text><text x="231.5" y="445.5" text-anchor="middle" font-size="13" >8</text><text x="274.3" y="445.5" text-anchor="middle" font-size="13" >10</text><text x="317.1" y="445.5" text-anchor="middle" font-size="13" >12</text><text x="359.9" y="445.5" text-anchor="middle" font-size="13" >14</text><text x="402.7" y="445.5" text-anchor="middle" font-size="13" >16</text><text x="445.5" y="445.5" text-anchor="middle" font-size="13" >18</text><text x="488.3" y="445.5" text-anchor="middle" font-size="13" >20</text><text x="531.1" y="445.5" text-anchor="middle" font-size="13" >22</text><text x="573.9" y="445.5" text-anchor="middle" font-size="13" >24</text><text x="47.5" y="307.6" text-anchor="end" font-size="13">10<tspan font-size="9.5" dy="-5">0</tspan></text><text x="47.5" y="259.3" text-anchor="end" font-size="13">10<tspan font-size="9.5" dy="-5">1</tspan></text><text x="47.5" y="211.0" text-anchor="end" font-size="13">10<tspan font-size="9.5" dy="-5">2</tspan></text><text x="47.5" y="162.7" text-anchor="end" font-size="13">10<tspan font-size="9.5" dy="-5">3</tspan></text><text x="47.5" y="114.4" text-anchor="end" font-size="13">10<tspan font-size="9.5" dy="-5">4</tspan></text><text x="47.5" y="66.1" text-anchor="end" font-size="13">10<tspan font-size="9.5" dy="-5">5</tspan></text><rect x="492.5" y="34" width="107" height="60" fill="#ffffc8" stroke="#000" stroke-width="1"/><rect x="494" y="38" width="13" height="8" fill="#106a30"/><text x="511" y="45.5" font-size="10.8">Overall Decay</text><rect x="494" y="53" width="13" height="8" fill="#ffa0a0"/><text x="511" y="60.5" font-size="10.8">FRET pattern</text><rect x="494" y="68" width="13" height="8" fill="#a0f5a0"/><text x="511" y="75.5" font-size="10.8">non-FRET pattern</text><rect x="494" y="83" width="13" height="8" fill="#000"/><text x="511" y="90.5" font-size="10.8">Fitted Curve</text><text x="47" y="335.4" text-anchor="end" font-size="13">10</text><text x="47" y="361.2" text-anchor="end" font-size="13">5</text><text x="47" y="387.0" text-anchor="end" font-size="13">0</text><text x="47" y="412.8" text-anchor="end" font-size="13">-5</text><text x="327" y="464" text-anchor="middle" font-size="13">t [ns]</text><text transform="translate(21,179) rotate(-90)" text-anchor="middle" font-size="12">Intensity [ Cnts]</text><text transform="translate(21,380) rotate(-90)" text-anchor="middle" font-size="12">Resids. [StdDev.]</text></svg><div style="left:1525px;top:273px;width:144px;height:478px;background:#e0e8e0"></div><svg style="left:1531px;top:280px" width="14" height="14"><circle cx="7" cy="7" r="6" fill="#fff" stroke="#707070" stroke-width="1"/></svg><div class="t" style="left:1549px;top:280px;">Lin. Intens. Axis</div><svg style="left:1531px;top:307px" width="14" height="14"><circle cx="7" cy="7" r="6" fill="#22a03c" stroke="#3c5a3c" stroke-width="1"/><circle cx="7" cy="7" r="2.6" fill="#000"/></svg><div class="t" style="left:1549px;top:307px;">Log. Intens. Axis</div><svg style="left:1531px;top:361px" width="14" height="14"><circle cx="7" cy="7" r="6" fill="#22a03c" stroke="#3c5a3c" stroke-width="1"/><circle cx="7" cy="7" r="2.6" fill="#000"/></svg><div class="t" style="left:1549px;top:361px;">Show all Datasets</div><svg style="left:1531px;top:388px" width="14" height="14"><circle cx="7" cy="7" r="6" fill="#fff" stroke="#707070" stroke-width="1"/></svg><div class="t" style="left:1549px;top:388px;">Show Active Dataset</div><svg style="left:0;top:0" width="1669" height="752"><ellipse cx="210" cy="458" rx="78" ry="84.5" fill="none" stroke="#e8141c" stroke-width="3.1"/><ellipse cx="1231" cy="652" rx="312" ry="67.5" fill="none" stroke="#e8141c" stroke-width="3.5"/></svg><div style="left:1668px;top:273px;width:1px;height:478px;background:#8a8a8a"></div><div style="left:0px;top:751px;width:1669px;height:1px;background:#7a7a7a"></div></body></html>
